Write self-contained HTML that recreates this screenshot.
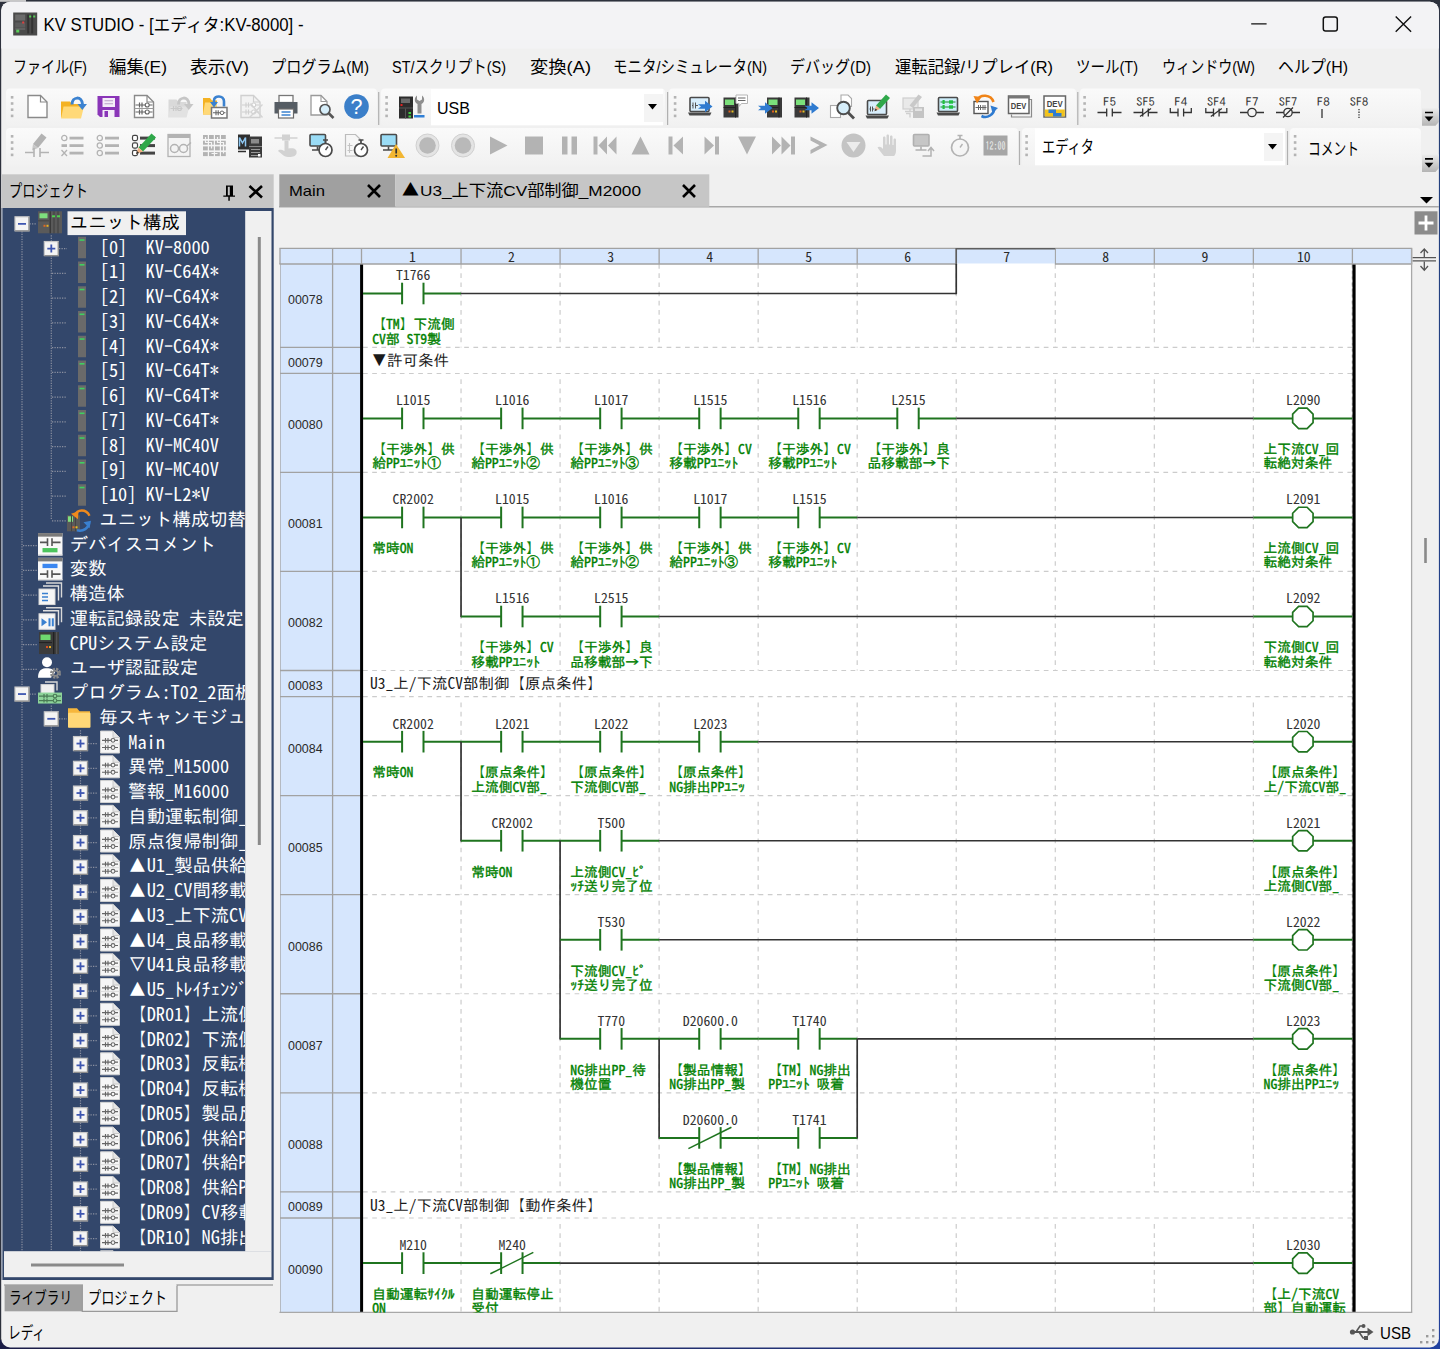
<!DOCTYPE html>
<html lang="ja"><head><meta charset="utf-8"><title>KV STUDIO - [エディタ:KV-8000]</title>
<style>
html,body{margin:0;padding:0;background:#1b2438;overflow:hidden}
body{width:1440px;height:1349px}
svg{display:block}
text{white-space:pre}
</style></head><body>
<svg width="1440" height="1349" viewBox="0 0 1440 1349">
<defs><linearGradient id="tbg" x1="0" y1="0" x2="0" y2="1"><stop offset="0" stop-color="#fafafa"/><stop offset="1" stop-color="#f1f1f1"/></linearGradient><clipPath id="winclip"><rect x="1.2" y="1.7" width="1437.7" height="1345.8" rx="9" ry="9"/></clipPath></defs>
<rect x="0" y="0" width="1440" height="1349" fill="#2d313c" />
<linearGradient id="rgt" x1="0" y1="0" x2="0" y2="1"><stop offset="0" stop-color="#2d313c"/><stop offset="0.12" stop-color="#23407e"/><stop offset="1" stop-color="#21409a"/></linearGradient>
<linearGradient id="btm" x1="0" y1="0" x2="1" y2="0"><stop offset="0" stop-color="#1a1c46"/><stop offset="0.6" stop-color="#23347a"/><stop offset="1" stop-color="#2142a0"/></linearGradient>
<rect x="1430" y="0" width="10" height="1349" fill="url(#rgt)" />
<rect x="0" y="1340" width="1440" height="9" fill="url(#btm)" />
<rect x="0" y="0" width="26" height="1.8" fill="#c8c8c8" />
<g clip-path="url(#winclip)">
<rect x="0" y="0" width="1440" height="1349" fill="#f0f0f0" />
<rect x="0" y="0" width="1440" height="48.5" fill="#f3f3f5" />
<g transform="translate(13.2,12.5)"><rect x="0" y="0" width="24" height="23" fill="#4a4a4a"/><rect x="2" y="2" width="10" height="6" fill="#6b6b6b"/><rect x="14" y="2" width="2" height="19" fill="#333"/><rect x="18" y="2" width="2" height="19" fill="#333"/><rect x="2" y="10" width="10" height="5" fill="#5c5c5c"/><rect x="9" y="9" width="2" height="2" fill="#e04040"/><rect x="3" y="17" width="3" height="3" fill="#5ad05a"/><rect x="16" y="3" width="2" height="2" fill="#5ad05a"/><rect x="20" y="3" width="2" height="2" fill="#5ad05a"/><rect x="2" y="16" width="10" height="1" fill="#777"/></g>
<text x="43.5" y="31" font-size="17.5" fill="#000" font-family='"Liberation Sans","Noto Sans CJK JP",sans-serif' textLength="260" lengthAdjust="spacingAndGlyphs" >KV STUDIO - [エディタ:KV-8000] -</text>
<line x1="1251.2" y1="23.9" x2="1266.6" y2="23.9" stroke="#111" stroke-width="1.4" />
<rect x="1323.3" y="17" width="14" height="14" rx="2.3" fill="none" stroke="#111" stroke-width="1.5"/>
<path d="M1395.7,16.5 L1411.1,31.7 M1411.1,16.5 L1395.7,31.7" stroke="#111" stroke-width="1.4" fill="none"/>
<text x="13" y="73" font-size="17" fill="#000" font-family='"Liberation Sans","Noto Sans CJK JP",sans-serif' textLength="74" lengthAdjust="spacingAndGlyphs" >ファイル(F)</text>
<text x="109" y="73" font-size="17" fill="#000" font-family='"Liberation Sans","Noto Sans CJK JP",sans-serif' textLength="58" lengthAdjust="spacingAndGlyphs" >編集(E)</text>
<text x="190" y="73" font-size="17" fill="#000" font-family='"Liberation Sans","Noto Sans CJK JP",sans-serif' textLength="59" lengthAdjust="spacingAndGlyphs" >表示(V)</text>
<text x="271" y="73" font-size="17" fill="#000" font-family='"Liberation Sans","Noto Sans CJK JP",sans-serif' textLength="98" lengthAdjust="spacingAndGlyphs" >プログラム(M)</text>
<text x="392" y="73" font-size="17" fill="#000" font-family='"Liberation Sans","Noto Sans CJK JP",sans-serif' textLength="114" lengthAdjust="spacingAndGlyphs" >ST/スクリプト(S)</text>
<text x="530" y="73" font-size="17" fill="#000" font-family='"Liberation Sans","Noto Sans CJK JP",sans-serif' textLength="61" lengthAdjust="spacingAndGlyphs" >変換(A)</text>
<text x="613" y="73" font-size="17" fill="#000" font-family='"Liberation Sans","Noto Sans CJK JP",sans-serif' textLength="154" lengthAdjust="spacingAndGlyphs" >モニタ/シミュレータ(N)</text>
<text x="790" y="73" font-size="17" fill="#000" font-family='"Liberation Sans","Noto Sans CJK JP",sans-serif' textLength="81" lengthAdjust="spacingAndGlyphs" >デバッグ(D)</text>
<text x="895" y="73" font-size="17" fill="#000" font-family='"Liberation Sans","Noto Sans CJK JP",sans-serif' textLength="158" lengthAdjust="spacingAndGlyphs" >運転記録/リプレイ(R)</text>
<text x="1076" y="73" font-size="17" fill="#000" font-family='"Liberation Sans","Noto Sans CJK JP",sans-serif' textLength="62" lengthAdjust="spacingAndGlyphs" >ツール(T)</text>
<text x="1162" y="73" font-size="17" fill="#000" font-family='"Liberation Sans","Noto Sans CJK JP",sans-serif' textLength="93" lengthAdjust="spacingAndGlyphs" >ウィンドウ(W)</text>
<text x="1278" y="73" font-size="17" fill="#000" font-family='"Liberation Sans","Noto Sans CJK JP",sans-serif' textLength="70" lengthAdjust="spacingAndGlyphs" >ヘルプ(H)</text>
<rect x="6" y="88.5" width="371" height="37.5" rx="4" fill="url(#tbg)"/>
<rect x="381" y="88.5" width="284" height="37.5" rx="4" fill="url(#tbg)"/>
<rect x="669" y="88.5" width="407" height="37.5" rx="4" fill="url(#tbg)"/>
<rect x="1080" y="88.5" width="341" height="37.5" rx="4" fill="url(#tbg)"/>
<rect x="10.8" y="96" width="2.6" height="2.6" fill="#b4b4b4" />
<rect x="10.8" y="102.2" width="2.6" height="2.6" fill="#b4b4b4" />
<rect x="10.8" y="108.4" width="2.6" height="2.6" fill="#b4b4b4" />
<rect x="10.8" y="114.6" width="2.6" height="2.6" fill="#b4b4b4" />
<rect x="385.3" y="96" width="2.6" height="2.6" fill="#b4b4b4" />
<rect x="385.3" y="102.2" width="2.6" height="2.6" fill="#b4b4b4" />
<rect x="385.3" y="108.4" width="2.6" height="2.6" fill="#b4b4b4" />
<rect x="385.3" y="114.6" width="2.6" height="2.6" fill="#b4b4b4" />
<rect x="673.8" y="96" width="2.6" height="2.6" fill="#b4b4b4" />
<rect x="673.8" y="102.2" width="2.6" height="2.6" fill="#b4b4b4" />
<rect x="673.8" y="108.4" width="2.6" height="2.6" fill="#b4b4b4" />
<rect x="673.8" y="114.6" width="2.6" height="2.6" fill="#b4b4b4" />
<rect x="1083.3" y="96" width="2.6" height="2.6" fill="#b4b4b4" />
<rect x="1083.3" y="102.2" width="2.6" height="2.6" fill="#b4b4b4" />
<rect x="1083.3" y="108.4" width="2.6" height="2.6" fill="#b4b4b4" />
<rect x="1083.3" y="114.6" width="2.6" height="2.6" fill="#b4b4b4" />
<line x1="378.7" y1="92" x2="378.7" y2="125" stroke="#b0b0b0" stroke-width="1.2" />
<line x1="667.6" y1="92" x2="667.6" y2="125" stroke="#b0b0b0" stroke-width="1.2" />
<line x1="1077.8" y1="92" x2="1077.8" y2="125" stroke="#b0b0b0" stroke-width="1.2" />
<rect x="6" y="128" width="1012" height="38.5" rx="4" fill="url(#tbg)"/>
<rect x="1022" y="128" width="263" height="38.5" rx="4" fill="url(#tbg)"/>
<rect x="1290" y="128" width="131" height="38.5" rx="4" fill="url(#tbg)"/>
<rect x="10.8" y="135" width="2.6" height="2.6" fill="#b4b4b4" />
<rect x="10.8" y="141.2" width="2.6" height="2.6" fill="#b4b4b4" />
<rect x="10.8" y="147.4" width="2.6" height="2.6" fill="#b4b4b4" />
<rect x="10.8" y="153.6" width="2.6" height="2.6" fill="#b4b4b4" />
<rect x="1025.3" y="135" width="2.6" height="2.6" fill="#b4b4b4" />
<rect x="1025.3" y="141.2" width="2.6" height="2.6" fill="#b4b4b4" />
<rect x="1025.3" y="147.4" width="2.6" height="2.6" fill="#b4b4b4" />
<rect x="1025.3" y="153.6" width="2.6" height="2.6" fill="#b4b4b4" />
<rect x="1293.8" y="135" width="2.6" height="2.6" fill="#b4b4b4" />
<rect x="1293.8" y="141.2" width="2.6" height="2.6" fill="#b4b4b4" />
<rect x="1293.8" y="147.4" width="2.6" height="2.6" fill="#b4b4b4" />
<rect x="1293.8" y="153.6" width="2.6" height="2.6" fill="#b4b4b4" />
<line x1="1019.5" y1="131" x2="1019.5" y2="165" stroke="#b0b0b0" stroke-width="1.2" />
<line x1="1287.5" y1="131" x2="1287.5" y2="165" stroke="#b0b0b0" stroke-width="1.2" />
<rect x="431" y="89" width="232" height="36.3" fill="#ffffff" />
<rect x="644" y="94" width="19" height="28" fill="#f4f4f4" />
<path d="M648,104 L657,104 L652.5,109.5 Z" fill="#000"/>
<text x="437" y="114" font-size="17" fill="#000" font-family='"Liberation Sans","Noto Sans CJK JP",sans-serif' textLength="33" lengthAdjust="spacingAndGlyphs" >USB</text>
<rect x="1035" y="128.3" width="250" height="37" fill="#ffffff" />
<rect x="1264" y="133" width="19" height="28" fill="#f4f4f4" />
<path d="M1268,144 L1277,144 L1272.5,149.5 Z" fill="#000"/>
<text x="1042" y="153" font-size="17" fill="#000" font-family='"Liberation Sans","Noto Sans CJK JP",sans-serif' textLength="52" lengthAdjust="spacingAndGlyphs" >エディタ</text>
<text x="1308" y="155" font-size="17" fill="#000" font-family='"Liberation Sans","Noto Sans CJK JP",sans-serif' textLength="51" lengthAdjust="spacingAndGlyphs" >コメント</text>
<linearGradient id="chg" x1="0" y1="0" x2="0" y2="1"><stop offset="0" stop-color="#ececec"/><stop offset="1" stop-color="#b4b4b4"/></linearGradient>
<path d="M1422,108.2 h17 v13.5 l-3.5,4 h-13.5 z" fill="url(#chg)"/>
<line x1="1425" y1="112.5" x2="1433" y2="112.5" stroke="#000" stroke-width="1.7" />
<path d="M1424.6,116.4 h8.8 l-4.4,5 z" fill="#000"/>
<path d="M1422,154.5 h17 v13.5 l-3.5,4 h-13.5 z" fill="url(#chg)"/>
<line x1="1425" y1="158.8" x2="1433" y2="158.8" stroke="#000" stroke-width="1.7" />
<path d="M1424.6,162.7 h8.8 l-4.4,5 z" fill="#000"/>
<rect x="2" y="174.3" width="271.7" height="33.7" fill="#c6c6c6" />
<text x="9" y="197" font-size="17" fill="#000" font-family='"Liberation Sans","Noto Sans CJK JP",sans-serif' textLength="79" lengthAdjust="spacingAndGlyphs" >プロジェクト</text>
<path d="M226,185.5 h7 v10 h2 v1.3 h-5.2 v4 h-1.5 v-4 h-5 v-1.3 h2.7 z M227.8,186.8 v8.5 h2 v-8.5 z" fill="#000" fill-rule="evenodd"/>
<path d="M249.5,186 L262,197.5 M262,186 L249.5,197.5" stroke="#000" stroke-width="2.6" fill="none"/>
<rect x="1" y="208" width="1.7" height="1072" fill="#8e97a8" />
<rect x="2.6" y="208" width="271.1" height="1072" fill="#33476b" />
<rect x="245.2" y="211" width="26.3" height="1040.5" fill="#f0f0f0" />
<rect x="4" y="1251.2" width="267.5" height="26" fill="#f0f0f0" />
<rect x="257.8" y="237" width="3" height="608" fill="#8a8a8a" />
<rect x="31" y="1263.5" width="93" height="3" fill="#8a8a8a" />
<line x1="4" y1="1285" x2="273" y2="1285" stroke="#a8a8a8" stroke-width="1.4" />
<rect x="4.6" y="1285" width="77.7" height="26.3" fill="#a0a0a0" />
<path d="M82.3,1285 V1311.3 H177 V1285" fill="#f0f0f0" stroke="#9a9a9a" stroke-width="1.3"/>
<rect x="83" y="1284" width="93.4" height="2" fill="#f0f0f0" />
<text x="9" y="1304" font-size="17" fill="#000" font-family='"Liberation Sans","Noto Sans CJK JP",sans-serif' textLength="63" lengthAdjust="spacingAndGlyphs" >ライブラリ</text>
<text x="88" y="1304" font-size="17" fill="#000" font-family='"Liberation Sans","Noto Sans CJK JP",sans-serif' textLength="79" lengthAdjust="spacingAndGlyphs" >プロジェクト</text>
<text x="8" y="1339" font-size="17" fill="#000" font-family='"Liberation Sans","Noto Sans CJK JP",sans-serif' textLength="37" lengthAdjust="spacingAndGlyphs" >レディ</text>
<g transform="translate(1349,1322)" fill="#555" stroke="#555"><circle cx="3.5" cy="10" r="2.6" stroke="none"/><path d="M3,10 H22" stroke-width="1.8" fill="none"/><path d="M18.5,5.8 L24.5,10 L18.5,14.2 Z" stroke="none"/><path d="M7,10 L11,4 H14" stroke-width="1.6" fill="none"/><circle cx="14.5" cy="4" r="2" stroke="none"/><path d="M10,10 L14,16 H16" stroke-width="1.6" fill="none"/><rect x="15" y="14" width="4" height="4" stroke="none"/></g>
<text x="1380" y="1339" font-size="17" fill="#000" font-family='"Liberation Sans","Noto Sans CJK JP",sans-serif' textLength="31" lengthAdjust="spacingAndGlyphs" >USB</text>
<rect x="1432" y="1341" width="2.4" height="2.4" fill="#9a9a9a" />
<rect x="1426" y="1341" width="2.4" height="2.4" fill="#9a9a9a" />
<rect x="1420" y="1341" width="2.4" height="2.4" fill="#9a9a9a" />
<rect x="1432" y="1335" width="2.4" height="2.4" fill="#9a9a9a" />
<rect x="1426" y="1335" width="2.4" height="2.4" fill="#9a9a9a" />
<rect x="1432" y="1329" width="2.4" height="2.4" fill="#9a9a9a" />
<line x1="279" y1="206.8" x2="1439" y2="206.8" stroke="#a8a8a8" stroke-width="1.4" />
<rect x="279.3" y="174.3" width="116" height="32.5" fill="#a0a0a0" />
<rect x="395.3" y="174.3" width="314" height="32.5" fill="#c6c6c6" />
<text x="289" y="196" font-size="15" fill="#000" font-family='"Liberation Sans","Noto Sans CJK JP",sans-serif' textLength="36" lengthAdjust="spacingAndGlyphs" >Main</text>
<path d="M368,185 L380,197 M380,185 L368,197" stroke="#000" stroke-width="2.6" fill="none"/>
<text x="402" y="196" font-size="16.5" fill="#000" font-family='"Noto Sans CJK JP",sans-serif' textLength="17" lengthAdjust="spacingAndGlyphs" >▲</text>
<text x="420" y="196" font-size="15.5" fill="#000" font-family='"Liberation Sans","Noto Sans CJK JP",sans-serif' textLength="221" lengthAdjust="spacingAndGlyphs" >U3_上下流CV部制御_M2000</text>
<path d="M683,185 L695,197 M695,185 L683,197" stroke="#000" stroke-width="2.6" fill="none"/>
<path d="M1420,197 L1433,197 L1426.5,203.5 Z" fill="#000"/>
<rect x="1414.5" y="211.3" width="23" height="23.2" fill="#8c8c8c" />
<path d="M1426,215.5 V230.5 M1418.5,223 H1433.5" stroke="#fff" stroke-width="2.8" fill="none"/>
<g stroke="#555" stroke-width="1.3" fill="none"><path d="M1412.5,257.7 H1436 M1412.5,260.8 H1436"/><path d="M1424.3,249.5 V257 M1420.5,253 L1424.3,249 L1428,253"/><path d="M1424.3,261.5 V270 M1420.5,266 L1424.3,270.3 L1428,266"/></g>
<rect x="1424.2" y="538" width="2.6" height="25" fill="#8a8a8a" />
<g transform="translate(25.5,94.5)"><path d="M2.5,1 H15 L21.5,7.5 V23 H2.5 Z" fill="#fff" stroke="#8a8a8a" stroke-width="1.4"/><path d="M15,1 V7.5 H21.5" fill="none" stroke="#8a8a8a" stroke-width="1.2"/></g>
<g transform="translate(61,94.5)"><path d="M0,7 H9 L11,9.5 H20 V23 H0 Z" fill="#f4b223"/><path d="M2.5,12 H23 L20,24 H0 Z" fill="#ffd978"/><path d="M11,10 C11,2 21,1 21.5,10" fill="none" stroke="#3b82d0" stroke-width="3"/><path d="M16.5,9.5 H26 L21.3,15.5 Z" fill="#3b82d0"/></g>
<g transform="translate(96.5,94.5)"><path d="M1,1.5 H23 V22.5 H3.5 L1,20 Z" fill="#8a35b8"/><rect x="6" y="3.5" width="12.5" height="9" fill="#f4ecf8"/><path d="M8,6.2 H16.5 M8,9.2 H16.5" stroke="#b9a0c8" stroke-width="1.1"/><rect x="6" y="15.5" width="12" height="7" fill="#f4ecf8"/><rect x="8" y="16.5" width="3.5" height="6" fill="#8a35b8"/></g>
<g transform="translate(132,94.5)"><path d="M2.5,1 H15 L21.5,7.5 V23 H2.5 Z" fill="#fff" stroke="#8a8a8a" stroke-width="1.4"/><path d="M15,1 V7.5 H21.5" fill="none" stroke="#8a8a8a" stroke-width="1.2"/><path d="M2.5,14 H21.5" stroke="#9a9a9a" stroke-width="1"/><path d="M3.5,10.5 H20.5 M7.5,8.0 V13.0 M10,8.0 V13.0" stroke="#666" stroke-width="1.2" fill="none"/><circle cx="15.2" cy="10.5" r="2" fill="#fff" stroke="#666" stroke-width="1.1"/><path d="M3.5,17.5 H20.5 M7.5,15.0 V20.0 M10,15.0 V20.0" stroke="#666" stroke-width="1.2" fill="none"/><circle cx="15.2" cy="17.5" r="2" fill="#fff" stroke="#666" stroke-width="1.1"/></g>
<g transform="translate(167.5,94.5)"><path d="M1,5 H9 L11,7.5 H19 V22 H1 Z" fill="#d9d9d9"/><path d="M3,12 H22 L19,23 H0.5 Z" fill="#e2e2e2"/><path d="M11,10 C11,2 21,1 21.5,10" fill="none" stroke="#c6c6c6" stroke-width="3"/><path d="M16.5,9.5 H26 L21.3,15.5 Z" fill="#c6c6c6"/><path d="M3,14 H15 M6,11.5 V16.5 M8.5,11.5 V16.5" stroke="#c9c9c9" stroke-width="1.2" fill="none"/><circle cx="12" cy="14" r="2" fill="none" stroke="#c9c9c9" stroke-width="1.1"/></g>
<g transform="translate(203,94.5)"><path d="M0,3.5 H7 L9,6 H14 V20 H0 Z" fill="#f4b223"/><path d="M2,8 H14 V20 H0 Z" fill="#ffd978"/><path d="M11,9 V6 C11,0.5 21,0.5 21,7 V12" fill="none" stroke="#3b82d0" stroke-width="2.6"/><path d="M7,7.5 L15,7.5 L11,13 Z" fill="#3b82d0"/><rect x="8.5" y="13" width="15.5" height="10.5" fill="#fff" stroke="#777" stroke-width="1.5"/><path d="M10,18.3 H22.5 M13,15.8 V20.8 M15.2,15.8 V20.8" stroke="#666" stroke-width="1.1" fill="none"/><circle cx="19" cy="18.3" r="1.8" fill="#fff" stroke="#666" stroke-width="1"/></g>
<g transform="translate(238.5,94.5)"><path d="M2.5,1 H15 L21.5,7.5 V23 H2.5 Z" fill="#f3f3f3" stroke="#d0d0d0" stroke-width="1.4"/><path d="M15,1 V7.5 H21.5" fill="none" stroke="#d0d0d0" stroke-width="1.2"/><path d="M3.5,10.5 H20.5 M7.5,8.0 V13.0 M10,8.0 V13.0" stroke="#d0d0d0" stroke-width="1.2" fill="none"/><circle cx="15.2" cy="10.5" r="2" fill="#fff" stroke="#d0d0d0" stroke-width="1.1"/><path d="M3.5,17.5 H20.5 M7.5,15.0 V20.0 M10,15.0 V20.0" stroke="#d0d0d0" stroke-width="1.2" fill="none"/><circle cx="15.2" cy="17.5" r="2" fill="#fff" stroke="#d0d0d0" stroke-width="1.1"/><path d="M12,9 L24,23 M24,10 L11,23" stroke="#d4d4d4" stroke-width="1.4"/></g>
<g transform="translate(274,94.5)"><rect x="5" y="1" width="14" height="7" fill="#fff" stroke="#777" stroke-width="1.3"/><path d="M0.5,7.5 H23.5 V19 H0.5 Z" fill="#555c63"/><rect x="4.5" y="14.5" width="15" height="9" fill="#fff" stroke="#6a6a6a" stroke-width="1.2"/><path d="M7.5,17.5 H16.5 M7.5,20.5 H16.5" stroke="#3b82d0" stroke-width="1.6"/></g>
<g transform="translate(309.5,94.5)"><path d="M1.5,1 H11.5 L17.5,7 V20.5 H1.5 Z" fill="#fff" stroke="#9a9a9a" stroke-width="1.3"/><path d="M11.5,1 V7 H17.5" fill="none" stroke="#9a9a9a" stroke-width="1.1"/><circle cx="15.5" cy="15" r="5" fill="#d6eefa" stroke="#555" stroke-width="1.7"/><path d="M19.2,18.8 L24,23.5" stroke="#555" stroke-width="2.6"/></g>
<circle cx="356.5" cy="106.5" r="12.3" fill="#3b7fc9"/>
<text x="356.5" y="114.1" font-size="21.5" fill="#fff" font-family='"Liberation Sans","Noto Sans CJK JP",sans-serif' text-anchor="middle" >?</text>
<g transform="translate(399,94.5)"><rect x="0" y="2" width="14" height="22" fill="#2c2c2c"/><rect x="2" y="4" width="9" height="4.5" fill="#6a6a6a"/><rect x="1.5" y="9.5" width="2" height="2" fill="#e02020"/><rect x="0" y="13" width="14" height="1" fill="#555"/><rect x="6" y="14" width="1" height="10" fill="#555"/><rect x="9.5" y="17.5" width="2.5" height="2" fill="#40d040"/><rect x="9.5" y="21" width="2.5" height="2" fill="#40d040"/><path d="M18,1 L18,5 L20.5,6.5 L23,5 L23,1 C26,3 26,8 22.5,9.5 L22.5,19 H18.5 L18.500,9.5 C15,8 15,3 18,1 Z" fill="#8e8e8e"/><rect x="15" y="20.5" width="10.5" height="2.5" fill="#2f7fd6"/></g>
<g transform="translate(688,94.5)"><rect x="2" y="3" width="19" height="14" rx="1" fill="#d8eefc" stroke="#4a4a4a" stroke-width="1.6"/><path d="M0,18 H23.5 L22,21 H1.5 Z" fill="#4a4a4a"/><path d="M5,8 V14 M7.5,8 V14 M4,11 H5 M7.5,11 H10" stroke="#555" stroke-width="1"/><path d="M10,9.8 H17 V6.2 L24.5,12 L17,17.8 V14.2 H10 L13,12 Z" fill="#2f7bd0"/></g>
<g transform="translate(723.5,94.5)"><g transform="translate(0,0)"><rect x="0" y="3" width="15" height="20" fill="#3a3a3a"/><rect x="1.5" y="5" width="9" height="5.500" fill="#7be07b"/><rect x="11.5" y="3" width="1" height="20" fill="#222"/><rect x="0" y="12.5" width="11.5" height="1" fill="#222"/><rect x="5" y="16" width="2" height="2" fill="#e06020"/><rect x="8" y="16" width="2" height="2" fill="#e8c020"/></g><path d="M12.5,0.5 H24 V9 H18 L15.5,12 V9 H12.5 Z" fill="#fff" stroke="#b5b5b5" stroke-width="1"/><path d="M14.500,3.500 H22 M14.500,6 H22" stroke="#666" stroke-width="1.1"/></g>
<g transform="translate(759,94.5)"><g transform="translate(8,0)"><rect x="0" y="3" width="15" height="20" fill="#3a3a3a"/><rect x="1.5" y="5" width="9" height="5.500" fill="#7be07b"/><rect x="11.5" y="3" width="1" height="20" fill="#222"/><rect x="0" y="12.5" width="11.5" height="1" fill="#222"/><rect x="5" y="16" width="2" height="2" fill="#e06020"/><rect x="8" y="16" width="2" height="2" fill="#e8c020"/></g><path d="M-1,11.3 H6 V7.7 L13.5,13.5 L6,19.3 V15.7 H-1 L2,13.5 Z" fill="#2f7bd0"/></g>
<g transform="translate(794.5,94.5)"><g transform="translate(0,0)"><rect x="0" y="3" width="15" height="20" fill="#3a3a3a"/><rect x="1.5" y="5" width="9" height="5.500" fill="#7be07b"/><rect x="11.5" y="3" width="1" height="20" fill="#222"/><rect x="0" y="12.5" width="11.5" height="1" fill="#222"/><rect x="5" y="16" width="2" height="2" fill="#e06020"/><rect x="8" y="16" width="2" height="2" fill="#e8c020"/></g><path d="M10,11.3 H17 V7.7 L24.5,13.5 L17,19.3 V15.7 H10 L13,13.5 Z" fill="#2f7bd0"/></g>
<g transform="translate(830,94.5)"><path d="M11,0.500 H18 L21.500,4 V12 H11 Z" fill="#fff" stroke="#aaa" stroke-width="1.1"/><rect x="0.5" y="11" width="10" height="12" fill="#fff" stroke="#aaa" stroke-width="1.1"/><circle cx="13.500" cy="13.500" r="6.3" fill="#d6eefa" stroke="#4e4e4e" stroke-width="1.9"/><path d="M18.300,18.300 L24,24" stroke="#4e4e4e" stroke-width="2.8"/></g>
<g transform="translate(865.5,94.5)"><g transform="translate(0,3)"><rect x="2" y="3" width="19" height="14" rx="1" fill="#d8eefc" stroke="#4a4a4a" stroke-width="1.6"/><path d="M0,18 H23.5 L22,21 H1.5 Z" fill="#4a4a4a"/></g><path d="M5,12 V17 M7,12 V17 M4,14.5 H5 M7,14.5 H9" stroke="#555" stroke-width="1"/><path d="M20.500,0 L24.500,3.500 L14.500,14.500 L10.500,11 Z" fill="#2fa84a"/><path d="M10.500,11 L14.500,14.500 L9,16.800 Z" fill="#f0b080"/><path d="M9,16.800 L10,14 L11.800,15.600 Z" fill="#333"/></g>
<g transform="translate(901,94.5)"><rect x="2" y="3.500" width="15" height="11" fill="#e9e9e9" stroke="#cfcfcf" stroke-width="1.2"/><path d="M4,17 H15 M9,14.500 V17" stroke="#cfcfcf" stroke-width="1.400"/><path d="M17.500,0 L21,2.500 L12,13.500 L8.500,11 Z" fill="#c9c9c9"/><rect x="12" y="12.500" width="11" height="11" fill="#c4c4c4"/><rect x="14" y="14" width="7" height="2.500" fill="#e4e4e4"/><path d="M5,19 L9,19 L9,23 " stroke="#cfcfcf" stroke-width="1.4" fill="none"/></g>
<g transform="translate(936.5,94.5)"><rect x="2" y="3" width="19" height="14" rx="1" fill="#cdeefa" stroke="#4a4a4a" stroke-width="1.6"/><path d="M0,18 H23.5 L22,21 H1.5 Z" fill="#4a4a4a"/><path d="M4,7.500 H19 M4,12.500 H19" stroke="#1a8a2a" stroke-width="1.1"/><rect x="6" y="5.500" width="2.200" height="4" fill="#20c040"/><rect x="6" y="10.500" width="2.200" height="4" fill="#20c040"/><rect x="12.500" y="5.800" width="4" height="3.400" fill="#20c040"/><rect x="12.500" y="10.800" width="4" height="3.400" fill="#20c040"/></g>
<g transform="translate(972,94.5)"><rect x="2" y="7" width="14" height="12" fill="#fff" stroke="#555" stroke-width="1.400"/><path d="M3.500,13 H14.500 M6.500,10.500 V15.500 M8.500,10.500 V15.500 M11,10.500 V15.500 M13,10.500 V15.500" stroke="#666" stroke-width="1"/><path d="M5.500,5.500 C8,-0.500 19,-0.500 21.500,7.500" fill="none" stroke="#f08418" stroke-width="2.600"/><path d="M1.500,1.500 L9.500,2.500 L5,9 Z" fill="#f08418"/><path d="M22.500,13 C22.500,20 15,24.500 9.500,21.500" fill="none" stroke="#2f7bd0" stroke-width="2.600"/><path d="M18.500,11 L26,13.500 L20.500,18.500 Z" fill="#2f7bd0"/></g>
<g transform="translate(1007.5,94.5)"><path d="M4,20 V22.500 H24 V5 H21" fill="none" stroke="#8a8a8a" stroke-width="1.200"/><rect x="1" y="1.500" width="20.500" height="17.500" fill="#fff" stroke="#666" stroke-width="1.500"/><rect x="1" y="1.500" width="20.500" height="2.500" fill="#777"/><text x="11" y="14.5" font-size="9.500" font-weight="bold" font-family='"Liberation Sans","Noto Sans CJK JP",sans-serif' fill="#444" text-anchor="middle" textLength="15.500" lengthAdjust="spacingAndGlyphs">DEV</text></g>
<g transform="translate(1043,94.5)"><rect x="1" y="1.500" width="21.500" height="21" fill="#fff" stroke="#666" stroke-width="1.500"/><rect x="1.800" y="15" width="20" height="7" fill="#f2c31c"/><path d="M5.500,15 H13 V18.500 H18.500 V22 H10 V18.500 H5.500 Z" fill="#2f7bd0"/><text x="11.700" y="12.500" font-size="9.500" font-weight="bold" font-family='"Liberation Sans","Noto Sans CJK JP",sans-serif' fill="#444" text-anchor="middle" textLength="16" lengthAdjust="spacingAndGlyphs">DEV</text></g>
<text x="1109.5" y="106.2" font-size="11.5" fill="#333" font-family='"IPAGothic","Noto Sans CJK JP","Liberation Mono",monospace' text-anchor="middle" textLength="13" lengthAdjust="spacingAndGlyphs" >F5</text>
<text x="1145.5" y="106.2" font-size="11.5" fill="#333" font-family='"IPAGothic","Noto Sans CJK JP","Liberation Mono",monospace' text-anchor="middle" textLength="18.5" lengthAdjust="spacingAndGlyphs" >SF5</text>
<text x="1180.8" y="106.2" font-size="11.5" fill="#333" font-family='"IPAGothic","Noto Sans CJK JP","Liberation Mono",monospace' text-anchor="middle" textLength="13" lengthAdjust="spacingAndGlyphs" >F4</text>
<text x="1216.3" y="106.2" font-size="11.5" fill="#333" font-family='"IPAGothic","Noto Sans CJK JP","Liberation Mono",monospace' text-anchor="middle" textLength="18.5" lengthAdjust="spacingAndGlyphs" >SF4</text>
<text x="1252" y="106.2" font-size="11.5" fill="#333" font-family='"IPAGothic","Noto Sans CJK JP","Liberation Mono",monospace' text-anchor="middle" textLength="13" lengthAdjust="spacingAndGlyphs" >F7</text>
<text x="1288" y="106.2" font-size="11.5" fill="#333" font-family='"IPAGothic","Noto Sans CJK JP","Liberation Mono",monospace' text-anchor="middle" textLength="18.5" lengthAdjust="spacingAndGlyphs" >SF7</text>
<text x="1323.3" y="106.2" font-size="11.5" fill="#333" font-family='"IPAGothic","Noto Sans CJK JP","Liberation Mono",monospace' text-anchor="middle" textLength="13" lengthAdjust="spacingAndGlyphs" >F8</text>
<text x="1359" y="106.2" font-size="11.5" fill="#333" font-family='"IPAGothic","Noto Sans CJK JP","Liberation Mono",monospace' text-anchor="middle" textLength="18.5" lengthAdjust="spacingAndGlyphs" >SF8</text>
<path d="M1097.5,112.5 H1106.7 M1112.3,112.5 H1121.5 M1106.7,108.5 V116.5 M1112.3,108.5 V116.5" stroke="#333" stroke-width="1.300" fill="none"/>
<path d="M1133.5,112.5 H1142.7 M1148.3,112.5 H1157.5 M1142.7,108.5 V116.5 M1148.3,108.5 V116.5" stroke="#333" stroke-width="1.300" fill="none"/>
<path d="M1140.0,116.5 L1151.0,108.5" stroke="#333" stroke-width="1.300" fill="none"/>
<path d="M1170.3,108.0 V112.5 H1178.0 M1183.6,112.5 H1191.3 V108.0 M1178.0,108.5 V116.5 M1183.6,108.5 V116.5" stroke="#333" stroke-width="1.300" fill="none"/>
<path d="M1205.8,108.0 V112.5 H1213.5 M1219.1,112.5 H1226.8 V108.0 M1213.5,108.5 V116.5 M1219.1,108.5 V116.5" stroke="#333" stroke-width="1.300" fill="none"/>
<path d="M1210.8,116.5 L1221.8,108.5" stroke="#333" stroke-width="1.300" fill="none"/>
<path d="M1240,112.5 H1247.8 M1256.2,112.5 H1264" stroke="#333" stroke-width="1.300" fill="none"/><circle cx="1252" cy="112.5" r="4.200" stroke="#333" stroke-width="1.300" fill="none"/>
<path d="M1276,112.5 H1283.8 M1292.2,112.5 H1300 M1283,117.5 L1293,107.5" stroke="#333" stroke-width="1.300" fill="none"/><circle cx="1288" cy="112.5" r="4.200" stroke="#333" stroke-width="1.300" fill="none"/>
<path d="M1322.0,109.0 V118.0" stroke="#333" stroke-width="1.300" fill="none"/>
<path d="M1359,109.0 V118.5" stroke="#333" stroke-width="1.300" stroke-dasharray="1.300 1.300" fill="none"/>
<g transform="translate(25,133.5)"><path d="M16.500,0 L21.500,4 L13,14.500 L8,10.500 Z" fill="#b3b3b3"/><path d="M8,10.500 L13,14.500 L7,17 Z" fill="#c8c8c8"/><path d="M0,19 H9 M15,19 H24 M9,14.500 V23.500 M15,14.500 V23.500" stroke="#b3b3b3" stroke-width="1.600" fill="none"/></g>
<g transform="translate(60.5,133.5)"><rect x="9" y="3.2" width="14" height="2.800" fill="#b3b3b3"/><circle cx="3.800" cy="4.5" r="2.600" fill="none" stroke="#b3b3b3" stroke-width="1.300"/><rect x="9" y="10.7" width="14" height="2.800" fill="#b3b3b3"/><rect x="1" y="10.7" width="5.500" height="2.800" fill="#b3b3b3"/><rect x="9" y="18.2" width="14" height="2.800" fill="#b3b3b3"/><path d="M1,16.5 L6.500,22.5 M6.500,16.5 L1,22.5" stroke="#b3b3b3" stroke-width="1.300"/></g>
<g transform="translate(96,133.5)"><rect x="9" y="3.2" width="14" height="2.800" fill="#b3b3b3"/><circle cx="3.800" cy="4.5" r="2.600" fill="none" stroke="#b3b3b3" stroke-width="1.300"/><rect x="9" y="10.7" width="14" height="2.800" fill="#b3b3b3"/><circle cx="3.800" cy="12" r="2.600" fill="none" stroke="#b3b3b3" stroke-width="1.300"/><rect x="9" y="18.2" width="14" height="2.800" fill="#b3b3b3"/><circle cx="3.800" cy="19.5" r="2.600" fill="none" stroke="#b3b3b3" stroke-width="1.300"/></g>
<g transform="translate(131.5,133.5)"><rect x="8.500" y="3.1" width="15" height="3" fill="#444"/><rect x="1" y="1.9" width="5" height="5.200" rx="1.500" fill="#fff" stroke="#444" stroke-width="1.200"/><rect x="8.500" y="10.6" width="15" height="3" fill="#444"/><rect x="1" y="9.4" width="5" height="5.200" rx="1.500" fill="#fff" stroke="#444" stroke-width="1.200"/><rect x="8.500" y="18.1" width="15" height="3" fill="#444"/><rect x="1" y="16.9" width="5" height="5.200" rx="1.500" fill="#fff" stroke="#444" stroke-width="1.200"/><path d="M20,0 L24.500,4 L11.500,18 L7,14 Z" fill="#2fa84a"/><path d="M7,14 L11.500,18 L4.500,20.500 Z" fill="#f0b080"/><path d="M4.500,20.500 L5.500,17.500 L7.700,19.400 Z" fill="#333"/></g>
<g transform="translate(167,133.5)"><rect x="1" y="1" width="22" height="22" fill="#f4f4f4" stroke="#b3b3b3" stroke-width="1.300"/><rect x="1" y="1" width="22" height="3.500" fill="#b3b3b3"/><circle cx="7.500" cy="15" r="4" fill="none" stroke="#b3b3b3" stroke-width="1.500"/><circle cx="16.500" cy="15" r="4" fill="none" stroke="#b3b3b3" stroke-width="1.500"/><path d="M11.500,14 H12.500 M20,12.500 L24,9" stroke="#b3b3b3" stroke-width="1.400" fill="none"/></g>
<g transform="translate(202.5,133.5)"><rect x="0.5" y="1.5" width="4.800" height="4" fill="#b3b3b3"/><rect x="6.5" y="1.5" width="4.800" height="4" fill="#b3b3b3"/><rect x="12.5" y="1.5" width="4.800" height="4" fill="#b3b3b3"/><rect x="18.5" y="1.5" width="4.800" height="4" fill="#b3b3b3"/><rect x="0.5" y="7.2" width="4.800" height="4" fill="#b3b3b3"/><rect x="6.5" y="7.2" width="4.800" height="4" fill="#b3b3b3"/><rect x="12.5" y="7.2" width="4.800" height="4" fill="#b3b3b3"/><rect x="18.5" y="7.2" width="4.800" height="4" fill="#b3b3b3"/><rect x="0.5" y="12.9" width="4.800" height="4" fill="#b3b3b3"/><rect x="6.5" y="12.9" width="4.800" height="4" fill="#b3b3b3"/><rect x="12.5" y="12.9" width="4.800" height="4" fill="#b3b3b3"/><rect x="18.5" y="12.9" width="4.800" height="4" fill="#b3b3b3"/><rect x="0.5" y="18.6" width="4.800" height="4" fill="#b3b3b3"/><rect x="6.5" y="18.6" width="4.800" height="4" fill="#b3b3b3"/><rect x="12.5" y="18.6" width="4.800" height="4" fill="#b3b3b3"/><rect x="18.5" y="18.6" width="4.800" height="4" fill="#b3b3b3"/><path d="M3,3.500 V9 H9 V15 M15,3.500 V9 H21 V20 M9,20 H15" stroke="#f4f4f4" stroke-width="1.200" fill="none"/></g>
<g transform="translate(238,133.5)"><rect x="0" y="1" width="12" height="15" fill="#2e2e2e"/><path d="M1.500,13 V4 L4.500,9.500 L7.500,4 V13" stroke="#8ec6f0" stroke-width="1.500" fill="none"/><path d="M0,18 H8" stroke="#2e2e2e" stroke-width="1.500"/><rect x="11" y="3" width="13" height="21" fill="#3a3a3a"/><rect x="13" y="5.500" width="8" height="4.500" fill="#8a8a8a"/><rect x="11" y="12.500" width="13" height="1" fill="#888"/><path d="M13,16 H22 M13,19 H22 M13,22 H22" stroke="#999" stroke-width="1.200"/><rect x="20" y="20.500" width="2.500" height="2.500" fill="#fff"/></g>
<g transform="translate(273.5,133.5)"><path d="M1,4.500 H24" stroke="#d2d2d2" stroke-width="1.300"/><rect x="8.500" y="1" width="8" height="6" fill="#d2d2d2"/><path d="M11,7 H15 V15 C21,14 24,16 23,20 C22,24 14,24.500 10,22 L4.500,17.500 C5.500,15.500 8,16 11,17.500 Z" fill="#d2d2d2"/></g>
<g transform="translate(309,133.5)"><rect x="1" y="1" width="15.500" height="11.500" rx="1" fill="#9adcf6" stroke="#4a4a4a" stroke-width="1.600"/><path d="M3,16.500 H14 M8.500,13 V16.500" stroke="#4a4a4a" stroke-width="1.600"/><circle cx="16.5" cy="16.5" r="6.5" fill="#fff" stroke="#4a4a4a" stroke-width="1.700"/><path d="M14.0,6.5 H19.0 M16.5,6.5 V10.0" stroke="#4a4a4a" stroke-width="1.700"/><path d="M16.5,16.5 L19.0,13.0" stroke="#4a4a4a" stroke-width="1.400"/></g>
<g transform="translate(344.5,133.5)"><path d="M1,1 H11 L16,6 V22.500 H1 Z" fill="#f6f6f6" stroke="#bcbcbc" stroke-width="1.200"/><path d="M3,12 H8 M3,17 H8 M5,9.500 V14.500 M5,14.500 V19.500" stroke="#c4c4c4" stroke-width="1.100"/><circle cx="16.5" cy="16.5" r="6.5" fill="#fff" stroke="#4a4a4a" stroke-width="1.700"/><path d="M14.0,6.5 H19.0 M16.5,6.5 V10.0" stroke="#4a4a4a" stroke-width="1.700"/><path d="M16.5,16.5 L19.0,13.0" stroke="#4a4a4a" stroke-width="1.400"/></g>
<g transform="translate(380,133.5)"><rect x="1" y="1" width="15.500" height="11.500" rx="1" fill="#9adcf6" stroke="#4a4a4a" stroke-width="1.600"/><path d="M3,16.500 H14 M8.500,13 V16.500" stroke="#4a4a4a" stroke-width="1.600"/><path d="M16,10.500 L25,24.500 H7.500 Z" fill="#f2b632"/><path d="M16.200,15 V20" stroke="#333" stroke-width="1.700"/><circle cx="16.200" cy="22.300" r="1" fill="#333"/></g>
<g transform="translate(415.5,133.5)"><circle cx="12" cy="12" r="11.500" fill="#e4e4e4" stroke="#d0d0d0" stroke-width="1"/><circle cx="12" cy="12" r="8.300" fill="#b9b9b9"/></g>
<g transform="translate(451,133.5)"><circle cx="12" cy="12" r="11.500" fill="#e4e4e4" stroke="#d0d0d0" stroke-width="1"/><circle cx="12" cy="12" r="8.300" fill="#b9b9b9"/></g>
<g transform="translate(486.5,133.5)"><path d="M3.500,3 L21,12 L3.500,21 Z" fill="#b3b3b3"/></g>
<g transform="translate(522,133.5)"><rect x="3" y="3" width="18" height="18" fill="#b3b3b3"/></g>
<g transform="translate(557.5,133.5)"><rect x="4.500" y="3" width="5.500" height="18" fill="#b3b3b3"/><rect x="14" y="3" width="5.500" height="18" fill="#b3b3b3"/></g>
<g transform="translate(593,133.5)"><rect x="0.500" y="3" width="4" height="18" fill="#b3b3b3"/><path d="M14,3 V21 L5.500,12 Z M23.500,3 V21 L15,12 Z" fill="#b3b3b3"/></g>
<g transform="translate(628.5,133.5)"><path d="M12,3 L21,21 H3 Z" fill="#b3b3b3"/></g>
<g transform="translate(664,133.5)"><rect x="4.500" y="3" width="4" height="18" fill="#b3b3b3"/><path d="M19,3 V21 L9.500,12 Z" fill="#b3b3b3"/></g>
<g transform="translate(699.5,133.5)"><rect x="15.500" y="3" width="4" height="18" fill="#b3b3b3"/><path d="M5,3 V21 L14.500,12 Z" fill="#b3b3b3"/></g>
<g transform="translate(735,133.5)"><path d="M3,3 H21 L12,21 Z" fill="#b3b3b3"/></g>
<g transform="translate(770.5,133.5)"><rect x="20.500" y="3" width="4" height="18" fill="#b3b3b3"/><path d="M1.500,3 V21 L10.500,12 Z M11,3 V21 L20,12 Z" fill="#b3b3b3"/></g>
<g transform="translate(806,133.5)"><path d="M4.500,3 L21.500,11.500 L4.500,20.500 V16.500 L13.500,11.800 L4.500,7 Z" fill="#b3b3b3"/></g>
<g transform="translate(841.5,133.5)"><circle cx="12" cy="12" r="12" fill="#c4c4c4"/><path d="M5,8.500 H19 L12,18.500 Z" fill="#ececec"/></g>
<g transform="translate(877,133.5)"><path d="M7,22.500 C4,19 1.500,15.500 0.500,14 C2,12.500 4,13 6,15.500 V4 C6,2.500 8.500,2.500 8.500,4 V11 H9.500 V2 C9.500,0.500 12,0.500 12,2 V11 H13 V3 C13,1.500 15.500,1.500 15.500,3 V11.500 H16.500 V6 C16.500,4.500 19,4.500 19,6 V17 C19,20 18,21.500 17,22.500 Z" fill="#d2d2d2"/></g>
<g transform="translate(912.5,133.5)"><rect x="1" y="1" width="15.500" height="11.500" rx="1" fill="#c6c6c6" stroke="#b0b0b0" stroke-width="1.600"/><path d="M3,16.500 H14 M8.500,13 V16.500" stroke="#b0b0b0" stroke-width="1.600"/><path d="M10,22.500 H18.500 V14.500 M15.500,17.500 L18.500,14 L21.500,17.500" stroke="#b3b3b3" stroke-width="1.500" fill="none"/></g>
<g transform="translate(948,133.5)"><circle cx="12" cy="14" r="8.5" fill="none" stroke="#b3b3b3" stroke-width="1.700"/><path d="M9.5,2.0 H14.5 M12,2.0 V5.5" stroke="#b3b3b3" stroke-width="1.700"/><path d="M12,14 L14.5,10.5" stroke="#b3b3b3" stroke-width="1.400"/></g>
<g transform="translate(983.5,133.5)"><rect x="0" y="2" width="24" height="20" fill="#a6a6a6"/><text x="12" y="16.500" font-size="11.500" font-family='"IPAGothic","Noto Sans CJK JP","Liberation Mono",monospace' fill="#ededed" text-anchor="middle" textLength="20" lengthAdjust="spacingAndGlyphs">12:00</text></g>
<defs><clipPath id="treeclip"><rect x="4" y="210" width="241" height="1041.2"/></clipPath></defs>
<g clip-path="url(#treeclip)">
<line x1="22" y1="231.3" x2="22" y2="685.55" stroke="#8b90a0" stroke-width="1.2" stroke-dasharray="1.25 1.25"/>
<line x1="22" y1="701.55" x2="22" y2="1251" stroke="#8b90a0" stroke-width="1.2" stroke-dasharray="1.25 1.25"/>
<line x1="51.3" y1="235.3" x2="51.3" y2="520.3" stroke="#8b90a0" stroke-width="1.2" stroke-dasharray="1.25 1.25"/>
<line x1="51.3" y1="726.3" x2="51.3" y2="1251" stroke="#8b90a0" stroke-width="1.2" stroke-dasharray="1.25 1.25"/>
<line x1="51.3" y1="705.55" x2="51.3" y2="711.3" stroke="#8b90a0" stroke-width="1.2" stroke-dasharray="1.25 1.25"/>
<line x1="80.5" y1="730.3" x2="80.5" y2="1251" stroke="#8b90a0" stroke-width="1.2" stroke-dasharray="1.25 1.25"/>
<rect x="15" y="216.8" width="14" height="14" fill="#f4f4f4" stroke="#c8c8c8" stroke-width="1.2"/>
<path d="M15,230.8 h14 v-14" fill="none" stroke="#8e8e8e" stroke-width="1.2"/>
<line x1="18" y1="223.8" x2="26" y2="223.8" stroke="#3d55b0" stroke-width="1.8" />
<line x1="29.5" y1="223.8" x2="37" y2="223.8" stroke="#8b90a0" stroke-width="1.2" stroke-dasharray="1.25 1.25"/>
<g transform="translate(38,211.3)"><rect x="0" y="0" width="24" height="22" fill="#5a5a5a"/><rect x="1.5" y="2" width="8" height="5" fill="#7ee07e"/><rect x="0" y="9" width="11" height="1" fill="#444"/><rect x="5.5" y="13.5" width="2" height="2" fill="#e06a20"/><rect x="8.5" y="13.5" width="2" height="2" fill="#e8b020"/><rect x="11.5" y="0" width="1.5" height="22" fill="#3a3a3a"/><rect x="15.5" y="0" width="1" height="22" fill="#3f3f3f"/><rect x="19.5" y="0" width="1" height="22" fill="#3f3f3f"/><rect x="14" y="4" width="3" height="2" fill="#50d050"/><rect x="19" y="4" width="3" height="2" fill="#50d050"/></g>
<rect x="67.5" y="211.3" width="118.5" height="23.8" fill="#f0f0f0" />
<text x="69.8" y="228.8" font-size="18.33" fill="#000" font-family='"IPAGothic","Noto Sans CJK JP",monospace' textLength="109.98" lengthAdjust="spacingAndGlyphs" >ユニット構成</text>
<rect x="44.3" y="241.55" width="14" height="14" fill="#f4f4f4" stroke="#c8c8c8" stroke-width="1.2"/>
<path d="M44.3,255.55 h14 v-14" fill="none" stroke="#8e8e8e" stroke-width="1.2"/>
<line x1="47.3" y1="248.55" x2="55.3" y2="248.55" stroke="#3d55b0" stroke-width="1.8" />
<line x1="51.3" y1="244.55" x2="51.3" y2="252.55" stroke="#3d55b0" stroke-width="1.8" />
<line x1="59" y1="248.55" x2="67" y2="248.55" stroke="#8b90a0" stroke-width="1.2" stroke-dasharray="1.25 1.25"/>
<rect x="78" y="236.75" width="8" height="21.5" fill="#6a6a6a" />
<rect x="79.5" y="239.25" width="5" height="1.6" fill="#3fd060" />
<text x="99.8" y="253.55" font-size="18.33" fill="#fff" font-family='"Noto Sans Mono CJK JP","Liberation Mono",monospace' textLength="64.155" lengthAdjust="spacingAndGlyphs" >[0]  KV</text>
<text x="163.955" y="253.55" font-size="18.33" fill="#fff" font-family='"IPAGothic","Noto Sans CJK JP",monospace' textLength="9.165" lengthAdjust="spacingAndGlyphs" >-</text>
<text x="173.12" y="253.55" font-size="18.33" fill="#fff" font-family='"Noto Sans Mono CJK JP","Liberation Mono",monospace' textLength="36.66" lengthAdjust="spacingAndGlyphs" >8000</text>
<line x1="52" y1="273.3" x2="67" y2="273.3" stroke="#8b90a0" stroke-width="1.2" stroke-dasharray="1.25 1.25"/>
<rect x="78" y="261.5" width="8" height="21.5" fill="#6a6a6a" />
<rect x="79.5" y="264" width="5" height="1.6" fill="#3fd060" />
<text x="99.8" y="278.3" font-size="18.33" fill="#fff" font-family='"Noto Sans Mono CJK JP","Liberation Mono",monospace' textLength="64.155" lengthAdjust="spacingAndGlyphs" >[1]  KV</text>
<text x="163.955" y="278.3" font-size="18.33" fill="#fff" font-family='"IPAGothic","Noto Sans CJK JP",monospace' textLength="9.165" lengthAdjust="spacingAndGlyphs" >-</text>
<text x="173.12" y="278.3" font-size="18.33" fill="#fff" font-family='"Noto Sans Mono CJK JP","Liberation Mono",monospace' textLength="36.66" lengthAdjust="spacingAndGlyphs" >C64X</text>
<text x="209.78" y="278.3" font-size="18.33" fill="#fff" font-family='"IPAGothic","Noto Sans CJK JP",monospace' textLength="9.165" lengthAdjust="spacingAndGlyphs" >*</text>
<line x1="52" y1="298.05" x2="67" y2="298.05" stroke="#8b90a0" stroke-width="1.2" stroke-dasharray="1.25 1.25"/>
<rect x="78" y="286.25" width="8" height="21.5" fill="#6a6a6a" />
<rect x="79.5" y="288.75" width="5" height="1.6" fill="#3fd060" />
<text x="99.8" y="303.05" font-size="18.33" fill="#fff" font-family='"Noto Sans Mono CJK JP","Liberation Mono",monospace' textLength="64.155" lengthAdjust="spacingAndGlyphs" >[2]  KV</text>
<text x="163.955" y="303.05" font-size="18.33" fill="#fff" font-family='"IPAGothic","Noto Sans CJK JP",monospace' textLength="9.165" lengthAdjust="spacingAndGlyphs" >-</text>
<text x="173.12" y="303.05" font-size="18.33" fill="#fff" font-family='"Noto Sans Mono CJK JP","Liberation Mono",monospace' textLength="36.66" lengthAdjust="spacingAndGlyphs" >C64X</text>
<text x="209.78" y="303.05" font-size="18.33" fill="#fff" font-family='"IPAGothic","Noto Sans CJK JP",monospace' textLength="9.165" lengthAdjust="spacingAndGlyphs" >*</text>
<line x1="52" y1="322.8" x2="67" y2="322.8" stroke="#8b90a0" stroke-width="1.2" stroke-dasharray="1.25 1.25"/>
<rect x="78" y="311" width="8" height="21.5" fill="#6a6a6a" />
<rect x="79.5" y="313.5" width="5" height="1.6" fill="#3fd060" />
<text x="99.8" y="327.8" font-size="18.33" fill="#fff" font-family='"Noto Sans Mono CJK JP","Liberation Mono",monospace' textLength="64.155" lengthAdjust="spacingAndGlyphs" >[3]  KV</text>
<text x="163.955" y="327.8" font-size="18.33" fill="#fff" font-family='"IPAGothic","Noto Sans CJK JP",monospace' textLength="9.165" lengthAdjust="spacingAndGlyphs" >-</text>
<text x="173.12" y="327.8" font-size="18.33" fill="#fff" font-family='"Noto Sans Mono CJK JP","Liberation Mono",monospace' textLength="36.66" lengthAdjust="spacingAndGlyphs" >C64X</text>
<text x="209.78" y="327.8" font-size="18.33" fill="#fff" font-family='"IPAGothic","Noto Sans CJK JP",monospace' textLength="9.165" lengthAdjust="spacingAndGlyphs" >*</text>
<line x1="52" y1="347.55" x2="67" y2="347.55" stroke="#8b90a0" stroke-width="1.2" stroke-dasharray="1.25 1.25"/>
<rect x="78" y="335.75" width="8" height="21.5" fill="#6a6a6a" />
<rect x="79.5" y="338.25" width="5" height="1.6" fill="#3fd060" />
<text x="99.8" y="352.55" font-size="18.33" fill="#fff" font-family='"Noto Sans Mono CJK JP","Liberation Mono",monospace' textLength="64.155" lengthAdjust="spacingAndGlyphs" >[4]  KV</text>
<text x="163.955" y="352.55" font-size="18.33" fill="#fff" font-family='"IPAGothic","Noto Sans CJK JP",monospace' textLength="9.165" lengthAdjust="spacingAndGlyphs" >-</text>
<text x="173.12" y="352.55" font-size="18.33" fill="#fff" font-family='"Noto Sans Mono CJK JP","Liberation Mono",monospace' textLength="36.66" lengthAdjust="spacingAndGlyphs" >C64X</text>
<text x="209.78" y="352.55" font-size="18.33" fill="#fff" font-family='"IPAGothic","Noto Sans CJK JP",monospace' textLength="9.165" lengthAdjust="spacingAndGlyphs" >*</text>
<line x1="52" y1="372.3" x2="67" y2="372.3" stroke="#8b90a0" stroke-width="1.2" stroke-dasharray="1.25 1.25"/>
<rect x="78" y="360.5" width="8" height="21.5" fill="#6a6a6a" />
<rect x="79.5" y="363" width="5" height="1.6" fill="#3fd060" />
<text x="99.8" y="377.3" font-size="18.33" fill="#fff" font-family='"Noto Sans Mono CJK JP","Liberation Mono",monospace' textLength="64.155" lengthAdjust="spacingAndGlyphs" >[5]  KV</text>
<text x="163.955" y="377.3" font-size="18.33" fill="#fff" font-family='"IPAGothic","Noto Sans CJK JP",monospace' textLength="9.165" lengthAdjust="spacingAndGlyphs" >-</text>
<text x="173.12" y="377.3" font-size="18.33" fill="#fff" font-family='"Noto Sans Mono CJK JP","Liberation Mono",monospace' textLength="36.66" lengthAdjust="spacingAndGlyphs" >C64T</text>
<text x="209.78" y="377.3" font-size="18.33" fill="#fff" font-family='"IPAGothic","Noto Sans CJK JP",monospace' textLength="9.165" lengthAdjust="spacingAndGlyphs" >*</text>
<line x1="52" y1="397.05" x2="67" y2="397.05" stroke="#8b90a0" stroke-width="1.2" stroke-dasharray="1.25 1.25"/>
<rect x="78" y="385.25" width="8" height="21.5" fill="#6a6a6a" />
<rect x="79.5" y="387.75" width="5" height="1.6" fill="#3fd060" />
<text x="99.8" y="402.05" font-size="18.33" fill="#fff" font-family='"Noto Sans Mono CJK JP","Liberation Mono",monospace' textLength="64.155" lengthAdjust="spacingAndGlyphs" >[6]  KV</text>
<text x="163.955" y="402.05" font-size="18.33" fill="#fff" font-family='"IPAGothic","Noto Sans CJK JP",monospace' textLength="9.165" lengthAdjust="spacingAndGlyphs" >-</text>
<text x="173.12" y="402.05" font-size="18.33" fill="#fff" font-family='"Noto Sans Mono CJK JP","Liberation Mono",monospace' textLength="36.66" lengthAdjust="spacingAndGlyphs" >C64T</text>
<text x="209.78" y="402.05" font-size="18.33" fill="#fff" font-family='"IPAGothic","Noto Sans CJK JP",monospace' textLength="9.165" lengthAdjust="spacingAndGlyphs" >*</text>
<line x1="52" y1="421.8" x2="67" y2="421.8" stroke="#8b90a0" stroke-width="1.2" stroke-dasharray="1.25 1.25"/>
<rect x="78" y="410" width="8" height="21.5" fill="#6a6a6a" />
<rect x="79.5" y="412.5" width="5" height="1.6" fill="#3fd060" />
<text x="99.8" y="426.8" font-size="18.33" fill="#fff" font-family='"Noto Sans Mono CJK JP","Liberation Mono",monospace' textLength="64.155" lengthAdjust="spacingAndGlyphs" >[7]  KV</text>
<text x="163.955" y="426.8" font-size="18.33" fill="#fff" font-family='"IPAGothic","Noto Sans CJK JP",monospace' textLength="9.165" lengthAdjust="spacingAndGlyphs" >-</text>
<text x="173.12" y="426.8" font-size="18.33" fill="#fff" font-family='"Noto Sans Mono CJK JP","Liberation Mono",monospace' textLength="36.66" lengthAdjust="spacingAndGlyphs" >C64T</text>
<text x="209.78" y="426.8" font-size="18.33" fill="#fff" font-family='"IPAGothic","Noto Sans CJK JP",monospace' textLength="9.165" lengthAdjust="spacingAndGlyphs" >*</text>
<line x1="52" y1="446.55" x2="67" y2="446.55" stroke="#8b90a0" stroke-width="1.2" stroke-dasharray="1.25 1.25"/>
<rect x="78" y="434.75" width="8" height="21.5" fill="#6a6a6a" />
<rect x="79.5" y="437.25" width="5" height="1.6" fill="#3fd060" />
<text x="99.8" y="451.55" font-size="18.33" fill="#fff" font-family='"Noto Sans Mono CJK JP","Liberation Mono",monospace' textLength="64.155" lengthAdjust="spacingAndGlyphs" >[8]  KV</text>
<text x="163.955" y="451.55" font-size="18.33" fill="#fff" font-family='"IPAGothic","Noto Sans CJK JP",monospace' textLength="9.165" lengthAdjust="spacingAndGlyphs" >-</text>
<text x="173.12" y="451.55" font-size="18.33" fill="#fff" font-family='"Noto Sans Mono CJK JP","Liberation Mono",monospace' textLength="45.825" lengthAdjust="spacingAndGlyphs" >MC40V</text>
<line x1="52" y1="471.3" x2="67" y2="471.3" stroke="#8b90a0" stroke-width="1.2" stroke-dasharray="1.25 1.25"/>
<rect x="78" y="459.5" width="8" height="21.5" fill="#6a6a6a" />
<rect x="79.5" y="462" width="5" height="1.6" fill="#3fd060" />
<text x="99.8" y="476.3" font-size="18.33" fill="#fff" font-family='"Noto Sans Mono CJK JP","Liberation Mono",monospace' textLength="64.155" lengthAdjust="spacingAndGlyphs" >[9]  KV</text>
<text x="163.955" y="476.3" font-size="18.33" fill="#fff" font-family='"IPAGothic","Noto Sans CJK JP",monospace' textLength="9.165" lengthAdjust="spacingAndGlyphs" >-</text>
<text x="173.12" y="476.3" font-size="18.33" fill="#fff" font-family='"Noto Sans Mono CJK JP","Liberation Mono",monospace' textLength="45.825" lengthAdjust="spacingAndGlyphs" >MC40V</text>
<line x1="52" y1="496.05" x2="67" y2="496.05" stroke="#8b90a0" stroke-width="1.2" stroke-dasharray="1.25 1.25"/>
<rect x="78" y="484.25" width="8" height="21.5" fill="#6a6a6a" />
<rect x="79.5" y="486.75" width="5" height="1.6" fill="#3fd060" />
<text x="99.8" y="501.05" font-size="18.33" fill="#fff" font-family='"Noto Sans Mono CJK JP","Liberation Mono",monospace' textLength="64.155" lengthAdjust="spacingAndGlyphs" >[10] KV</text>
<text x="163.955" y="501.05" font-size="18.33" fill="#fff" font-family='"IPAGothic","Noto Sans CJK JP",monospace' textLength="9.165" lengthAdjust="spacingAndGlyphs" >-</text>
<text x="173.12" y="501.05" font-size="18.33" fill="#fff" font-family='"Noto Sans Mono CJK JP","Liberation Mono",monospace' textLength="18.33" lengthAdjust="spacingAndGlyphs" >L2</text>
<text x="191.45" y="501.05" font-size="18.33" fill="#fff" font-family='"IPAGothic","Noto Sans CJK JP",monospace' textLength="9.165" lengthAdjust="spacingAndGlyphs" >*</text>
<text x="200.615" y="501.05" font-size="18.33" fill="#fff" font-family='"Noto Sans Mono CJK JP","Liberation Mono",monospace' textLength="9.165" lengthAdjust="spacingAndGlyphs" >V</text>
<line x1="52" y1="520.8" x2="66" y2="520.8" stroke="#8b90a0" stroke-width="1.2" stroke-dasharray="1.25 1.25"/>
<g transform="translate(67,508.3)"><rect x="0" y="7" width="13" height="16" fill="#5a5a5a"/><rect x="1" y="8" width="5" height="5.5" fill="#7fe07f"/><rect x="4" y="7" width="1" height="16" fill="#444"/><rect x="8" y="7" width="1" height="16" fill="#444"/><rect x="5.5" y="18" width="2" height="2" fill="#e06a20"/><rect x="8.5" y="18" width="2" height="2" fill="#e8c020"/><path d="M8,7 C10,1 19,0 22.500,7.500" fill="none" stroke="#f08a1c" stroke-width="2.300"/><path d="M4,5.500 L11.500,3 L11,11 Z" fill="#f08a1c"/><path d="M22,14 C22,20 16,23.500 10,22" fill="none" stroke="#3a80d0" stroke-width="2.600"/><path d="M16.500,14 L24,12.500 L22.500,20 Z" fill="#3a80d0"/></g>
<text x="99.3" y="525.8" font-size="18.33" fill="#fff" font-family='"IPAGothic","Noto Sans CJK JP",monospace' textLength="146.64" lengthAdjust="spacingAndGlyphs" >ユニット構成切替</text>
<line x1="23" y1="545.55" x2="37" y2="545.55" stroke="#8b90a0" stroke-width="1.2" stroke-dasharray="1.25 1.25"/>
<g transform="translate(38,533.05)"><rect x="0" y="0" width="24.5" height="22.5" fill="#f8f8f8"/><rect x="0" y="0" width="24.5" height="3.6" fill="#7a7a7a"/><rect x="0" y="21.3" width="24.5" height="1.2" fill="#d8d8d8"/>
<path d="M2,9.3 H9.5 M14,9.3 H22.5 M9.5,5.3 V13 M14,5.3 V13" stroke="#555" stroke-width="1.6" fill="none"/><rect x="4.5" y="15" width="15" height="4.3" fill="#4cc45c"/>
</g>
<text x="69.8" y="550.55" font-size="18.33" fill="#fff" font-family='"IPAGothic","Noto Sans CJK JP",monospace' textLength="146.64" lengthAdjust="spacingAndGlyphs" >デバイスコメント</text>
<line x1="23" y1="570.3" x2="37" y2="570.3" stroke="#8b90a0" stroke-width="1.2" stroke-dasharray="1.25 1.25"/>
<g transform="translate(38,557.8)"><rect x="0" y="0" width="24.5" height="22.5" fill="#f8f8f8"/><rect x="0" y="0" width="24.5" height="3.6" fill="#7a7a7a"/><rect x="0" y="21.3" width="24.5" height="1.2" fill="#d8d8d8"/>
<rect x="4.5" y="6" width="15" height="4.3" fill="#3a86f0"/><path d="M2,16.3 H9.5 M14,16.3 H22.5 M9.5,12.5 V20 M14,12.5 V20" stroke="#555" stroke-width="1.6" fill="none"/>
</g>
<text x="69.8" y="575.3" font-size="18.33" fill="#fff" font-family='"IPAGothic","Noto Sans CJK JP",monospace' textLength="36.66" lengthAdjust="spacingAndGlyphs" >変数</text>
<line x1="23" y1="595.05" x2="37" y2="595.05" stroke="#8b90a0" stroke-width="1.2" stroke-dasharray="1.25 1.25"/>
<g transform="translate(38,582.55)"><path d="M8,0.5 H23.5 V15" fill="none" stroke="#d8d8d8" stroke-width="1.4"/><path d="M5,3.5 H20.5 V18" fill="none" stroke="#e0e0e0" stroke-width="1.4"/><rect x="1" y="6.5" width="16" height="15.5" fill="#f6f6f6" stroke="#d8d8d8" stroke-width="1"/>
<path d="M4,11 H10 M4,14.5 H10 M4,18 H10" stroke="#3a80d0" stroke-width="1.5"/>
</g>
<text x="69.8" y="600.05" font-size="18.33" fill="#fff" font-family='"IPAGothic","Noto Sans CJK JP",monospace' textLength="54.99" lengthAdjust="spacingAndGlyphs" >構造体</text>
<line x1="23" y1="619.8" x2="37" y2="619.8" stroke="#8b90a0" stroke-width="1.2" stroke-dasharray="1.25 1.25"/>
<g transform="translate(38,607.3)"><path d="M8,0.5 H23.5 V15" fill="none" stroke="#d8d8d8" stroke-width="1.4"/><path d="M5,3.5 H20.5 V18" fill="none" stroke="#e0e0e0" stroke-width="1.4"/><rect x="1" y="6.5" width="16" height="15.5" fill="#f6f6f6" stroke="#d8d8d8" stroke-width="1"/>
<path d="M3.5,11 L9,15 L3.5,19 Z" fill="#3a80d0"/><rect x="10.5" y="11" width="2" height="8" fill="#3a80d0"/><rect x="13.8" y="11" width="2" height="8" fill="#3a80d0"/>
</g>
<text x="69.8" y="624.8" font-size="18.33" fill="#fff" font-family='"IPAGothic","Noto Sans CJK JP",monospace' textLength="174.135" lengthAdjust="spacingAndGlyphs" >運転記録設定 未設定</text>
<line x1="23" y1="644.55" x2="37" y2="644.55" stroke="#8b90a0" stroke-width="1.2" stroke-dasharray="1.25 1.25"/>
<g transform="translate(38,632.05)"><rect x="1" y="0" width="20" height="22" fill="#3c3c3c"/><rect x="2.5" y="2.5" width="10" height="5.5" fill="#6fd86f"/><rect x="15" y="0" width="1.3" height="22" fill="#222"/><rect x="18" y="0" width="1.3" height="22" fill="#555"/><rect x="8" y="14" width="2" height="2" fill="#e05020"/><rect x="11" y="14" width="2" height="2" fill="#e8b020"/><rect x="1" y="10" width="13" height="1" fill="#222"/></g>
<text x="69.8" y="649.55" font-size="18.33" fill="#fff" font-family='"Noto Sans Mono CJK JP","Liberation Mono",monospace' textLength="27.495" lengthAdjust="spacingAndGlyphs" >CPU</text>
<text x="97.295" y="649.55" font-size="18.33" fill="#fff" font-family='"IPAGothic","Noto Sans CJK JP",monospace' textLength="109.98" lengthAdjust="spacingAndGlyphs" >システム設定</text>
<line x1="23" y1="669.3" x2="37" y2="669.3" stroke="#8b90a0" stroke-width="1.2" stroke-dasharray="1.25 1.25"/>
<g transform="translate(38,656.8)"><circle cx="9" cy="5.5" r="5" fill="#fff"/><path d="M0,21 C0,13 4,11.5 9,11.5 C13,11.5 16,12.5 17,16 L13,21 Z" fill="#fff"/><circle cx="17.5" cy="16.5" r="4.2" fill="none" stroke="#8a8a8a" stroke-width="2.6" stroke-dasharray="2.2 1.1"/><circle cx="17.5" cy="16.5" r="2.6" fill="none" stroke="#8a8a8a" stroke-width="1.6"/></g>
<text x="69.8" y="674.3" font-size="18.33" fill="#fff" font-family='"IPAGothic","Noto Sans CJK JP",monospace' textLength="128.31" lengthAdjust="spacingAndGlyphs" >ユーザ認証設定</text>
<rect x="15" y="687.05" width="14" height="14" fill="#f4f4f4" stroke="#c8c8c8" stroke-width="1.2"/>
<path d="M15,701.05 h14 v-14" fill="none" stroke="#8e8e8e" stroke-width="1.2"/>
<line x1="18" y1="694.05" x2="26" y2="694.05" stroke="#3d55b0" stroke-width="1.8" />
<line x1="29.5" y1="694.05" x2="37" y2="694.05" stroke="#8b90a0" stroke-width="1.2" stroke-dasharray="1.25 1.25"/>
<g transform="translate(38,681.55)"><path d="M7,0.5 H19 V9" fill="none" stroke="#d8d8d8" stroke-width="1.4"/><rect x="3" y="3" width="13" height="9" fill="#f0f0f0" stroke="#d0d0d0" stroke-width="1"/><rect x="0" y="11" width="24" height="11" fill="#8ed49a"/><path d="M1,14.5 H23 M1,19 H23 M6,12.5 V16.5 M9,12.5 V16.5 M6,17 V21 M9,17 V21 " stroke="#4a7a55" stroke-width="1.2" fill="none"/><circle cx="17" cy="14.5" r="1.8" fill="#8ed49a" stroke="#4a7a55" stroke-width="1.1"/><circle cx="17" cy="19" r="1.8" fill="#8ed49a" stroke="#4a7a55" stroke-width="1.1"/></g>
<text x="69.8" y="699.05" font-size="18.33" fill="#fff" font-family='"IPAGothic","Noto Sans CJK JP",monospace' textLength="91.65" lengthAdjust="spacingAndGlyphs" >プログラム</text>
<text x="161.45" y="699.05" font-size="18.33" fill="#fff" font-family='"Noto Sans Mono CJK JP","Liberation Mono",monospace' textLength="54.99" lengthAdjust="spacingAndGlyphs" >:T02_2</text>
<text x="216.44" y="699.05" font-size="18.33" fill="#fff" font-family='"IPAGothic","Noto Sans CJK JP",monospace' textLength="36.66" lengthAdjust="spacingAndGlyphs" >面板</text>
<rect x="44.3" y="711.8" width="14" height="14" fill="#f4f4f4" stroke="#c8c8c8" stroke-width="1.2"/>
<path d="M44.3,725.8 h14 v-14" fill="none" stroke="#8e8e8e" stroke-width="1.2"/>
<line x1="47.3" y1="718.8" x2="55.3" y2="718.8" stroke="#3d55b0" stroke-width="1.8" />
<line x1="59" y1="718.8" x2="67" y2="718.8" stroke="#8b90a0" stroke-width="1.2" stroke-dasharray="1.25 1.25"/>
<g transform="translate(68,706.3)"><path d="M0,2 H9 L11.5,5 H22 V21 H0 Z" fill="#f6b73c"/><rect x="0" y="6.5" width="22.5" height="15" rx="1" fill="#ffd877"/></g>
<text x="99.3" y="723.8" font-size="18.33" fill="#fff" font-family='"IPAGothic","Noto Sans CJK JP",monospace' textLength="183.3" lengthAdjust="spacingAndGlyphs" >毎スキャンモジュール</text>
<rect x="73.5" y="736.55" width="14" height="14" fill="#f4f4f4" stroke="#c8c8c8" stroke-width="1.2"/>
<path d="M73.5,750.55 h14 v-14" fill="none" stroke="#8e8e8e" stroke-width="1.2"/>
<line x1="76.5" y1="743.55" x2="84.5" y2="743.55" stroke="#3d55b0" stroke-width="1.8" />
<line x1="80.5" y1="739.55" x2="80.5" y2="747.55" stroke="#3d55b0" stroke-width="1.8" />
<line x1="88" y1="743.55" x2="98" y2="743.55" stroke="#8b90a0" stroke-width="1.2" stroke-dasharray="1.25 1.25"/>
<g transform="translate(100,730.55)"><path d="M0.5,0.5 H13 L19.5,7 V22.5 H0.5 Z" fill="#f6f6f6" stroke="#d2d2d2" stroke-width="1"/><path d="M13,0.5 V7 H19.5" fill="#e6e6e6" stroke="#c8c8c8" stroke-width="1"/><path d="M0.5,13.4 H19.5" stroke="#dcdcdc" stroke-width="1"/><path d="M2,9.8 H18 M2,17 H18 M5.5,7.4 V12.2 M8,7.4 V12.2 M5.5,14.6 V19.4 M8,14.6 V19.4" stroke="#666" stroke-width="1.15" fill="none"/><circle cx="13" cy="9.8" r="1.9" fill="#f6f6f6" stroke="#666" stroke-width="1.05"/><circle cx="13" cy="17" r="1.9" fill="#f6f6f6" stroke="#666" stroke-width="1.05"/></g>
<text x="128.3" y="748.55" font-size="18.33" fill="#fff" font-family='"Noto Sans Mono CJK JP","Liberation Mono",monospace' textLength="36.66" lengthAdjust="spacingAndGlyphs" >Main</text>
<rect x="73.5" y="761.3" width="14" height="14" fill="#f4f4f4" stroke="#c8c8c8" stroke-width="1.2"/>
<path d="M73.5,775.3 h14 v-14" fill="none" stroke="#8e8e8e" stroke-width="1.2"/>
<line x1="76.5" y1="768.3" x2="84.5" y2="768.3" stroke="#3d55b0" stroke-width="1.8" />
<line x1="80.5" y1="764.3" x2="80.5" y2="772.3" stroke="#3d55b0" stroke-width="1.8" />
<line x1="88" y1="768.3" x2="98" y2="768.3" stroke="#8b90a0" stroke-width="1.2" stroke-dasharray="1.25 1.25"/>
<g transform="translate(100,755.3)"><path d="M0.5,0.5 H13 L19.5,7 V22.5 H0.5 Z" fill="#f6f6f6" stroke="#d2d2d2" stroke-width="1"/><path d="M13,0.5 V7 H19.5" fill="#e6e6e6" stroke="#c8c8c8" stroke-width="1"/><path d="M0.5,13.4 H19.5" stroke="#dcdcdc" stroke-width="1"/><path d="M2,9.8 H18 M2,17 H18 M5.5,7.4 V12.2 M8,7.4 V12.2 M5.5,14.6 V19.4 M8,14.6 V19.4" stroke="#666" stroke-width="1.15" fill="none"/><circle cx="13" cy="9.8" r="1.9" fill="#f6f6f6" stroke="#666" stroke-width="1.05"/><circle cx="13" cy="17" r="1.9" fill="#f6f6f6" stroke="#666" stroke-width="1.05"/></g>
<text x="128.3" y="773.3" font-size="18.33" fill="#fff" font-family='"IPAGothic","Noto Sans CJK JP",monospace' textLength="36.66" lengthAdjust="spacingAndGlyphs" >異常</text>
<text x="164.96" y="773.3" font-size="18.33" fill="#fff" font-family='"Noto Sans Mono CJK JP","Liberation Mono",monospace' textLength="64.155" lengthAdjust="spacingAndGlyphs" >_M15000</text>
<rect x="73.5" y="786.05" width="14" height="14" fill="#f4f4f4" stroke="#c8c8c8" stroke-width="1.2"/>
<path d="M73.5,800.05 h14 v-14" fill="none" stroke="#8e8e8e" stroke-width="1.2"/>
<line x1="76.5" y1="793.05" x2="84.5" y2="793.05" stroke="#3d55b0" stroke-width="1.8" />
<line x1="80.5" y1="789.05" x2="80.5" y2="797.05" stroke="#3d55b0" stroke-width="1.8" />
<line x1="88" y1="793.05" x2="98" y2="793.05" stroke="#8b90a0" stroke-width="1.2" stroke-dasharray="1.25 1.25"/>
<g transform="translate(100,780.05)"><path d="M0.5,0.5 H13 L19.5,7 V22.5 H0.5 Z" fill="#f6f6f6" stroke="#d2d2d2" stroke-width="1"/><path d="M13,0.5 V7 H19.5" fill="#e6e6e6" stroke="#c8c8c8" stroke-width="1"/><path d="M0.5,13.4 H19.5" stroke="#dcdcdc" stroke-width="1"/><path d="M2,9.8 H18 M2,17 H18 M5.5,7.4 V12.2 M8,7.4 V12.2 M5.5,14.6 V19.4 M8,14.6 V19.4" stroke="#666" stroke-width="1.15" fill="none"/><circle cx="13" cy="9.8" r="1.9" fill="#f6f6f6" stroke="#666" stroke-width="1.05"/><circle cx="13" cy="17" r="1.9" fill="#f6f6f6" stroke="#666" stroke-width="1.05"/></g>
<text x="128.3" y="798.05" font-size="18.33" fill="#fff" font-family='"IPAGothic","Noto Sans CJK JP",monospace' textLength="36.66" lengthAdjust="spacingAndGlyphs" >警報</text>
<text x="164.96" y="798.05" font-size="18.33" fill="#fff" font-family='"Noto Sans Mono CJK JP","Liberation Mono",monospace' textLength="64.155" lengthAdjust="spacingAndGlyphs" >_M16000</text>
<rect x="73.5" y="810.8" width="14" height="14" fill="#f4f4f4" stroke="#c8c8c8" stroke-width="1.2"/>
<path d="M73.5,824.8 h14 v-14" fill="none" stroke="#8e8e8e" stroke-width="1.2"/>
<line x1="76.5" y1="817.8" x2="84.5" y2="817.8" stroke="#3d55b0" stroke-width="1.8" />
<line x1="80.5" y1="813.8" x2="80.5" y2="821.8" stroke="#3d55b0" stroke-width="1.8" />
<line x1="88" y1="817.8" x2="98" y2="817.8" stroke="#8b90a0" stroke-width="1.2" stroke-dasharray="1.25 1.25"/>
<g transform="translate(100,804.8)"><path d="M0.5,0.5 H13 L19.5,7 V22.5 H0.5 Z" fill="#f6f6f6" stroke="#d2d2d2" stroke-width="1"/><path d="M13,0.5 V7 H19.5" fill="#e6e6e6" stroke="#c8c8c8" stroke-width="1"/><path d="M0.5,13.4 H19.5" stroke="#dcdcdc" stroke-width="1"/><path d="M2,9.8 H18 M2,17 H18 M5.5,7.4 V12.2 M8,7.4 V12.2 M5.5,14.6 V19.4 M8,14.6 V19.4" stroke="#666" stroke-width="1.15" fill="none"/><circle cx="13" cy="9.8" r="1.9" fill="#f6f6f6" stroke="#666" stroke-width="1.05"/><circle cx="13" cy="17" r="1.9" fill="#f6f6f6" stroke="#666" stroke-width="1.05"/></g>
<text x="128.3" y="822.8" font-size="18.33" fill="#fff" font-family='"IPAGothic","Noto Sans CJK JP",monospace' textLength="109.98" lengthAdjust="spacingAndGlyphs" >自動運転制御</text>
<text x="238.28" y="822.8" font-size="18.33" fill="#fff" font-family='"Noto Sans Mono CJK JP","Liberation Mono",monospace' textLength="54.99" lengthAdjust="spacingAndGlyphs" >_M1000</text>
<rect x="73.5" y="835.55" width="14" height="14" fill="#f4f4f4" stroke="#c8c8c8" stroke-width="1.2"/>
<path d="M73.5,849.55 h14 v-14" fill="none" stroke="#8e8e8e" stroke-width="1.2"/>
<line x1="76.5" y1="842.55" x2="84.5" y2="842.55" stroke="#3d55b0" stroke-width="1.8" />
<line x1="80.5" y1="838.55" x2="80.5" y2="846.55" stroke="#3d55b0" stroke-width="1.8" />
<line x1="88" y1="842.55" x2="98" y2="842.55" stroke="#8b90a0" stroke-width="1.2" stroke-dasharray="1.25 1.25"/>
<g transform="translate(100,829.55)"><path d="M0.5,0.5 H13 L19.5,7 V22.5 H0.5 Z" fill="#f6f6f6" stroke="#d2d2d2" stroke-width="1"/><path d="M13,0.5 V7 H19.5" fill="#e6e6e6" stroke="#c8c8c8" stroke-width="1"/><path d="M0.5,13.4 H19.5" stroke="#dcdcdc" stroke-width="1"/><path d="M2,9.8 H18 M2,17 H18 M5.5,7.4 V12.2 M8,7.4 V12.2 M5.5,14.6 V19.4 M8,14.6 V19.4" stroke="#666" stroke-width="1.15" fill="none"/><circle cx="13" cy="9.8" r="1.9" fill="#f6f6f6" stroke="#666" stroke-width="1.05"/><circle cx="13" cy="17" r="1.9" fill="#f6f6f6" stroke="#666" stroke-width="1.05"/></g>
<text x="128.3" y="847.55" font-size="18.33" fill="#fff" font-family='"IPAGothic","Noto Sans CJK JP",monospace' textLength="109.98" lengthAdjust="spacingAndGlyphs" >原点復帰制御</text>
<text x="238.28" y="847.55" font-size="18.33" fill="#fff" font-family='"Noto Sans Mono CJK JP","Liberation Mono",monospace' textLength="54.99" lengthAdjust="spacingAndGlyphs" >_M1100</text>
<rect x="73.5" y="860.3" width="14" height="14" fill="#f4f4f4" stroke="#c8c8c8" stroke-width="1.2"/>
<path d="M73.5,874.3 h14 v-14" fill="none" stroke="#8e8e8e" stroke-width="1.2"/>
<line x1="76.5" y1="867.3" x2="84.5" y2="867.3" stroke="#3d55b0" stroke-width="1.8" />
<line x1="80.5" y1="863.3" x2="80.5" y2="871.3" stroke="#3d55b0" stroke-width="1.8" />
<line x1="88" y1="867.3" x2="98" y2="867.3" stroke="#8b90a0" stroke-width="1.2" stroke-dasharray="1.25 1.25"/>
<g transform="translate(100,854.3)"><path d="M0.5,0.5 H13 L19.5,7 V22.5 H0.5 Z" fill="#f6f6f6" stroke="#d2d2d2" stroke-width="1"/><path d="M13,0.5 V7 H19.5" fill="#e6e6e6" stroke="#c8c8c8" stroke-width="1"/><path d="M0.5,13.4 H19.5" stroke="#dcdcdc" stroke-width="1"/><path d="M2,9.8 H18 M2,17 H18 M5.5,7.4 V12.2 M8,7.4 V12.2 M5.5,14.6 V19.4 M8,14.6 V19.4" stroke="#666" stroke-width="1.15" fill="none"/><circle cx="13" cy="9.8" r="1.9" fill="#f6f6f6" stroke="#666" stroke-width="1.05"/><circle cx="13" cy="17" r="1.9" fill="#f6f6f6" stroke="#666" stroke-width="1.05"/></g>
<text x="128.3" y="872.3" font-size="18.33" fill="#fff" font-family='"IPAGothic","Noto Sans CJK JP",monospace' textLength="18.33" lengthAdjust="spacingAndGlyphs" >▲</text>
<text x="146.63" y="872.3" font-size="18.33" fill="#fff" font-family='"Noto Sans Mono CJK JP","Liberation Mono",monospace' textLength="27.495" lengthAdjust="spacingAndGlyphs" >U1_</text>
<text x="174.125" y="872.3" font-size="18.33" fill="#fff" font-family='"IPAGothic","Noto Sans CJK JP",monospace' textLength="128.31" lengthAdjust="spacingAndGlyphs" >製品供給部制御</text>
<rect x="73.5" y="885.05" width="14" height="14" fill="#f4f4f4" stroke="#c8c8c8" stroke-width="1.2"/>
<path d="M73.5,899.05 h14 v-14" fill="none" stroke="#8e8e8e" stroke-width="1.2"/>
<line x1="76.5" y1="892.05" x2="84.5" y2="892.05" stroke="#3d55b0" stroke-width="1.8" />
<line x1="80.5" y1="888.05" x2="80.5" y2="896.05" stroke="#3d55b0" stroke-width="1.8" />
<line x1="88" y1="892.05" x2="98" y2="892.05" stroke="#8b90a0" stroke-width="1.2" stroke-dasharray="1.25 1.25"/>
<g transform="translate(100,879.05)"><path d="M0.5,0.5 H13 L19.5,7 V22.5 H0.5 Z" fill="#f6f6f6" stroke="#d2d2d2" stroke-width="1"/><path d="M13,0.5 V7 H19.5" fill="#e6e6e6" stroke="#c8c8c8" stroke-width="1"/><path d="M0.5,13.4 H19.5" stroke="#dcdcdc" stroke-width="1"/><path d="M2,9.8 H18 M2,17 H18 M5.5,7.4 V12.2 M8,7.4 V12.2 M5.5,14.6 V19.4 M8,14.6 V19.4" stroke="#666" stroke-width="1.15" fill="none"/><circle cx="13" cy="9.8" r="1.9" fill="#f6f6f6" stroke="#666" stroke-width="1.05"/><circle cx="13" cy="17" r="1.9" fill="#f6f6f6" stroke="#666" stroke-width="1.05"/></g>
<text x="128.3" y="897.05" font-size="18.33" fill="#fff" font-family='"IPAGothic","Noto Sans CJK JP",monospace' textLength="18.33" lengthAdjust="spacingAndGlyphs" >▲</text>
<text x="146.63" y="897.05" font-size="18.33" fill="#fff" font-family='"Noto Sans Mono CJK JP","Liberation Mono",monospace' textLength="45.825" lengthAdjust="spacingAndGlyphs" >U2_CV</text>
<text x="192.455" y="897.05" font-size="18.33" fill="#fff" font-family='"IPAGothic","Noto Sans CJK JP",monospace' textLength="109.98" lengthAdjust="spacingAndGlyphs" >間移載部制御</text>
<rect x="73.5" y="909.8" width="14" height="14" fill="#f4f4f4" stroke="#c8c8c8" stroke-width="1.2"/>
<path d="M73.5,923.8 h14 v-14" fill="none" stroke="#8e8e8e" stroke-width="1.2"/>
<line x1="76.5" y1="916.8" x2="84.5" y2="916.8" stroke="#3d55b0" stroke-width="1.8" />
<line x1="80.5" y1="912.8" x2="80.5" y2="920.8" stroke="#3d55b0" stroke-width="1.8" />
<line x1="88" y1="916.8" x2="98" y2="916.8" stroke="#8b90a0" stroke-width="1.2" stroke-dasharray="1.25 1.25"/>
<g transform="translate(100,903.8)"><path d="M0.5,0.5 H13 L19.5,7 V22.5 H0.5 Z" fill="#f6f6f6" stroke="#d2d2d2" stroke-width="1"/><path d="M13,0.5 V7 H19.5" fill="#e6e6e6" stroke="#c8c8c8" stroke-width="1"/><path d="M0.5,13.4 H19.5" stroke="#dcdcdc" stroke-width="1"/><path d="M2,9.8 H18 M2,17 H18 M5.5,7.4 V12.2 M8,7.4 V12.2 M5.5,14.6 V19.4 M8,14.6 V19.4" stroke="#666" stroke-width="1.15" fill="none"/><circle cx="13" cy="9.8" r="1.9" fill="#f6f6f6" stroke="#666" stroke-width="1.05"/><circle cx="13" cy="17" r="1.9" fill="#f6f6f6" stroke="#666" stroke-width="1.05"/></g>
<text x="128.3" y="921.8" font-size="18.33" fill="#fff" font-family='"IPAGothic","Noto Sans CJK JP",monospace' textLength="18.33" lengthAdjust="spacingAndGlyphs" >▲</text>
<text x="146.63" y="921.8" font-size="18.33" fill="#fff" font-family='"Noto Sans Mono CJK JP","Liberation Mono",monospace' textLength="27.495" lengthAdjust="spacingAndGlyphs" >U3_</text>
<text x="174.125" y="921.8" font-size="18.33" fill="#fff" font-family='"IPAGothic","Noto Sans CJK JP",monospace' textLength="54.99" lengthAdjust="spacingAndGlyphs" >上下流</text>
<text x="229.115" y="921.8" font-size="18.33" fill="#fff" font-family='"Noto Sans Mono CJK JP","Liberation Mono",monospace' textLength="18.33" lengthAdjust="spacingAndGlyphs" >CV</text>
<text x="247.445" y="921.8" font-size="18.33" fill="#fff" font-family='"IPAGothic","Noto Sans CJK JP",monospace' textLength="54.99" lengthAdjust="spacingAndGlyphs" >部制御</text>
<rect x="73.5" y="934.55" width="14" height="14" fill="#f4f4f4" stroke="#c8c8c8" stroke-width="1.2"/>
<path d="M73.5,948.55 h14 v-14" fill="none" stroke="#8e8e8e" stroke-width="1.2"/>
<line x1="76.5" y1="941.55" x2="84.5" y2="941.55" stroke="#3d55b0" stroke-width="1.8" />
<line x1="80.5" y1="937.55" x2="80.5" y2="945.55" stroke="#3d55b0" stroke-width="1.8" />
<line x1="88" y1="941.55" x2="98" y2="941.55" stroke="#8b90a0" stroke-width="1.2" stroke-dasharray="1.25 1.25"/>
<g transform="translate(100,928.55)"><path d="M0.5,0.5 H13 L19.5,7 V22.5 H0.5 Z" fill="#f6f6f6" stroke="#d2d2d2" stroke-width="1"/><path d="M13,0.5 V7 H19.5" fill="#e6e6e6" stroke="#c8c8c8" stroke-width="1"/><path d="M0.5,13.4 H19.5" stroke="#dcdcdc" stroke-width="1"/><path d="M2,9.8 H18 M2,17 H18 M5.5,7.4 V12.2 M8,7.4 V12.2 M5.5,14.6 V19.4 M8,14.6 V19.4" stroke="#666" stroke-width="1.15" fill="none"/><circle cx="13" cy="9.8" r="1.9" fill="#f6f6f6" stroke="#666" stroke-width="1.05"/><circle cx="13" cy="17" r="1.9" fill="#f6f6f6" stroke="#666" stroke-width="1.05"/></g>
<text x="128.3" y="946.55" font-size="18.33" fill="#fff" font-family='"IPAGothic","Noto Sans CJK JP",monospace' textLength="18.33" lengthAdjust="spacingAndGlyphs" >▲</text>
<text x="146.63" y="946.55" font-size="18.33" fill="#fff" font-family='"Noto Sans Mono CJK JP","Liberation Mono",monospace' textLength="27.495" lengthAdjust="spacingAndGlyphs" >U4_</text>
<text x="174.125" y="946.55" font-size="18.33" fill="#fff" font-family='"IPAGothic","Noto Sans CJK JP",monospace' textLength="128.31" lengthAdjust="spacingAndGlyphs" >良品移載部制御</text>
<rect x="73.5" y="959.3" width="14" height="14" fill="#f4f4f4" stroke="#c8c8c8" stroke-width="1.2"/>
<path d="M73.5,973.3 h14 v-14" fill="none" stroke="#8e8e8e" stroke-width="1.2"/>
<line x1="76.5" y1="966.3" x2="84.5" y2="966.3" stroke="#3d55b0" stroke-width="1.8" />
<line x1="80.5" y1="962.3" x2="80.5" y2="970.3" stroke="#3d55b0" stroke-width="1.8" />
<line x1="88" y1="966.3" x2="98" y2="966.3" stroke="#8b90a0" stroke-width="1.2" stroke-dasharray="1.25 1.25"/>
<g transform="translate(100,953.3)"><path d="M0.5,0.5 H13 L19.5,7 V22.5 H0.5 Z" fill="#f6f6f6" stroke="#d2d2d2" stroke-width="1"/><path d="M13,0.5 V7 H19.5" fill="#e6e6e6" stroke="#c8c8c8" stroke-width="1"/><path d="M0.5,13.4 H19.5" stroke="#dcdcdc" stroke-width="1"/><path d="M2,9.8 H18 M2,17 H18 M5.5,7.4 V12.2 M8,7.4 V12.2 M5.5,14.6 V19.4 M8,14.6 V19.4" stroke="#666" stroke-width="1.15" fill="none"/><circle cx="13" cy="9.8" r="1.9" fill="#f6f6f6" stroke="#666" stroke-width="1.05"/><circle cx="13" cy="17" r="1.9" fill="#f6f6f6" stroke="#666" stroke-width="1.05"/></g>
<text x="128.3" y="971.3" font-size="18.33" fill="#fff" font-family='"IPAGothic","Noto Sans CJK JP",monospace' textLength="18.33" lengthAdjust="spacingAndGlyphs" >▽</text>
<text x="146.63" y="971.3" font-size="18.33" fill="#fff" font-family='"Noto Sans Mono CJK JP","Liberation Mono",monospace' textLength="27.495" lengthAdjust="spacingAndGlyphs" >U41</text>
<text x="174.125" y="971.3" font-size="18.33" fill="#fff" font-family='"IPAGothic","Noto Sans CJK JP",monospace' textLength="128.31" lengthAdjust="spacingAndGlyphs" >良品移載部制御</text>
<rect x="73.5" y="984.05" width="14" height="14" fill="#f4f4f4" stroke="#c8c8c8" stroke-width="1.2"/>
<path d="M73.5,998.05 h14 v-14" fill="none" stroke="#8e8e8e" stroke-width="1.2"/>
<line x1="76.5" y1="991.05" x2="84.5" y2="991.05" stroke="#3d55b0" stroke-width="1.8" />
<line x1="80.5" y1="987.05" x2="80.5" y2="995.05" stroke="#3d55b0" stroke-width="1.8" />
<line x1="88" y1="991.05" x2="98" y2="991.05" stroke="#8b90a0" stroke-width="1.2" stroke-dasharray="1.25 1.25"/>
<g transform="translate(100,978.05)"><path d="M0.5,0.5 H13 L19.5,7 V22.5 H0.5 Z" fill="#f6f6f6" stroke="#d2d2d2" stroke-width="1"/><path d="M13,0.5 V7 H19.5" fill="#e6e6e6" stroke="#c8c8c8" stroke-width="1"/><path d="M0.5,13.4 H19.5" stroke="#dcdcdc" stroke-width="1"/><path d="M2,9.8 H18 M2,17 H18 M5.5,7.4 V12.2 M8,7.4 V12.2 M5.5,14.6 V19.4 M8,14.6 V19.4" stroke="#666" stroke-width="1.15" fill="none"/><circle cx="13" cy="9.8" r="1.9" fill="#f6f6f6" stroke="#666" stroke-width="1.05"/><circle cx="13" cy="17" r="1.9" fill="#f6f6f6" stroke="#666" stroke-width="1.05"/></g>
<text x="128.3" y="996.05" font-size="18.33" fill="#fff" font-family='"IPAGothic","Noto Sans CJK JP",monospace' textLength="18.33" lengthAdjust="spacingAndGlyphs" >▲</text>
<text x="146.63" y="996.05" font-size="18.33" fill="#fff" font-family='"Noto Sans Mono CJK JP","Liberation Mono",monospace' textLength="27.495" lengthAdjust="spacingAndGlyphs" >U5_</text>
<text x="174.125" y="996.05" font-size="18.33" fill="#fff" font-family='"IPAGothic","Noto Sans CJK JP",monospace' textLength="128.31" lengthAdjust="spacingAndGlyphs" >ﾄﾚｲﾁｪﾝｼﾞ部制御</text>
<rect x="73.5" y="1008.8" width="14" height="14" fill="#f4f4f4" stroke="#c8c8c8" stroke-width="1.2"/>
<path d="M73.5,1022.8 h14 v-14" fill="none" stroke="#8e8e8e" stroke-width="1.2"/>
<line x1="76.5" y1="1015.8" x2="84.5" y2="1015.8" stroke="#3d55b0" stroke-width="1.8" />
<line x1="80.5" y1="1011.8" x2="80.5" y2="1019.8" stroke="#3d55b0" stroke-width="1.8" />
<line x1="88" y1="1015.8" x2="98" y2="1015.8" stroke="#8b90a0" stroke-width="1.2" stroke-dasharray="1.25 1.25"/>
<g transform="translate(100,1002.8)"><path d="M0.5,0.5 H13 L19.5,7 V22.5 H0.5 Z" fill="#f6f6f6" stroke="#d2d2d2" stroke-width="1"/><path d="M13,0.5 V7 H19.5" fill="#e6e6e6" stroke="#c8c8c8" stroke-width="1"/><path d="M0.5,13.4 H19.5" stroke="#dcdcdc" stroke-width="1"/><path d="M2,9.8 H18 M2,17 H18 M5.5,7.4 V12.2 M8,7.4 V12.2 M5.5,14.6 V19.4 M8,14.6 V19.4" stroke="#666" stroke-width="1.15" fill="none"/><circle cx="13" cy="9.8" r="1.9" fill="#f6f6f6" stroke="#666" stroke-width="1.05"/><circle cx="13" cy="17" r="1.9" fill="#f6f6f6" stroke="#666" stroke-width="1.05"/></g>
<text x="128.3" y="1020.8" font-size="18.33" fill="#fff" font-family='"IPAGothic","Noto Sans CJK JP",monospace' textLength="18.33" lengthAdjust="spacingAndGlyphs" >【</text>
<text x="146.63" y="1020.8" font-size="18.33" fill="#fff" font-family='"Noto Sans Mono CJK JP","Liberation Mono",monospace' textLength="36.66" lengthAdjust="spacingAndGlyphs" >DR01</text>
<text x="183.29" y="1020.8" font-size="18.33" fill="#fff" font-family='"IPAGothic","Noto Sans CJK JP",monospace' textLength="73.32" lengthAdjust="spacingAndGlyphs" >】上流側</text>
<text x="256.61" y="1020.8" font-size="18.33" fill="#fff" font-family='"Noto Sans Mono CJK JP","Liberation Mono",monospace' textLength="18.33" lengthAdjust="spacingAndGlyphs" >CV</text>
<rect x="73.5" y="1033.55" width="14" height="14" fill="#f4f4f4" stroke="#c8c8c8" stroke-width="1.2"/>
<path d="M73.5,1047.55 h14 v-14" fill="none" stroke="#8e8e8e" stroke-width="1.2"/>
<line x1="76.5" y1="1040.55" x2="84.5" y2="1040.55" stroke="#3d55b0" stroke-width="1.8" />
<line x1="80.5" y1="1036.55" x2="80.5" y2="1044.55" stroke="#3d55b0" stroke-width="1.8" />
<line x1="88" y1="1040.55" x2="98" y2="1040.55" stroke="#8b90a0" stroke-width="1.2" stroke-dasharray="1.25 1.25"/>
<g transform="translate(100,1027.55)"><path d="M0.5,0.5 H13 L19.5,7 V22.5 H0.5 Z" fill="#f6f6f6" stroke="#d2d2d2" stroke-width="1"/><path d="M13,0.5 V7 H19.5" fill="#e6e6e6" stroke="#c8c8c8" stroke-width="1"/><path d="M0.5,13.4 H19.5" stroke="#dcdcdc" stroke-width="1"/><path d="M2,9.8 H18 M2,17 H18 M5.5,7.4 V12.2 M8,7.4 V12.2 M5.5,14.6 V19.4 M8,14.6 V19.4" stroke="#666" stroke-width="1.15" fill="none"/><circle cx="13" cy="9.8" r="1.9" fill="#f6f6f6" stroke="#666" stroke-width="1.05"/><circle cx="13" cy="17" r="1.9" fill="#f6f6f6" stroke="#666" stroke-width="1.05"/></g>
<text x="128.3" y="1045.55" font-size="18.33" fill="#fff" font-family='"IPAGothic","Noto Sans CJK JP",monospace' textLength="18.33" lengthAdjust="spacingAndGlyphs" >【</text>
<text x="146.63" y="1045.55" font-size="18.33" fill="#fff" font-family='"Noto Sans Mono CJK JP","Liberation Mono",monospace' textLength="36.66" lengthAdjust="spacingAndGlyphs" >DR02</text>
<text x="183.29" y="1045.55" font-size="18.33" fill="#fff" font-family='"IPAGothic","Noto Sans CJK JP",monospace' textLength="73.32" lengthAdjust="spacingAndGlyphs" >】下流側</text>
<text x="256.61" y="1045.55" font-size="18.33" fill="#fff" font-family='"Noto Sans Mono CJK JP","Liberation Mono",monospace' textLength="18.33" lengthAdjust="spacingAndGlyphs" >CV</text>
<rect x="73.5" y="1058.3" width="14" height="14" fill="#f4f4f4" stroke="#c8c8c8" stroke-width="1.2"/>
<path d="M73.5,1072.3 h14 v-14" fill="none" stroke="#8e8e8e" stroke-width="1.2"/>
<line x1="76.5" y1="1065.3" x2="84.5" y2="1065.3" stroke="#3d55b0" stroke-width="1.8" />
<line x1="80.5" y1="1061.3" x2="80.5" y2="1069.3" stroke="#3d55b0" stroke-width="1.8" />
<line x1="88" y1="1065.3" x2="98" y2="1065.3" stroke="#8b90a0" stroke-width="1.2" stroke-dasharray="1.25 1.25"/>
<g transform="translate(100,1052.3)"><path d="M0.5,0.5 H13 L19.5,7 V22.5 H0.5 Z" fill="#f6f6f6" stroke="#d2d2d2" stroke-width="1"/><path d="M13,0.5 V7 H19.5" fill="#e6e6e6" stroke="#c8c8c8" stroke-width="1"/><path d="M0.5,13.4 H19.5" stroke="#dcdcdc" stroke-width="1"/><path d="M2,9.8 H18 M2,17 H18 M5.5,7.4 V12.2 M8,7.4 V12.2 M5.5,14.6 V19.4 M8,14.6 V19.4" stroke="#666" stroke-width="1.15" fill="none"/><circle cx="13" cy="9.8" r="1.9" fill="#f6f6f6" stroke="#666" stroke-width="1.05"/><circle cx="13" cy="17" r="1.9" fill="#f6f6f6" stroke="#666" stroke-width="1.05"/></g>
<text x="128.3" y="1070.3" font-size="18.33" fill="#fff" font-family='"IPAGothic","Noto Sans CJK JP",monospace' textLength="18.33" lengthAdjust="spacingAndGlyphs" >【</text>
<text x="146.63" y="1070.3" font-size="18.33" fill="#fff" font-family='"Noto Sans Mono CJK JP","Liberation Mono",monospace' textLength="36.66" lengthAdjust="spacingAndGlyphs" >DR03</text>
<text x="183.29" y="1070.3" font-size="18.33" fill="#fff" font-family='"IPAGothic","Noto Sans CJK JP",monospace' textLength="91.65" lengthAdjust="spacingAndGlyphs" >】反転機構</text>
<rect x="73.5" y="1083.05" width="14" height="14" fill="#f4f4f4" stroke="#c8c8c8" stroke-width="1.2"/>
<path d="M73.5,1097.05 h14 v-14" fill="none" stroke="#8e8e8e" stroke-width="1.2"/>
<line x1="76.5" y1="1090.05" x2="84.5" y2="1090.05" stroke="#3d55b0" stroke-width="1.8" />
<line x1="80.5" y1="1086.05" x2="80.5" y2="1094.05" stroke="#3d55b0" stroke-width="1.8" />
<line x1="88" y1="1090.05" x2="98" y2="1090.05" stroke="#8b90a0" stroke-width="1.2" stroke-dasharray="1.25 1.25"/>
<g transform="translate(100,1077.05)"><path d="M0.5,0.5 H13 L19.5,7 V22.5 H0.5 Z" fill="#f6f6f6" stroke="#d2d2d2" stroke-width="1"/><path d="M13,0.5 V7 H19.5" fill="#e6e6e6" stroke="#c8c8c8" stroke-width="1"/><path d="M0.5,13.4 H19.5" stroke="#dcdcdc" stroke-width="1"/><path d="M2,9.8 H18 M2,17 H18 M5.5,7.4 V12.2 M8,7.4 V12.2 M5.5,14.6 V19.4 M8,14.6 V19.4" stroke="#666" stroke-width="1.15" fill="none"/><circle cx="13" cy="9.8" r="1.9" fill="#f6f6f6" stroke="#666" stroke-width="1.05"/><circle cx="13" cy="17" r="1.9" fill="#f6f6f6" stroke="#666" stroke-width="1.05"/></g>
<text x="128.3" y="1095.05" font-size="18.33" fill="#fff" font-family='"IPAGothic","Noto Sans CJK JP",monospace' textLength="18.33" lengthAdjust="spacingAndGlyphs" >【</text>
<text x="146.63" y="1095.05" font-size="18.33" fill="#fff" font-family='"Noto Sans Mono CJK JP","Liberation Mono",monospace' textLength="36.66" lengthAdjust="spacingAndGlyphs" >DR04</text>
<text x="183.29" y="1095.05" font-size="18.33" fill="#fff" font-family='"IPAGothic","Noto Sans CJK JP",monospace' textLength="91.65" lengthAdjust="spacingAndGlyphs" >】反転機構</text>
<rect x="73.5" y="1107.8" width="14" height="14" fill="#f4f4f4" stroke="#c8c8c8" stroke-width="1.2"/>
<path d="M73.5,1121.8 h14 v-14" fill="none" stroke="#8e8e8e" stroke-width="1.2"/>
<line x1="76.5" y1="1114.8" x2="84.5" y2="1114.8" stroke="#3d55b0" stroke-width="1.8" />
<line x1="80.5" y1="1110.8" x2="80.5" y2="1118.8" stroke="#3d55b0" stroke-width="1.8" />
<line x1="88" y1="1114.8" x2="98" y2="1114.8" stroke="#8b90a0" stroke-width="1.2" stroke-dasharray="1.25 1.25"/>
<g transform="translate(100,1101.8)"><path d="M0.5,0.5 H13 L19.5,7 V22.5 H0.5 Z" fill="#f6f6f6" stroke="#d2d2d2" stroke-width="1"/><path d="M13,0.5 V7 H19.5" fill="#e6e6e6" stroke="#c8c8c8" stroke-width="1"/><path d="M0.5,13.4 H19.5" stroke="#dcdcdc" stroke-width="1"/><path d="M2,9.8 H18 M2,17 H18 M5.5,7.4 V12.2 M8,7.4 V12.2 M5.5,14.6 V19.4 M8,14.6 V19.4" stroke="#666" stroke-width="1.15" fill="none"/><circle cx="13" cy="9.8" r="1.9" fill="#f6f6f6" stroke="#666" stroke-width="1.05"/><circle cx="13" cy="17" r="1.9" fill="#f6f6f6" stroke="#666" stroke-width="1.05"/></g>
<text x="128.3" y="1119.8" font-size="18.33" fill="#fff" font-family='"IPAGothic","Noto Sans CJK JP",monospace' textLength="18.33" lengthAdjust="spacingAndGlyphs" >【</text>
<text x="146.63" y="1119.8" font-size="18.33" fill="#fff" font-family='"Noto Sans Mono CJK JP","Liberation Mono",monospace' textLength="36.66" lengthAdjust="spacingAndGlyphs" >DR05</text>
<text x="183.29" y="1119.8" font-size="18.33" fill="#fff" font-family='"IPAGothic","Noto Sans CJK JP",monospace' textLength="91.65" lengthAdjust="spacingAndGlyphs" >】製品反転</text>
<rect x="73.5" y="1132.55" width="14" height="14" fill="#f4f4f4" stroke="#c8c8c8" stroke-width="1.2"/>
<path d="M73.5,1146.55 h14 v-14" fill="none" stroke="#8e8e8e" stroke-width="1.2"/>
<line x1="76.5" y1="1139.55" x2="84.5" y2="1139.55" stroke="#3d55b0" stroke-width="1.8" />
<line x1="80.5" y1="1135.55" x2="80.5" y2="1143.55" stroke="#3d55b0" stroke-width="1.8" />
<line x1="88" y1="1139.55" x2="98" y2="1139.55" stroke="#8b90a0" stroke-width="1.2" stroke-dasharray="1.25 1.25"/>
<g transform="translate(100,1126.55)"><path d="M0.5,0.5 H13 L19.5,7 V22.5 H0.5 Z" fill="#f6f6f6" stroke="#d2d2d2" stroke-width="1"/><path d="M13,0.5 V7 H19.5" fill="#e6e6e6" stroke="#c8c8c8" stroke-width="1"/><path d="M0.5,13.4 H19.5" stroke="#dcdcdc" stroke-width="1"/><path d="M2,9.8 H18 M2,17 H18 M5.5,7.4 V12.2 M8,7.4 V12.2 M5.5,14.6 V19.4 M8,14.6 V19.4" stroke="#666" stroke-width="1.15" fill="none"/><circle cx="13" cy="9.8" r="1.9" fill="#f6f6f6" stroke="#666" stroke-width="1.05"/><circle cx="13" cy="17" r="1.9" fill="#f6f6f6" stroke="#666" stroke-width="1.05"/></g>
<text x="128.3" y="1144.55" font-size="18.33" fill="#fff" font-family='"IPAGothic","Noto Sans CJK JP",monospace' textLength="18.33" lengthAdjust="spacingAndGlyphs" >【</text>
<text x="146.63" y="1144.55" font-size="18.33" fill="#fff" font-family='"Noto Sans Mono CJK JP","Liberation Mono",monospace' textLength="36.66" lengthAdjust="spacingAndGlyphs" >DR06</text>
<text x="183.29" y="1144.55" font-size="18.33" fill="#fff" font-family='"IPAGothic","Noto Sans CJK JP",monospace' textLength="54.99" lengthAdjust="spacingAndGlyphs" >】供給</text>
<text x="238.28" y="1144.55" font-size="18.33" fill="#fff" font-family='"Noto Sans Mono CJK JP","Liberation Mono",monospace' textLength="18.33" lengthAdjust="spacingAndGlyphs" >PP</text>
<rect x="73.5" y="1157.3" width="14" height="14" fill="#f4f4f4" stroke="#c8c8c8" stroke-width="1.2"/>
<path d="M73.5,1171.3 h14 v-14" fill="none" stroke="#8e8e8e" stroke-width="1.2"/>
<line x1="76.5" y1="1164.3" x2="84.5" y2="1164.3" stroke="#3d55b0" stroke-width="1.8" />
<line x1="80.5" y1="1160.3" x2="80.5" y2="1168.3" stroke="#3d55b0" stroke-width="1.8" />
<line x1="88" y1="1164.3" x2="98" y2="1164.3" stroke="#8b90a0" stroke-width="1.2" stroke-dasharray="1.25 1.25"/>
<g transform="translate(100,1151.3)"><path d="M0.5,0.5 H13 L19.5,7 V22.5 H0.5 Z" fill="#f6f6f6" stroke="#d2d2d2" stroke-width="1"/><path d="M13,0.5 V7 H19.5" fill="#e6e6e6" stroke="#c8c8c8" stroke-width="1"/><path d="M0.5,13.4 H19.5" stroke="#dcdcdc" stroke-width="1"/><path d="M2,9.8 H18 M2,17 H18 M5.5,7.4 V12.2 M8,7.4 V12.2 M5.5,14.6 V19.4 M8,14.6 V19.4" stroke="#666" stroke-width="1.15" fill="none"/><circle cx="13" cy="9.8" r="1.9" fill="#f6f6f6" stroke="#666" stroke-width="1.05"/><circle cx="13" cy="17" r="1.9" fill="#f6f6f6" stroke="#666" stroke-width="1.05"/></g>
<text x="128.3" y="1169.3" font-size="18.33" fill="#fff" font-family='"IPAGothic","Noto Sans CJK JP",monospace' textLength="18.33" lengthAdjust="spacingAndGlyphs" >【</text>
<text x="146.63" y="1169.3" font-size="18.33" fill="#fff" font-family='"Noto Sans Mono CJK JP","Liberation Mono",monospace' textLength="36.66" lengthAdjust="spacingAndGlyphs" >DR07</text>
<text x="183.29" y="1169.3" font-size="18.33" fill="#fff" font-family='"IPAGothic","Noto Sans CJK JP",monospace' textLength="54.99" lengthAdjust="spacingAndGlyphs" >】供給</text>
<text x="238.28" y="1169.3" font-size="18.33" fill="#fff" font-family='"Noto Sans Mono CJK JP","Liberation Mono",monospace' textLength="18.33" lengthAdjust="spacingAndGlyphs" >PP</text>
<rect x="73.5" y="1182.05" width="14" height="14" fill="#f4f4f4" stroke="#c8c8c8" stroke-width="1.2"/>
<path d="M73.5,1196.05 h14 v-14" fill="none" stroke="#8e8e8e" stroke-width="1.2"/>
<line x1="76.5" y1="1189.05" x2="84.5" y2="1189.05" stroke="#3d55b0" stroke-width="1.8" />
<line x1="80.5" y1="1185.05" x2="80.5" y2="1193.05" stroke="#3d55b0" stroke-width="1.8" />
<line x1="88" y1="1189.05" x2="98" y2="1189.05" stroke="#8b90a0" stroke-width="1.2" stroke-dasharray="1.25 1.25"/>
<g transform="translate(100,1176.05)"><path d="M0.5,0.5 H13 L19.5,7 V22.5 H0.5 Z" fill="#f6f6f6" stroke="#d2d2d2" stroke-width="1"/><path d="M13,0.5 V7 H19.5" fill="#e6e6e6" stroke="#c8c8c8" stroke-width="1"/><path d="M0.5,13.4 H19.5" stroke="#dcdcdc" stroke-width="1"/><path d="M2,9.8 H18 M2,17 H18 M5.5,7.4 V12.2 M8,7.4 V12.2 M5.5,14.6 V19.4 M8,14.6 V19.4" stroke="#666" stroke-width="1.15" fill="none"/><circle cx="13" cy="9.8" r="1.9" fill="#f6f6f6" stroke="#666" stroke-width="1.05"/><circle cx="13" cy="17" r="1.9" fill="#f6f6f6" stroke="#666" stroke-width="1.05"/></g>
<text x="128.3" y="1194.05" font-size="18.33" fill="#fff" font-family='"IPAGothic","Noto Sans CJK JP",monospace' textLength="18.33" lengthAdjust="spacingAndGlyphs" >【</text>
<text x="146.63" y="1194.05" font-size="18.33" fill="#fff" font-family='"Noto Sans Mono CJK JP","Liberation Mono",monospace' textLength="36.66" lengthAdjust="spacingAndGlyphs" >DR08</text>
<text x="183.29" y="1194.05" font-size="18.33" fill="#fff" font-family='"IPAGothic","Noto Sans CJK JP",monospace' textLength="54.99" lengthAdjust="spacingAndGlyphs" >】供給</text>
<text x="238.28" y="1194.05" font-size="18.33" fill="#fff" font-family='"Noto Sans Mono CJK JP","Liberation Mono",monospace' textLength="18.33" lengthAdjust="spacingAndGlyphs" >PP</text>
<rect x="73.5" y="1206.8" width="14" height="14" fill="#f4f4f4" stroke="#c8c8c8" stroke-width="1.2"/>
<path d="M73.5,1220.8 h14 v-14" fill="none" stroke="#8e8e8e" stroke-width="1.2"/>
<line x1="76.5" y1="1213.8" x2="84.5" y2="1213.8" stroke="#3d55b0" stroke-width="1.8" />
<line x1="80.5" y1="1209.8" x2="80.5" y2="1217.8" stroke="#3d55b0" stroke-width="1.8" />
<line x1="88" y1="1213.8" x2="98" y2="1213.8" stroke="#8b90a0" stroke-width="1.2" stroke-dasharray="1.25 1.25"/>
<g transform="translate(100,1200.8)"><path d="M0.5,0.5 H13 L19.5,7 V22.5 H0.5 Z" fill="#f6f6f6" stroke="#d2d2d2" stroke-width="1"/><path d="M13,0.5 V7 H19.5" fill="#e6e6e6" stroke="#c8c8c8" stroke-width="1"/><path d="M0.5,13.4 H19.5" stroke="#dcdcdc" stroke-width="1"/><path d="M2,9.8 H18 M2,17 H18 M5.5,7.4 V12.2 M8,7.4 V12.2 M5.5,14.6 V19.4 M8,14.6 V19.4" stroke="#666" stroke-width="1.15" fill="none"/><circle cx="13" cy="9.8" r="1.9" fill="#f6f6f6" stroke="#666" stroke-width="1.05"/><circle cx="13" cy="17" r="1.9" fill="#f6f6f6" stroke="#666" stroke-width="1.05"/></g>
<text x="128.3" y="1218.8" font-size="18.33" fill="#fff" font-family='"IPAGothic","Noto Sans CJK JP",monospace' textLength="18.33" lengthAdjust="spacingAndGlyphs" >【</text>
<text x="146.63" y="1218.8" font-size="18.33" fill="#fff" font-family='"Noto Sans Mono CJK JP","Liberation Mono",monospace' textLength="36.66" lengthAdjust="spacingAndGlyphs" >DR09</text>
<text x="183.29" y="1218.8" font-size="18.33" fill="#fff" font-family='"IPAGothic","Noto Sans CJK JP",monospace' textLength="18.33" lengthAdjust="spacingAndGlyphs" >】</text>
<text x="201.62" y="1218.8" font-size="18.33" fill="#fff" font-family='"Noto Sans Mono CJK JP","Liberation Mono",monospace' textLength="18.33" lengthAdjust="spacingAndGlyphs" >CV</text>
<text x="219.95" y="1218.8" font-size="18.33" fill="#fff" font-family='"IPAGothic","Noto Sans CJK JP",monospace' textLength="36.66" lengthAdjust="spacingAndGlyphs" >移載</text>
<rect x="73.5" y="1231.55" width="14" height="14" fill="#f4f4f4" stroke="#c8c8c8" stroke-width="1.2"/>
<path d="M73.5,1245.55 h14 v-14" fill="none" stroke="#8e8e8e" stroke-width="1.2"/>
<line x1="76.5" y1="1238.55" x2="84.5" y2="1238.55" stroke="#3d55b0" stroke-width="1.8" />
<line x1="80.5" y1="1234.55" x2="80.5" y2="1242.55" stroke="#3d55b0" stroke-width="1.8" />
<line x1="88" y1="1238.55" x2="98" y2="1238.55" stroke="#8b90a0" stroke-width="1.2" stroke-dasharray="1.25 1.25"/>
<g transform="translate(100,1225.55)"><path d="M0.5,0.5 H13 L19.5,7 V22.5 H0.5 Z" fill="#f6f6f6" stroke="#d2d2d2" stroke-width="1"/><path d="M13,0.5 V7 H19.5" fill="#e6e6e6" stroke="#c8c8c8" stroke-width="1"/><path d="M0.5,13.4 H19.5" stroke="#dcdcdc" stroke-width="1"/><path d="M2,9.8 H18 M2,17 H18 M5.5,7.4 V12.2 M8,7.4 V12.2 M5.5,14.6 V19.4 M8,14.6 V19.4" stroke="#666" stroke-width="1.15" fill="none"/><circle cx="13" cy="9.8" r="1.9" fill="#f6f6f6" stroke="#666" stroke-width="1.05"/><circle cx="13" cy="17" r="1.9" fill="#f6f6f6" stroke="#666" stroke-width="1.05"/></g>
<text x="128.3" y="1243.55" font-size="18.33" fill="#fff" font-family='"IPAGothic","Noto Sans CJK JP",monospace' textLength="18.33" lengthAdjust="spacingAndGlyphs" >【</text>
<text x="146.63" y="1243.55" font-size="18.33" fill="#fff" font-family='"Noto Sans Mono CJK JP","Liberation Mono",monospace' textLength="36.66" lengthAdjust="spacingAndGlyphs" >DR10</text>
<text x="183.29" y="1243.55" font-size="18.33" fill="#fff" font-family='"IPAGothic","Noto Sans CJK JP",monospace' textLength="18.33" lengthAdjust="spacingAndGlyphs" >】</text>
<text x="201.62" y="1243.55" font-size="18.33" fill="#fff" font-family='"Noto Sans Mono CJK JP","Liberation Mono",monospace' textLength="18.33" lengthAdjust="spacingAndGlyphs" >NG</text>
<text x="219.95" y="1243.55" font-size="18.33" fill="#fff" font-family='"IPAGothic","Noto Sans CJK JP",monospace' textLength="36.66" lengthAdjust="spacingAndGlyphs" >排出</text>
<rect x="73.5" y="1256.3" width="14" height="14" fill="#f4f4f4" stroke="#c8c8c8" stroke-width="1.2"/>
<path d="M73.5,1270.3 h14 v-14" fill="none" stroke="#8e8e8e" stroke-width="1.2"/>
<line x1="76.5" y1="1263.3" x2="84.5" y2="1263.3" stroke="#3d55b0" stroke-width="1.8" />
<line x1="80.5" y1="1259.3" x2="80.5" y2="1267.3" stroke="#3d55b0" stroke-width="1.8" />
<line x1="88" y1="1263.3" x2="98" y2="1263.3" stroke="#8b90a0" stroke-width="1.2" stroke-dasharray="1.25 1.25"/>
<g transform="translate(100,1250.3)"><path d="M0.5,0.5 H13 L19.5,7 V22.5 H0.5 Z" fill="#f6f6f6" stroke="#d2d2d2" stroke-width="1"/><path d="M13,0.5 V7 H19.5" fill="#e6e6e6" stroke="#c8c8c8" stroke-width="1"/><path d="M0.5,13.4 H19.5" stroke="#dcdcdc" stroke-width="1"/><path d="M2,9.8 H18 M2,17 H18 M5.5,7.4 V12.2 M8,7.4 V12.2 M5.5,14.6 V19.4 M8,14.6 V19.4" stroke="#666" stroke-width="1.15" fill="none"/><circle cx="13" cy="9.8" r="1.9" fill="#f6f6f6" stroke="#666" stroke-width="1.05"/><circle cx="13" cy="17" r="1.9" fill="#f6f6f6" stroke="#666" stroke-width="1.05"/></g>
<text x="128.3" y="1268.3" font-size="18.33" fill="#fff" font-family='"IPAGothic","Noto Sans CJK JP",monospace' textLength="18.33" lengthAdjust="spacingAndGlyphs" >【</text>
<text x="146.63" y="1268.3" font-size="18.33" fill="#fff" font-family='"Noto Sans Mono CJK JP","Liberation Mono",monospace' textLength="36.66" lengthAdjust="spacingAndGlyphs" >DR11</text>
<text x="183.29" y="1268.3" font-size="18.33" fill="#fff" font-family='"IPAGothic","Noto Sans CJK JP",monospace' textLength="18.33" lengthAdjust="spacingAndGlyphs" >】</text>
<text x="201.62" y="1268.3" font-size="18.33" fill="#fff" font-family='"Noto Sans Mono CJK JP","Liberation Mono",monospace' textLength="18.33" lengthAdjust="spacingAndGlyphs" >NG</text>
<text x="219.95" y="1268.3" font-size="18.33" fill="#fff" font-family='"IPAGothic","Noto Sans CJK JP",monospace' textLength="36.66" lengthAdjust="spacingAndGlyphs" >排出</text>
</g>
<defs><clipPath id="ladclip"><rect x="280" y="248.4" width="1131.6" height="1064"/></clipPath></defs>
<rect x="361.5" y="264" width="1050.1" height="1048.4" fill="#ffffff" />
<rect x="280" y="248.4" width="81.5" height="1064" fill="#d6e6fd" />
<g clip-path="url(#ladclip)">
<line x1="363" y1="347.4" x2="1353" y2="347.4" stroke="#cccccc" stroke-width="1.2" stroke-dasharray="4.7 4.5"/>
<line x1="461.04" y1="264" x2="461.04" y2="347.4" stroke="#cccccc" stroke-width="1.2" stroke-dasharray="4.7 4.5"/>
<line x1="560.08" y1="264" x2="560.08" y2="347.4" stroke="#cccccc" stroke-width="1.2" stroke-dasharray="4.7 4.5"/>
<line x1="659.12" y1="264" x2="659.12" y2="347.4" stroke="#cccccc" stroke-width="1.2" stroke-dasharray="4.7 4.5"/>
<line x1="758.16" y1="264" x2="758.16" y2="347.4" stroke="#cccccc" stroke-width="1.2" stroke-dasharray="4.7 4.5"/>
<line x1="857.2" y1="264" x2="857.2" y2="347.4" stroke="#cccccc" stroke-width="1.2" stroke-dasharray="4.7 4.5"/>
<line x1="956.24" y1="264" x2="956.24" y2="347.4" stroke="#cccccc" stroke-width="1.2" stroke-dasharray="4.7 4.5"/>
<line x1="1055.28" y1="264" x2="1055.28" y2="347.4" stroke="#cccccc" stroke-width="1.2" stroke-dasharray="4.7 4.5"/>
<line x1="1154.32" y1="264" x2="1154.32" y2="347.4" stroke="#cccccc" stroke-width="1.2" stroke-dasharray="4.7 4.5"/>
<line x1="1253.36" y1="264" x2="1253.36" y2="347.4" stroke="#cccccc" stroke-width="1.2" stroke-dasharray="4.7 4.5"/>
<line x1="1352.4" y1="264" x2="1352.4" y2="347.4" stroke="#cccccc" stroke-width="1.2" stroke-dasharray="4.7 4.5"/>
<line x1="363" y1="373.5" x2="1353" y2="373.5" stroke="#cccccc" stroke-width="1.2" stroke-dasharray="4.7 4.5"/>
<line x1="363" y1="472.36" x2="1353" y2="472.36" stroke="#cccccc" stroke-width="1.2" stroke-dasharray="4.7 4.5"/>
<line x1="461.04" y1="379.3" x2="461.04" y2="472.36" stroke="#cccccc" stroke-width="1.2" stroke-dasharray="4.7 4.5"/>
<line x1="560.08" y1="379.3" x2="560.08" y2="472.36" stroke="#cccccc" stroke-width="1.2" stroke-dasharray="4.7 4.5"/>
<line x1="659.12" y1="379.3" x2="659.12" y2="472.36" stroke="#cccccc" stroke-width="1.2" stroke-dasharray="4.7 4.5"/>
<line x1="758.16" y1="379.3" x2="758.16" y2="472.36" stroke="#cccccc" stroke-width="1.2" stroke-dasharray="4.7 4.5"/>
<line x1="857.2" y1="379.3" x2="857.2" y2="472.36" stroke="#cccccc" stroke-width="1.2" stroke-dasharray="4.7 4.5"/>
<line x1="956.24" y1="379.3" x2="956.24" y2="472.36" stroke="#cccccc" stroke-width="1.2" stroke-dasharray="4.7 4.5"/>
<line x1="1055.28" y1="379.3" x2="1055.28" y2="472.36" stroke="#cccccc" stroke-width="1.2" stroke-dasharray="4.7 4.5"/>
<line x1="1154.32" y1="379.3" x2="1154.32" y2="472.36" stroke="#cccccc" stroke-width="1.2" stroke-dasharray="4.7 4.5"/>
<line x1="1253.36" y1="379.3" x2="1253.36" y2="472.36" stroke="#cccccc" stroke-width="1.2" stroke-dasharray="4.7 4.5"/>
<line x1="1352.4" y1="379.3" x2="1352.4" y2="472.36" stroke="#cccccc" stroke-width="1.2" stroke-dasharray="4.7 4.5"/>
<line x1="363" y1="571.42" x2="1353" y2="571.42" stroke="#cccccc" stroke-width="1.2" stroke-dasharray="4.7 4.5"/>
<line x1="461.04" y1="478.36" x2="461.04" y2="571.42" stroke="#cccccc" stroke-width="1.2" stroke-dasharray="4.7 4.5"/>
<line x1="560.08" y1="478.36" x2="560.08" y2="571.42" stroke="#cccccc" stroke-width="1.2" stroke-dasharray="4.7 4.5"/>
<line x1="659.12" y1="478.36" x2="659.12" y2="571.42" stroke="#cccccc" stroke-width="1.2" stroke-dasharray="4.7 4.5"/>
<line x1="758.16" y1="478.36" x2="758.16" y2="571.42" stroke="#cccccc" stroke-width="1.2" stroke-dasharray="4.7 4.5"/>
<line x1="857.2" y1="478.36" x2="857.2" y2="571.42" stroke="#cccccc" stroke-width="1.2" stroke-dasharray="4.7 4.5"/>
<line x1="956.24" y1="478.36" x2="956.24" y2="571.42" stroke="#cccccc" stroke-width="1.2" stroke-dasharray="4.7 4.5"/>
<line x1="1055.28" y1="478.36" x2="1055.28" y2="571.42" stroke="#cccccc" stroke-width="1.2" stroke-dasharray="4.7 4.5"/>
<line x1="1154.32" y1="478.36" x2="1154.32" y2="571.42" stroke="#cccccc" stroke-width="1.2" stroke-dasharray="4.7 4.5"/>
<line x1="1253.36" y1="478.36" x2="1253.36" y2="571.42" stroke="#cccccc" stroke-width="1.2" stroke-dasharray="4.7 4.5"/>
<line x1="1352.4" y1="478.36" x2="1352.4" y2="571.42" stroke="#cccccc" stroke-width="1.2" stroke-dasharray="4.7 4.5"/>
<line x1="363" y1="670.48" x2="1353" y2="670.48" stroke="#cccccc" stroke-width="1.2" stroke-dasharray="4.7 4.5"/>
<line x1="461.04" y1="577.42" x2="461.04" y2="670.48" stroke="#cccccc" stroke-width="1.2" stroke-dasharray="4.7 4.5"/>
<line x1="560.08" y1="577.42" x2="560.08" y2="670.48" stroke="#cccccc" stroke-width="1.2" stroke-dasharray="4.7 4.5"/>
<line x1="659.12" y1="577.42" x2="659.12" y2="670.48" stroke="#cccccc" stroke-width="1.2" stroke-dasharray="4.7 4.5"/>
<line x1="758.16" y1="577.42" x2="758.16" y2="670.48" stroke="#cccccc" stroke-width="1.2" stroke-dasharray="4.7 4.5"/>
<line x1="857.2" y1="577.42" x2="857.2" y2="670.48" stroke="#cccccc" stroke-width="1.2" stroke-dasharray="4.7 4.5"/>
<line x1="956.24" y1="577.42" x2="956.24" y2="670.48" stroke="#cccccc" stroke-width="1.2" stroke-dasharray="4.7 4.5"/>
<line x1="1055.28" y1="577.42" x2="1055.28" y2="670.48" stroke="#cccccc" stroke-width="1.2" stroke-dasharray="4.7 4.5"/>
<line x1="1154.32" y1="577.42" x2="1154.32" y2="670.48" stroke="#cccccc" stroke-width="1.2" stroke-dasharray="4.7 4.5"/>
<line x1="1253.36" y1="577.42" x2="1253.36" y2="670.48" stroke="#cccccc" stroke-width="1.2" stroke-dasharray="4.7 4.5"/>
<line x1="1352.4" y1="577.42" x2="1352.4" y2="670.48" stroke="#cccccc" stroke-width="1.2" stroke-dasharray="4.7 4.5"/>
<line x1="363" y1="696.58" x2="1353" y2="696.58" stroke="#cccccc" stroke-width="1.2" stroke-dasharray="4.7 4.5"/>
<line x1="363" y1="795.64" x2="1353" y2="795.64" stroke="#cccccc" stroke-width="1.2" stroke-dasharray="4.7 4.5"/>
<line x1="461.04" y1="702.58" x2="461.04" y2="795.64" stroke="#cccccc" stroke-width="1.2" stroke-dasharray="4.7 4.5"/>
<line x1="560.08" y1="702.58" x2="560.08" y2="795.64" stroke="#cccccc" stroke-width="1.2" stroke-dasharray="4.7 4.5"/>
<line x1="659.12" y1="702.58" x2="659.12" y2="795.64" stroke="#cccccc" stroke-width="1.2" stroke-dasharray="4.7 4.5"/>
<line x1="758.16" y1="702.58" x2="758.16" y2="795.64" stroke="#cccccc" stroke-width="1.2" stroke-dasharray="4.7 4.5"/>
<line x1="857.2" y1="702.58" x2="857.2" y2="795.64" stroke="#cccccc" stroke-width="1.2" stroke-dasharray="4.7 4.5"/>
<line x1="956.24" y1="702.58" x2="956.24" y2="795.64" stroke="#cccccc" stroke-width="1.2" stroke-dasharray="4.7 4.5"/>
<line x1="1055.28" y1="702.58" x2="1055.28" y2="795.64" stroke="#cccccc" stroke-width="1.2" stroke-dasharray="4.7 4.5"/>
<line x1="1154.32" y1="702.58" x2="1154.32" y2="795.64" stroke="#cccccc" stroke-width="1.2" stroke-dasharray="4.7 4.5"/>
<line x1="1253.36" y1="702.58" x2="1253.36" y2="795.64" stroke="#cccccc" stroke-width="1.2" stroke-dasharray="4.7 4.5"/>
<line x1="1352.4" y1="702.58" x2="1352.4" y2="795.64" stroke="#cccccc" stroke-width="1.2" stroke-dasharray="4.7 4.5"/>
<line x1="363" y1="894.7" x2="1353" y2="894.7" stroke="#cccccc" stroke-width="1.2" stroke-dasharray="4.7 4.5"/>
<line x1="461.04" y1="801.64" x2="461.04" y2="894.7" stroke="#cccccc" stroke-width="1.2" stroke-dasharray="4.7 4.5"/>
<line x1="560.08" y1="801.64" x2="560.08" y2="894.7" stroke="#cccccc" stroke-width="1.2" stroke-dasharray="4.7 4.5"/>
<line x1="659.12" y1="801.64" x2="659.12" y2="894.7" stroke="#cccccc" stroke-width="1.2" stroke-dasharray="4.7 4.5"/>
<line x1="758.16" y1="801.64" x2="758.16" y2="894.7" stroke="#cccccc" stroke-width="1.2" stroke-dasharray="4.7 4.5"/>
<line x1="857.2" y1="801.64" x2="857.2" y2="894.7" stroke="#cccccc" stroke-width="1.2" stroke-dasharray="4.7 4.5"/>
<line x1="956.24" y1="801.64" x2="956.24" y2="894.7" stroke="#cccccc" stroke-width="1.2" stroke-dasharray="4.7 4.5"/>
<line x1="1055.28" y1="801.64" x2="1055.28" y2="894.7" stroke="#cccccc" stroke-width="1.2" stroke-dasharray="4.7 4.5"/>
<line x1="1154.32" y1="801.64" x2="1154.32" y2="894.7" stroke="#cccccc" stroke-width="1.2" stroke-dasharray="4.7 4.5"/>
<line x1="1253.36" y1="801.64" x2="1253.36" y2="894.7" stroke="#cccccc" stroke-width="1.2" stroke-dasharray="4.7 4.5"/>
<line x1="1352.4" y1="801.64" x2="1352.4" y2="894.7" stroke="#cccccc" stroke-width="1.2" stroke-dasharray="4.7 4.5"/>
<line x1="363" y1="993.76" x2="1353" y2="993.76" stroke="#cccccc" stroke-width="1.2" stroke-dasharray="4.7 4.5"/>
<line x1="461.04" y1="900.7" x2="461.04" y2="993.76" stroke="#cccccc" stroke-width="1.2" stroke-dasharray="4.7 4.5"/>
<line x1="560.08" y1="900.7" x2="560.08" y2="993.76" stroke="#cccccc" stroke-width="1.2" stroke-dasharray="4.7 4.5"/>
<line x1="659.12" y1="900.7" x2="659.12" y2="993.76" stroke="#cccccc" stroke-width="1.2" stroke-dasharray="4.7 4.5"/>
<line x1="758.16" y1="900.7" x2="758.16" y2="993.76" stroke="#cccccc" stroke-width="1.2" stroke-dasharray="4.7 4.5"/>
<line x1="857.2" y1="900.7" x2="857.2" y2="993.76" stroke="#cccccc" stroke-width="1.2" stroke-dasharray="4.7 4.5"/>
<line x1="956.24" y1="900.7" x2="956.24" y2="993.76" stroke="#cccccc" stroke-width="1.2" stroke-dasharray="4.7 4.5"/>
<line x1="1055.28" y1="900.7" x2="1055.28" y2="993.76" stroke="#cccccc" stroke-width="1.2" stroke-dasharray="4.7 4.5"/>
<line x1="1154.32" y1="900.7" x2="1154.32" y2="993.76" stroke="#cccccc" stroke-width="1.2" stroke-dasharray="4.7 4.5"/>
<line x1="1253.36" y1="900.7" x2="1253.36" y2="993.76" stroke="#cccccc" stroke-width="1.2" stroke-dasharray="4.7 4.5"/>
<line x1="1352.4" y1="900.7" x2="1352.4" y2="993.76" stroke="#cccccc" stroke-width="1.2" stroke-dasharray="4.7 4.5"/>
<line x1="363" y1="1092.82" x2="1353" y2="1092.82" stroke="#cccccc" stroke-width="1.2" stroke-dasharray="4.7 4.5"/>
<line x1="461.04" y1="999.76" x2="461.04" y2="1092.82" stroke="#cccccc" stroke-width="1.2" stroke-dasharray="4.7 4.5"/>
<line x1="560.08" y1="999.76" x2="560.08" y2="1092.82" stroke="#cccccc" stroke-width="1.2" stroke-dasharray="4.7 4.5"/>
<line x1="659.12" y1="999.76" x2="659.12" y2="1092.82" stroke="#cccccc" stroke-width="1.2" stroke-dasharray="4.7 4.5"/>
<line x1="758.16" y1="999.76" x2="758.16" y2="1092.82" stroke="#cccccc" stroke-width="1.2" stroke-dasharray="4.7 4.5"/>
<line x1="857.2" y1="999.76" x2="857.2" y2="1092.82" stroke="#cccccc" stroke-width="1.2" stroke-dasharray="4.7 4.5"/>
<line x1="956.24" y1="999.76" x2="956.24" y2="1092.82" stroke="#cccccc" stroke-width="1.2" stroke-dasharray="4.7 4.5"/>
<line x1="1055.28" y1="999.76" x2="1055.28" y2="1092.82" stroke="#cccccc" stroke-width="1.2" stroke-dasharray="4.7 4.5"/>
<line x1="1154.32" y1="999.76" x2="1154.32" y2="1092.82" stroke="#cccccc" stroke-width="1.2" stroke-dasharray="4.7 4.5"/>
<line x1="1253.36" y1="999.76" x2="1253.36" y2="1092.82" stroke="#cccccc" stroke-width="1.2" stroke-dasharray="4.7 4.5"/>
<line x1="1352.4" y1="999.76" x2="1352.4" y2="1092.82" stroke="#cccccc" stroke-width="1.2" stroke-dasharray="4.7 4.5"/>
<line x1="363" y1="1191.88" x2="1353" y2="1191.88" stroke="#cccccc" stroke-width="1.2" stroke-dasharray="4.7 4.5"/>
<line x1="461.04" y1="1098.82" x2="461.04" y2="1191.88" stroke="#cccccc" stroke-width="1.2" stroke-dasharray="4.7 4.5"/>
<line x1="560.08" y1="1098.82" x2="560.08" y2="1191.88" stroke="#cccccc" stroke-width="1.2" stroke-dasharray="4.7 4.5"/>
<line x1="659.12" y1="1098.82" x2="659.12" y2="1191.88" stroke="#cccccc" stroke-width="1.2" stroke-dasharray="4.7 4.5"/>
<line x1="758.16" y1="1098.82" x2="758.16" y2="1191.88" stroke="#cccccc" stroke-width="1.2" stroke-dasharray="4.7 4.5"/>
<line x1="857.2" y1="1098.82" x2="857.2" y2="1191.88" stroke="#cccccc" stroke-width="1.2" stroke-dasharray="4.7 4.5"/>
<line x1="956.24" y1="1098.82" x2="956.24" y2="1191.88" stroke="#cccccc" stroke-width="1.2" stroke-dasharray="4.7 4.5"/>
<line x1="1055.28" y1="1098.82" x2="1055.28" y2="1191.88" stroke="#cccccc" stroke-width="1.2" stroke-dasharray="4.7 4.5"/>
<line x1="1154.32" y1="1098.82" x2="1154.32" y2="1191.88" stroke="#cccccc" stroke-width="1.2" stroke-dasharray="4.7 4.5"/>
<line x1="1253.36" y1="1098.82" x2="1253.36" y2="1191.88" stroke="#cccccc" stroke-width="1.2" stroke-dasharray="4.7 4.5"/>
<line x1="1352.4" y1="1098.82" x2="1352.4" y2="1191.88" stroke="#cccccc" stroke-width="1.2" stroke-dasharray="4.7 4.5"/>
<line x1="363" y1="1217.98" x2="1353" y2="1217.98" stroke="#cccccc" stroke-width="1.2" stroke-dasharray="4.7 4.5"/>
<line x1="461.04" y1="1223.98" x2="461.04" y2="1312.4" stroke="#cccccc" stroke-width="1.2" stroke-dasharray="4.7 4.5"/>
<line x1="560.08" y1="1223.98" x2="560.08" y2="1312.4" stroke="#cccccc" stroke-width="1.2" stroke-dasharray="4.7 4.5"/>
<line x1="659.12" y1="1223.98" x2="659.12" y2="1312.4" stroke="#cccccc" stroke-width="1.2" stroke-dasharray="4.7 4.5"/>
<line x1="758.16" y1="1223.98" x2="758.16" y2="1312.4" stroke="#cccccc" stroke-width="1.2" stroke-dasharray="4.7 4.5"/>
<line x1="857.2" y1="1223.98" x2="857.2" y2="1312.4" stroke="#cccccc" stroke-width="1.2" stroke-dasharray="4.7 4.5"/>
<line x1="956.24" y1="1223.98" x2="956.24" y2="1312.4" stroke="#cccccc" stroke-width="1.2" stroke-dasharray="4.7 4.5"/>
<line x1="1055.28" y1="1223.98" x2="1055.28" y2="1312.4" stroke="#cccccc" stroke-width="1.2" stroke-dasharray="4.7 4.5"/>
<line x1="1154.32" y1="1223.98" x2="1154.32" y2="1312.4" stroke="#cccccc" stroke-width="1.2" stroke-dasharray="4.7 4.5"/>
<line x1="1253.36" y1="1223.98" x2="1253.36" y2="1312.4" stroke="#cccccc" stroke-width="1.2" stroke-dasharray="4.7 4.5"/>
<line x1="1352.4" y1="1223.98" x2="1352.4" y2="1312.4" stroke="#cccccc" stroke-width="1.2" stroke-dasharray="4.7 4.5"/>
<line x1="280" y1="248.4" x2="360.5" y2="248.4" stroke="#a2a2a2" stroke-width="1.3" />
<text x="288" y="304.3" font-size="12.5" fill="#2a2a2a" font-family='"Liberation Sans","Noto Sans CJK JP",sans-serif' textLength="34.6" lengthAdjust="spacingAndGlyphs" >00078</text>
<line x1="280" y1="347.4" x2="360.5" y2="347.4" stroke="#a2a2a2" stroke-width="1.3" />
<text x="288" y="366.85" font-size="12.5" fill="#2a2a2a" font-family='"Liberation Sans","Noto Sans CJK JP",sans-serif' textLength="34.6" lengthAdjust="spacingAndGlyphs" >00079</text>
<line x1="280" y1="373.3" x2="360.5" y2="373.3" stroke="#a2a2a2" stroke-width="1.3" />
<text x="288" y="429.23" font-size="12.5" fill="#2a2a2a" font-family='"Liberation Sans","Noto Sans CJK JP",sans-serif' textLength="34.6" lengthAdjust="spacingAndGlyphs" >00080</text>
<line x1="280" y1="472.36" x2="360.5" y2="472.36" stroke="#a2a2a2" stroke-width="1.3" />
<text x="288" y="528.29" font-size="12.5" fill="#2a2a2a" font-family='"Liberation Sans","Noto Sans CJK JP",sans-serif' textLength="34.6" lengthAdjust="spacingAndGlyphs" >00081</text>
<line x1="280" y1="571.42" x2="360.5" y2="571.42" stroke="#a2a2a2" stroke-width="1.3" />
<text x="288" y="627.35" font-size="12.5" fill="#2a2a2a" font-family='"Liberation Sans","Noto Sans CJK JP",sans-serif' textLength="34.6" lengthAdjust="spacingAndGlyphs" >00082</text>
<line x1="280" y1="670.48" x2="360.5" y2="670.48" stroke="#a2a2a2" stroke-width="1.3" />
<text x="288" y="689.93" font-size="12.5" fill="#2a2a2a" font-family='"Liberation Sans","Noto Sans CJK JP",sans-serif' textLength="34.6" lengthAdjust="spacingAndGlyphs" >00083</text>
<line x1="280" y1="696.58" x2="360.5" y2="696.58" stroke="#a2a2a2" stroke-width="1.3" />
<text x="288" y="752.51" font-size="12.5" fill="#2a2a2a" font-family='"Liberation Sans","Noto Sans CJK JP",sans-serif' textLength="34.6" lengthAdjust="spacingAndGlyphs" >00084</text>
<line x1="280" y1="795.64" x2="360.5" y2="795.64" stroke="#a2a2a2" stroke-width="1.3" />
<text x="288" y="851.57" font-size="12.5" fill="#2a2a2a" font-family='"Liberation Sans","Noto Sans CJK JP",sans-serif' textLength="34.6" lengthAdjust="spacingAndGlyphs" >00085</text>
<line x1="280" y1="894.7" x2="360.5" y2="894.7" stroke="#a2a2a2" stroke-width="1.3" />
<text x="288" y="950.63" font-size="12.5" fill="#2a2a2a" font-family='"Liberation Sans","Noto Sans CJK JP",sans-serif' textLength="34.6" lengthAdjust="spacingAndGlyphs" >00086</text>
<line x1="280" y1="993.76" x2="360.5" y2="993.76" stroke="#a2a2a2" stroke-width="1.3" />
<text x="288" y="1049.69" font-size="12.5" fill="#2a2a2a" font-family='"Liberation Sans","Noto Sans CJK JP",sans-serif' textLength="34.6" lengthAdjust="spacingAndGlyphs" >00087</text>
<line x1="280" y1="1092.82" x2="360.5" y2="1092.82" stroke="#a2a2a2" stroke-width="1.3" />
<text x="288" y="1148.75" font-size="12.5" fill="#2a2a2a" font-family='"Liberation Sans","Noto Sans CJK JP",sans-serif' textLength="34.6" lengthAdjust="spacingAndGlyphs" >00088</text>
<line x1="280" y1="1191.88" x2="360.5" y2="1191.88" stroke="#a2a2a2" stroke-width="1.3" />
<text x="288" y="1211.33" font-size="12.5" fill="#2a2a2a" font-family='"Liberation Sans","Noto Sans CJK JP",sans-serif' textLength="34.6" lengthAdjust="spacingAndGlyphs" >00089</text>
<line x1="280" y1="1217.98" x2="360.5" y2="1217.98" stroke="#a2a2a2" stroke-width="1.3" />
<text x="288" y="1273.91" font-size="12.5" fill="#2a2a2a" font-family='"Liberation Sans","Noto Sans CJK JP",sans-serif' textLength="34.6" lengthAdjust="spacingAndGlyphs" >00090</text>
<line x1="280" y1="248.4" x2="280" y2="1312.4" stroke="#a2a2a2" stroke-width="1.3" />
<line x1="332.6" y1="248.4" x2="332.6" y2="1312.4" stroke="#a2a2a2" stroke-width="1.3" />
</g>
<rect x="280" y="248.4" width="1131.6" height="15.6" fill="#d6e6fd" />
<line x1="279.4" y1="248.4" x2="1412.2" y2="248.4" stroke="#a2a2a2" stroke-width="1.3" />
<line x1="279.4" y1="264" x2="1412.2" y2="264" stroke="#a2a2a2" stroke-width="1.3" />
<line x1="280" y1="248.4" x2="280" y2="264" stroke="#a2a2a2" stroke-width="1.3" />
<line x1="332.6" y1="248.4" x2="332.6" y2="264" stroke="#a2a2a2" stroke-width="1.3" />
<line x1="361.5" y1="248.4" x2="361.5" y2="264" stroke="#a2a2a2" stroke-width="1.3" />
<line x1="461.04" y1="248.4" x2="461.04" y2="264" stroke="#a2a2a2" stroke-width="1.3" />
<line x1="560.08" y1="248.4" x2="560.08" y2="264" stroke="#a2a2a2" stroke-width="1.3" />
<line x1="659.12" y1="248.4" x2="659.12" y2="264" stroke="#a2a2a2" stroke-width="1.3" />
<line x1="758.16" y1="248.4" x2="758.16" y2="264" stroke="#a2a2a2" stroke-width="1.3" />
<line x1="857.2" y1="248.4" x2="857.2" y2="264" stroke="#a2a2a2" stroke-width="1.3" />
<line x1="956.24" y1="248.4" x2="956.24" y2="264" stroke="#a2a2a2" stroke-width="1.3" />
<line x1="1055.28" y1="248.4" x2="1055.28" y2="264" stroke="#a2a2a2" stroke-width="1.3" />
<line x1="1154.32" y1="248.4" x2="1154.32" y2="264" stroke="#a2a2a2" stroke-width="1.3" />
<line x1="1253.36" y1="248.4" x2="1253.36" y2="264" stroke="#a2a2a2" stroke-width="1.3" />
<line x1="1352.4" y1="248.4" x2="1352.4" y2="264" stroke="#a2a2a2" stroke-width="1.3" />
<line x1="1411.6" y1="248.4" x2="1411.6" y2="264" stroke="#a2a2a2" stroke-width="1.3" />
<text x="412.52" y="261.6" font-size="13.75" fill="#2a2a2a" font-family='"Noto Sans Mono CJK JP","Liberation Mono",monospace' text-anchor="middle" textLength="6.875" lengthAdjust="spacingAndGlyphs" >1</text>
<text x="511.56" y="261.6" font-size="13.75" fill="#2a2a2a" font-family='"Noto Sans Mono CJK JP","Liberation Mono",monospace' text-anchor="middle" textLength="6.875" lengthAdjust="spacingAndGlyphs" >2</text>
<text x="610.6" y="261.6" font-size="13.75" fill="#2a2a2a" font-family='"Noto Sans Mono CJK JP","Liberation Mono",monospace' text-anchor="middle" textLength="6.875" lengthAdjust="spacingAndGlyphs" >3</text>
<text x="709.64" y="261.6" font-size="13.75" fill="#2a2a2a" font-family='"Noto Sans Mono CJK JP","Liberation Mono",monospace' text-anchor="middle" textLength="6.875" lengthAdjust="spacingAndGlyphs" >4</text>
<text x="808.68" y="261.6" font-size="13.75" fill="#2a2a2a" font-family='"Noto Sans Mono CJK JP","Liberation Mono",monospace' text-anchor="middle" textLength="6.875" lengthAdjust="spacingAndGlyphs" >5</text>
<text x="907.72" y="261.6" font-size="13.75" fill="#2a2a2a" font-family='"Noto Sans Mono CJK JP","Liberation Mono",monospace' text-anchor="middle" textLength="6.875" lengthAdjust="spacingAndGlyphs" >6</text>
<text x="1006.76" y="261.6" font-size="13.75" fill="#2a2a2a" font-family='"Noto Sans Mono CJK JP","Liberation Mono",monospace' text-anchor="middle" textLength="6.875" lengthAdjust="spacingAndGlyphs" >7</text>
<text x="1105.8" y="261.6" font-size="13.75" fill="#2a2a2a" font-family='"Noto Sans Mono CJK JP","Liberation Mono",monospace' text-anchor="middle" textLength="6.875" lengthAdjust="spacingAndGlyphs" >8</text>
<text x="1204.84" y="261.6" font-size="13.75" fill="#2a2a2a" font-family='"Noto Sans Mono CJK JP","Liberation Mono",monospace' text-anchor="middle" textLength="6.875" lengthAdjust="spacingAndGlyphs" >9</text>
<text x="1303.88" y="261.6" font-size="13.75" fill="#2a2a2a" font-family='"Noto Sans Mono CJK JP","Liberation Mono",monospace' text-anchor="middle" textLength="13.75" lengthAdjust="spacingAndGlyphs" >10</text>
<rect x="956.84" y="249" width="97.84" height="15.6" fill="#d6e6fd" />
<path d="M956.24,264.6 V248.7 H1055.28" fill="none" stroke="#5e5e5e" stroke-width="1.6"/>
<line x1="957.24" y1="264.2" x2="1054.68" y2="264.2" stroke="#ffffff" stroke-width="1.6" />
<text x="1006.76" y="261.6" font-size="13.75" fill="#2a2a2a" font-family='"Noto Sans Mono CJK JP","Liberation Mono",monospace' text-anchor="middle" textLength="6.875" lengthAdjust="spacingAndGlyphs" >7</text>
<line x1="279.4" y1="1312.4" x2="1412.2" y2="1312.4" stroke="#a8a8a8" stroke-width="1.3" />
<line x1="1411.6" y1="248.4" x2="1411.6" y2="1312.4" stroke="#a8a8a8" stroke-width="1.3" />
<rect x="360.1" y="264.6" width="3" height="1047.2" fill="#000000" />
<line x1="1352.3" y1="264.6" x2="1352.3" y2="1311.8" stroke="#9a9a9a" stroke-width="1" stroke-dasharray="3 3"/>
<rect x="1352.5" y="264.6" width="3.1" height="1047.2" fill="#000000" />
<g clip-path="url(#ladclip)">
<line x1="363" y1="293.5" x2="402.1" y2="293.5" stroke="#1f741f" stroke-width="2" />
<line x1="423.5" y1="293.5" x2="461.04" y2="293.5" stroke="#1f741f" stroke-width="2" />
<line x1="402.1" y1="282.7" x2="402.1" y2="304.3" stroke="#1f741f" stroke-width="2" />
<line x1="423.5" y1="282.7" x2="423.5" y2="304.3" stroke="#1f741f" stroke-width="2" />
<text x="396.012" y="280.4" font-size="13.75" fill="#333" font-family='"Noto Sans Mono CJK JP","Liberation Mono",monospace' textLength="34.375" lengthAdjust="spacingAndGlyphs" >T1766</text>
<text x="372.2" y="329.3" font-size="13.75" fill="#008000" font-family='"IPAGothic","Noto Sans CJK JP",monospace' textLength="13.75" lengthAdjust="spacingAndGlyphs" stroke="#008000" stroke-width="0.35">【</text>
<text x="385.95" y="329.3" font-size="13.75" fill="#008000" font-family='"Noto Sans Mono CJK JP","Liberation Mono",monospace' textLength="13.75" lengthAdjust="spacingAndGlyphs" stroke="#008000" stroke-width="0.35">TM</text>
<text x="399.7" y="329.3" font-size="13.75" fill="#008000" font-family='"IPAGothic","Noto Sans CJK JP",monospace' textLength="55" lengthAdjust="spacingAndGlyphs" stroke="#008000" stroke-width="0.35">】下流側</text>
<text x="372.2" y="343.5" font-size="13.75" fill="#008000" font-family='"Noto Sans Mono CJK JP","Liberation Mono",monospace' textLength="13.75" lengthAdjust="spacingAndGlyphs" stroke="#008000" stroke-width="0.35">CV</text>
<text x="385.95" y="343.5" font-size="13.75" fill="#008000" font-family='"IPAGothic","Noto Sans CJK JP",monospace' textLength="20.625" lengthAdjust="spacingAndGlyphs" stroke="#008000" stroke-width="0.35">部 </text>
<text x="406.575" y="343.5" font-size="13.75" fill="#008000" font-family='"Noto Sans Mono CJK JP","Liberation Mono",monospace' textLength="20.625" lengthAdjust="spacingAndGlyphs" stroke="#008000" stroke-width="0.35">ST9</text>
<text x="427.2" y="343.5" font-size="13.75" fill="#008000" font-family='"IPAGothic","Noto Sans CJK JP",monospace' textLength="13.75" lengthAdjust="spacingAndGlyphs" stroke="#008000" stroke-width="0.35">製</text>
<line x1="461.04" y1="293.5" x2="956.24" y2="293.5" stroke="#333333" stroke-width="1.6" />
<line x1="956.24" y1="264" x2="956.24" y2="294.25" stroke="#333333" stroke-width="1.7" />
<text x="371.5" y="366.2" font-size="15.5" fill="#1a1a1a" font-family='"IPAGothic","Noto Sans CJK JP",monospace' textLength="77.5" lengthAdjust="spacingAndGlyphs" >▼許可条件</text>
<line x1="363" y1="418.4" x2="402.1" y2="418.4" stroke="#1f741f" stroke-width="2" />
<line x1="423.5" y1="418.4" x2="461.04" y2="418.4" stroke="#1f741f" stroke-width="2" />
<line x1="402.1" y1="407.6" x2="402.1" y2="429.2" stroke="#1f741f" stroke-width="2" />
<line x1="423.5" y1="407.6" x2="423.5" y2="429.2" stroke="#1f741f" stroke-width="2" />
<text x="396.012" y="405.3" font-size="13.75" fill="#333" font-family='"Noto Sans Mono CJK JP","Liberation Mono",monospace' textLength="34.375" lengthAdjust="spacingAndGlyphs" >L1015</text>
<text x="372.2" y="454.2" font-size="13.75" fill="#008000" font-family='"IPAGothic","Noto Sans CJK JP",monospace' textLength="82.5" lengthAdjust="spacingAndGlyphs" stroke="#008000" stroke-width="0.35">【干渉外】供</text>
<text x="372.2" y="468.4" font-size="13.75" fill="#008000" font-family='"IPAGothic","Noto Sans CJK JP",monospace' textLength="13.75" lengthAdjust="spacingAndGlyphs" stroke="#008000" stroke-width="0.35">給</text>
<text x="385.95" y="468.4" font-size="13.75" fill="#008000" font-family='"Noto Sans Mono CJK JP","Liberation Mono",monospace' textLength="13.75" lengthAdjust="spacingAndGlyphs" stroke="#008000" stroke-width="0.35">PP</text>
<text x="399.7" y="468.4" font-size="13.75" fill="#008000" font-family='"IPAGothic","Noto Sans CJK JP",monospace' textLength="41.25" lengthAdjust="spacingAndGlyphs" stroke="#008000" stroke-width="0.35">ﾕﾆｯﾄ①</text>
<line x1="461.04" y1="418.4" x2="501.14" y2="418.4" stroke="#1f741f" stroke-width="2" />
<line x1="522.54" y1="418.4" x2="560.08" y2="418.4" stroke="#1f741f" stroke-width="2" />
<line x1="501.14" y1="407.6" x2="501.14" y2="429.2" stroke="#1f741f" stroke-width="2" />
<line x1="522.54" y1="407.6" x2="522.54" y2="429.2" stroke="#1f741f" stroke-width="2" />
<text x="495.053" y="405.3" font-size="13.75" fill="#333" font-family='"Noto Sans Mono CJK JP","Liberation Mono",monospace' textLength="34.375" lengthAdjust="spacingAndGlyphs" >L1016</text>
<text x="471.24" y="454.2" font-size="13.75" fill="#008000" font-family='"IPAGothic","Noto Sans CJK JP",monospace' textLength="82.5" lengthAdjust="spacingAndGlyphs" stroke="#008000" stroke-width="0.35">【干渉外】供</text>
<text x="471.24" y="468.4" font-size="13.75" fill="#008000" font-family='"IPAGothic","Noto Sans CJK JP",monospace' textLength="13.75" lengthAdjust="spacingAndGlyphs" stroke="#008000" stroke-width="0.35">給</text>
<text x="484.99" y="468.4" font-size="13.75" fill="#008000" font-family='"Noto Sans Mono CJK JP","Liberation Mono",monospace' textLength="13.75" lengthAdjust="spacingAndGlyphs" stroke="#008000" stroke-width="0.35">PP</text>
<text x="498.74" y="468.4" font-size="13.75" fill="#008000" font-family='"IPAGothic","Noto Sans CJK JP",monospace' textLength="41.25" lengthAdjust="spacingAndGlyphs" stroke="#008000" stroke-width="0.35">ﾕﾆｯﾄ②</text>
<line x1="560.08" y1="418.4" x2="600.18" y2="418.4" stroke="#1f741f" stroke-width="2" />
<line x1="621.58" y1="418.4" x2="659.12" y2="418.4" stroke="#1f741f" stroke-width="2" />
<line x1="600.18" y1="407.6" x2="600.18" y2="429.2" stroke="#1f741f" stroke-width="2" />
<line x1="621.58" y1="407.6" x2="621.58" y2="429.2" stroke="#1f741f" stroke-width="2" />
<text x="594.092" y="405.3" font-size="13.75" fill="#333" font-family='"Noto Sans Mono CJK JP","Liberation Mono",monospace' textLength="34.375" lengthAdjust="spacingAndGlyphs" >L1017</text>
<text x="570.28" y="454.2" font-size="13.75" fill="#008000" font-family='"IPAGothic","Noto Sans CJK JP",monospace' textLength="82.5" lengthAdjust="spacingAndGlyphs" stroke="#008000" stroke-width="0.35">【干渉外】供</text>
<text x="570.28" y="468.4" font-size="13.75" fill="#008000" font-family='"IPAGothic","Noto Sans CJK JP",monospace' textLength="13.75" lengthAdjust="spacingAndGlyphs" stroke="#008000" stroke-width="0.35">給</text>
<text x="584.03" y="468.4" font-size="13.75" fill="#008000" font-family='"Noto Sans Mono CJK JP","Liberation Mono",monospace' textLength="13.75" lengthAdjust="spacingAndGlyphs" stroke="#008000" stroke-width="0.35">PP</text>
<text x="597.78" y="468.4" font-size="13.75" fill="#008000" font-family='"IPAGothic","Noto Sans CJK JP",monospace' textLength="41.25" lengthAdjust="spacingAndGlyphs" stroke="#008000" stroke-width="0.35">ﾕﾆｯﾄ③</text>
<line x1="659.12" y1="418.4" x2="699.22" y2="418.4" stroke="#1f741f" stroke-width="2" />
<line x1="720.62" y1="418.4" x2="758.16" y2="418.4" stroke="#1f741f" stroke-width="2" />
<line x1="699.22" y1="407.6" x2="699.22" y2="429.2" stroke="#1f741f" stroke-width="2" />
<line x1="720.62" y1="407.6" x2="720.62" y2="429.2" stroke="#1f741f" stroke-width="2" />
<text x="693.132" y="405.3" font-size="13.75" fill="#333" font-family='"Noto Sans Mono CJK JP","Liberation Mono",monospace' textLength="34.375" lengthAdjust="spacingAndGlyphs" >L1515</text>
<text x="669.32" y="454.2" font-size="13.75" fill="#008000" font-family='"IPAGothic","Noto Sans CJK JP",monospace' textLength="68.75" lengthAdjust="spacingAndGlyphs" stroke="#008000" stroke-width="0.35">【干渉外】</text>
<text x="738.07" y="454.2" font-size="13.75" fill="#008000" font-family='"Noto Sans Mono CJK JP","Liberation Mono",monospace' textLength="13.75" lengthAdjust="spacingAndGlyphs" stroke="#008000" stroke-width="0.35">CV</text>
<text x="669.32" y="468.4" font-size="13.75" fill="#008000" font-family='"IPAGothic","Noto Sans CJK JP",monospace' textLength="27.5" lengthAdjust="spacingAndGlyphs" stroke="#008000" stroke-width="0.35">移載</text>
<text x="696.82" y="468.4" font-size="13.75" fill="#008000" font-family='"Noto Sans Mono CJK JP","Liberation Mono",monospace' textLength="13.75" lengthAdjust="spacingAndGlyphs" stroke="#008000" stroke-width="0.35">PP</text>
<text x="710.57" y="468.4" font-size="13.75" fill="#008000" font-family='"IPAGothic","Noto Sans CJK JP",monospace' textLength="27.5" lengthAdjust="spacingAndGlyphs" stroke="#008000" stroke-width="0.35">ﾕﾆｯﾄ</text>
<line x1="758.16" y1="418.4" x2="798.26" y2="418.4" stroke="#1f741f" stroke-width="2" />
<line x1="819.66" y1="418.4" x2="857.2" y2="418.4" stroke="#1f741f" stroke-width="2" />
<line x1="798.26" y1="407.6" x2="798.26" y2="429.2" stroke="#1f741f" stroke-width="2" />
<line x1="819.66" y1="407.6" x2="819.66" y2="429.2" stroke="#1f741f" stroke-width="2" />
<text x="792.173" y="405.3" font-size="13.75" fill="#333" font-family='"Noto Sans Mono CJK JP","Liberation Mono",monospace' textLength="34.375" lengthAdjust="spacingAndGlyphs" >L1516</text>
<text x="768.36" y="454.2" font-size="13.75" fill="#008000" font-family='"IPAGothic","Noto Sans CJK JP",monospace' textLength="68.75" lengthAdjust="spacingAndGlyphs" stroke="#008000" stroke-width="0.35">【干渉外】</text>
<text x="837.11" y="454.2" font-size="13.75" fill="#008000" font-family='"Noto Sans Mono CJK JP","Liberation Mono",monospace' textLength="13.75" lengthAdjust="spacingAndGlyphs" stroke="#008000" stroke-width="0.35">CV</text>
<text x="768.36" y="468.4" font-size="13.75" fill="#008000" font-family='"IPAGothic","Noto Sans CJK JP",monospace' textLength="27.5" lengthAdjust="spacingAndGlyphs" stroke="#008000" stroke-width="0.35">移載</text>
<text x="795.86" y="468.4" font-size="13.75" fill="#008000" font-family='"Noto Sans Mono CJK JP","Liberation Mono",monospace' textLength="13.75" lengthAdjust="spacingAndGlyphs" stroke="#008000" stroke-width="0.35">PP</text>
<text x="809.61" y="468.4" font-size="13.75" fill="#008000" font-family='"IPAGothic","Noto Sans CJK JP",monospace' textLength="27.5" lengthAdjust="spacingAndGlyphs" stroke="#008000" stroke-width="0.35">ﾕﾆｯﾄ</text>
<line x1="857.2" y1="418.4" x2="897.3" y2="418.4" stroke="#1f741f" stroke-width="2" />
<line x1="918.7" y1="418.4" x2="956.24" y2="418.4" stroke="#1f741f" stroke-width="2" />
<line x1="897.3" y1="407.6" x2="897.3" y2="429.2" stroke="#1f741f" stroke-width="2" />
<line x1="918.7" y1="407.6" x2="918.7" y2="429.2" stroke="#1f741f" stroke-width="2" />
<text x="891.212" y="405.3" font-size="13.75" fill="#333" font-family='"Noto Sans Mono CJK JP","Liberation Mono",monospace' textLength="34.375" lengthAdjust="spacingAndGlyphs" >L2515</text>
<text x="867.4" y="454.2" font-size="13.75" fill="#008000" font-family='"IPAGothic","Noto Sans CJK JP",monospace' textLength="82.5" lengthAdjust="spacingAndGlyphs" stroke="#008000" stroke-width="0.35">【干渉外】良</text>
<text x="867.4" y="468.4" font-size="13.75" fill="#008000" font-family='"IPAGothic","Noto Sans CJK JP",monospace' textLength="82.5" lengthAdjust="spacingAndGlyphs" stroke="#008000" stroke-width="0.35">品移載部→下</text>
<line x1="956.24" y1="418.4" x2="1253.36" y2="418.4" stroke="#333333" stroke-width="1.6" />
<line x1="1253.36" y1="418.4" x2="1292.66" y2="418.4" stroke="#1f741f" stroke-width="2" />
<line x1="1313.06" y1="418.4" x2="1352.4" y2="418.4" stroke="#1f741f" stroke-width="2" />
<polygon points="1298.64,408.2 1307.08,408.2 1313.06,414.175 1313.06,422.625 1307.08,428.6 1298.64,428.6 1292.66,422.625 1292.66,414.175" fill="#fff" stroke="#1f741f" stroke-width="1.7"/>
<text x="1286.07" y="405.3" font-size="13.75" fill="#333" font-family='"Noto Sans Mono CJK JP","Liberation Mono",monospace' textLength="34.375" lengthAdjust="spacingAndGlyphs" >L2090</text>
<text x="1263.56" y="454.2" font-size="13.75" fill="#008000" font-family='"IPAGothic","Noto Sans CJK JP",monospace' textLength="41.25" lengthAdjust="spacingAndGlyphs" stroke="#008000" stroke-width="0.35">上下流</text>
<text x="1304.81" y="454.2" font-size="13.75" fill="#008000" font-family='"Noto Sans Mono CJK JP","Liberation Mono",monospace' textLength="20.625" lengthAdjust="spacingAndGlyphs" stroke="#008000" stroke-width="0.35">CV_</text>
<text x="1325.44" y="454.2" font-size="13.75" fill="#008000" font-family='"IPAGothic","Noto Sans CJK JP",monospace' textLength="13.75" lengthAdjust="spacingAndGlyphs" stroke="#008000" stroke-width="0.35">回</text>
<text x="1263.56" y="468.4" font-size="13.75" fill="#008000" font-family='"IPAGothic","Noto Sans CJK JP",monospace' textLength="68.75" lengthAdjust="spacingAndGlyphs" stroke="#008000" stroke-width="0.35">転絶対条件</text>
<line x1="363" y1="517.46" x2="402.1" y2="517.46" stroke="#1f741f" stroke-width="2" />
<line x1="423.5" y1="517.46" x2="461.04" y2="517.46" stroke="#1f741f" stroke-width="2" />
<line x1="402.1" y1="506.66" x2="402.1" y2="528.26" stroke="#1f741f" stroke-width="2" />
<line x1="423.5" y1="506.66" x2="423.5" y2="528.26" stroke="#1f741f" stroke-width="2" />
<text x="392.575" y="504.36" font-size="13.75" fill="#333" font-family='"Noto Sans Mono CJK JP","Liberation Mono",monospace' textLength="41.25" lengthAdjust="spacingAndGlyphs" >CR2002</text>
<text x="372.2" y="553.26" font-size="13.75" fill="#008000" font-family='"IPAGothic","Noto Sans CJK JP",monospace' textLength="27.5" lengthAdjust="spacingAndGlyphs" stroke="#008000" stroke-width="0.35">常時</text>
<text x="399.7" y="553.26" font-size="13.75" fill="#008000" font-family='"Noto Sans Mono CJK JP","Liberation Mono",monospace' textLength="13.75" lengthAdjust="spacingAndGlyphs" stroke="#008000" stroke-width="0.35">ON</text>
<line x1="461.04" y1="517.46" x2="501.14" y2="517.46" stroke="#1f741f" stroke-width="2" />
<line x1="522.54" y1="517.46" x2="560.08" y2="517.46" stroke="#1f741f" stroke-width="2" />
<line x1="501.14" y1="506.66" x2="501.14" y2="528.26" stroke="#1f741f" stroke-width="2" />
<line x1="522.54" y1="506.66" x2="522.54" y2="528.26" stroke="#1f741f" stroke-width="2" />
<text x="495.053" y="504.36" font-size="13.75" fill="#333" font-family='"Noto Sans Mono CJK JP","Liberation Mono",monospace' textLength="34.375" lengthAdjust="spacingAndGlyphs" >L1015</text>
<text x="471.24" y="553.26" font-size="13.75" fill="#008000" font-family='"IPAGothic","Noto Sans CJK JP",monospace' textLength="82.5" lengthAdjust="spacingAndGlyphs" stroke="#008000" stroke-width="0.35">【干渉外】供</text>
<text x="471.24" y="567.46" font-size="13.75" fill="#008000" font-family='"IPAGothic","Noto Sans CJK JP",monospace' textLength="13.75" lengthAdjust="spacingAndGlyphs" stroke="#008000" stroke-width="0.35">給</text>
<text x="484.99" y="567.46" font-size="13.75" fill="#008000" font-family='"Noto Sans Mono CJK JP","Liberation Mono",monospace' textLength="13.75" lengthAdjust="spacingAndGlyphs" stroke="#008000" stroke-width="0.35">PP</text>
<text x="498.74" y="567.46" font-size="13.75" fill="#008000" font-family='"IPAGothic","Noto Sans CJK JP",monospace' textLength="41.25" lengthAdjust="spacingAndGlyphs" stroke="#008000" stroke-width="0.35">ﾕﾆｯﾄ①</text>
<line x1="560.08" y1="517.46" x2="600.18" y2="517.46" stroke="#1f741f" stroke-width="2" />
<line x1="621.58" y1="517.46" x2="659.12" y2="517.46" stroke="#1f741f" stroke-width="2" />
<line x1="600.18" y1="506.66" x2="600.18" y2="528.26" stroke="#1f741f" stroke-width="2" />
<line x1="621.58" y1="506.66" x2="621.58" y2="528.26" stroke="#1f741f" stroke-width="2" />
<text x="594.092" y="504.36" font-size="13.75" fill="#333" font-family='"Noto Sans Mono CJK JP","Liberation Mono",monospace' textLength="34.375" lengthAdjust="spacingAndGlyphs" >L1016</text>
<text x="570.28" y="553.26" font-size="13.75" fill="#008000" font-family='"IPAGothic","Noto Sans CJK JP",monospace' textLength="82.5" lengthAdjust="spacingAndGlyphs" stroke="#008000" stroke-width="0.35">【干渉外】供</text>
<text x="570.28" y="567.46" font-size="13.75" fill="#008000" font-family='"IPAGothic","Noto Sans CJK JP",monospace' textLength="13.75" lengthAdjust="spacingAndGlyphs" stroke="#008000" stroke-width="0.35">給</text>
<text x="584.03" y="567.46" font-size="13.75" fill="#008000" font-family='"Noto Sans Mono CJK JP","Liberation Mono",monospace' textLength="13.75" lengthAdjust="spacingAndGlyphs" stroke="#008000" stroke-width="0.35">PP</text>
<text x="597.78" y="567.46" font-size="13.75" fill="#008000" font-family='"IPAGothic","Noto Sans CJK JP",monospace' textLength="41.25" lengthAdjust="spacingAndGlyphs" stroke="#008000" stroke-width="0.35">ﾕﾆｯﾄ②</text>
<line x1="659.12" y1="517.46" x2="699.22" y2="517.46" stroke="#1f741f" stroke-width="2" />
<line x1="720.62" y1="517.46" x2="758.16" y2="517.46" stroke="#1f741f" stroke-width="2" />
<line x1="699.22" y1="506.66" x2="699.22" y2="528.26" stroke="#1f741f" stroke-width="2" />
<line x1="720.62" y1="506.66" x2="720.62" y2="528.26" stroke="#1f741f" stroke-width="2" />
<text x="693.132" y="504.36" font-size="13.75" fill="#333" font-family='"Noto Sans Mono CJK JP","Liberation Mono",monospace' textLength="34.375" lengthAdjust="spacingAndGlyphs" >L1017</text>
<text x="669.32" y="553.26" font-size="13.75" fill="#008000" font-family='"IPAGothic","Noto Sans CJK JP",monospace' textLength="82.5" lengthAdjust="spacingAndGlyphs" stroke="#008000" stroke-width="0.35">【干渉外】供</text>
<text x="669.32" y="567.46" font-size="13.75" fill="#008000" font-family='"IPAGothic","Noto Sans CJK JP",monospace' textLength="13.75" lengthAdjust="spacingAndGlyphs" stroke="#008000" stroke-width="0.35">給</text>
<text x="683.07" y="567.46" font-size="13.75" fill="#008000" font-family='"Noto Sans Mono CJK JP","Liberation Mono",monospace' textLength="13.75" lengthAdjust="spacingAndGlyphs" stroke="#008000" stroke-width="0.35">PP</text>
<text x="696.82" y="567.46" font-size="13.75" fill="#008000" font-family='"IPAGothic","Noto Sans CJK JP",monospace' textLength="41.25" lengthAdjust="spacingAndGlyphs" stroke="#008000" stroke-width="0.35">ﾕﾆｯﾄ③</text>
<line x1="758.16" y1="517.46" x2="798.26" y2="517.46" stroke="#1f741f" stroke-width="2" />
<line x1="819.66" y1="517.46" x2="857.2" y2="517.46" stroke="#1f741f" stroke-width="2" />
<line x1="798.26" y1="506.66" x2="798.26" y2="528.26" stroke="#1f741f" stroke-width="2" />
<line x1="819.66" y1="506.66" x2="819.66" y2="528.26" stroke="#1f741f" stroke-width="2" />
<text x="792.173" y="504.36" font-size="13.75" fill="#333" font-family='"Noto Sans Mono CJK JP","Liberation Mono",monospace' textLength="34.375" lengthAdjust="spacingAndGlyphs" >L1515</text>
<text x="768.36" y="553.26" font-size="13.75" fill="#008000" font-family='"IPAGothic","Noto Sans CJK JP",monospace' textLength="68.75" lengthAdjust="spacingAndGlyphs" stroke="#008000" stroke-width="0.35">【干渉外】</text>
<text x="837.11" y="553.26" font-size="13.75" fill="#008000" font-family='"Noto Sans Mono CJK JP","Liberation Mono",monospace' textLength="13.75" lengthAdjust="spacingAndGlyphs" stroke="#008000" stroke-width="0.35">CV</text>
<text x="768.36" y="567.46" font-size="13.75" fill="#008000" font-family='"IPAGothic","Noto Sans CJK JP",monospace' textLength="27.5" lengthAdjust="spacingAndGlyphs" stroke="#008000" stroke-width="0.35">移載</text>
<text x="795.86" y="567.46" font-size="13.75" fill="#008000" font-family='"Noto Sans Mono CJK JP","Liberation Mono",monospace' textLength="13.75" lengthAdjust="spacingAndGlyphs" stroke="#008000" stroke-width="0.35">PP</text>
<text x="809.61" y="567.46" font-size="13.75" fill="#008000" font-family='"IPAGothic","Noto Sans CJK JP",monospace' textLength="27.5" lengthAdjust="spacingAndGlyphs" stroke="#008000" stroke-width="0.35">ﾕﾆｯﾄ</text>
<line x1="857.2" y1="517.46" x2="1253.36" y2="517.46" stroke="#333333" stroke-width="1.6" />
<line x1="1253.36" y1="517.46" x2="1292.66" y2="517.46" stroke="#1f741f" stroke-width="2" />
<line x1="1313.06" y1="517.46" x2="1352.4" y2="517.46" stroke="#1f741f" stroke-width="2" />
<polygon points="1298.64,507.26 1307.08,507.26 1313.06,513.235 1313.06,521.685 1307.08,527.66 1298.64,527.66 1292.66,521.685 1292.66,513.235" fill="#fff" stroke="#1f741f" stroke-width="1.7"/>
<text x="1286.07" y="504.36" font-size="13.75" fill="#333" font-family='"Noto Sans Mono CJK JP","Liberation Mono",monospace' textLength="34.375" lengthAdjust="spacingAndGlyphs" >L2091</text>
<text x="1263.56" y="553.26" font-size="13.75" fill="#008000" font-family='"IPAGothic","Noto Sans CJK JP",monospace' textLength="41.25" lengthAdjust="spacingAndGlyphs" stroke="#008000" stroke-width="0.35">上流側</text>
<text x="1304.81" y="553.26" font-size="13.75" fill="#008000" font-family='"Noto Sans Mono CJK JP","Liberation Mono",monospace' textLength="20.625" lengthAdjust="spacingAndGlyphs" stroke="#008000" stroke-width="0.35">CV_</text>
<text x="1325.44" y="553.26" font-size="13.75" fill="#008000" font-family='"IPAGothic","Noto Sans CJK JP",monospace' textLength="13.75" lengthAdjust="spacingAndGlyphs" stroke="#008000" stroke-width="0.35">回</text>
<text x="1263.56" y="567.46" font-size="13.75" fill="#008000" font-family='"IPAGothic","Noto Sans CJK JP",monospace' textLength="68.75" lengthAdjust="spacingAndGlyphs" stroke="#008000" stroke-width="0.35">転絶対条件</text>
<line x1="461.04" y1="517.46" x2="461.04" y2="617.27" stroke="#333333" stroke-width="1.7" />
<line x1="461.04" y1="616.52" x2="501.14" y2="616.52" stroke="#1f741f" stroke-width="2" />
<line x1="522.54" y1="616.52" x2="560.08" y2="616.52" stroke="#1f741f" stroke-width="2" />
<line x1="501.14" y1="605.72" x2="501.14" y2="627.32" stroke="#1f741f" stroke-width="2" />
<line x1="522.54" y1="605.72" x2="522.54" y2="627.32" stroke="#1f741f" stroke-width="2" />
<text x="495.053" y="603.42" font-size="13.75" fill="#333" font-family='"Noto Sans Mono CJK JP","Liberation Mono",monospace' textLength="34.375" lengthAdjust="spacingAndGlyphs" >L1516</text>
<text x="471.24" y="652.32" font-size="13.75" fill="#008000" font-family='"IPAGothic","Noto Sans CJK JP",monospace' textLength="68.75" lengthAdjust="spacingAndGlyphs" stroke="#008000" stroke-width="0.35">【干渉外】</text>
<text x="539.99" y="652.32" font-size="13.75" fill="#008000" font-family='"Noto Sans Mono CJK JP","Liberation Mono",monospace' textLength="13.75" lengthAdjust="spacingAndGlyphs" stroke="#008000" stroke-width="0.35">CV</text>
<text x="471.24" y="666.52" font-size="13.75" fill="#008000" font-family='"IPAGothic","Noto Sans CJK JP",monospace' textLength="27.5" lengthAdjust="spacingAndGlyphs" stroke="#008000" stroke-width="0.35">移載</text>
<text x="498.74" y="666.52" font-size="13.75" fill="#008000" font-family='"Noto Sans Mono CJK JP","Liberation Mono",monospace' textLength="13.75" lengthAdjust="spacingAndGlyphs" stroke="#008000" stroke-width="0.35">PP</text>
<text x="512.49" y="666.52" font-size="13.75" fill="#008000" font-family='"IPAGothic","Noto Sans CJK JP",monospace' textLength="27.5" lengthAdjust="spacingAndGlyphs" stroke="#008000" stroke-width="0.35">ﾕﾆｯﾄ</text>
<line x1="560.08" y1="616.52" x2="600.18" y2="616.52" stroke="#1f741f" stroke-width="2" />
<line x1="621.58" y1="616.52" x2="659.12" y2="616.52" stroke="#1f741f" stroke-width="2" />
<line x1="600.18" y1="605.72" x2="600.18" y2="627.32" stroke="#1f741f" stroke-width="2" />
<line x1="621.58" y1="605.72" x2="621.58" y2="627.32" stroke="#1f741f" stroke-width="2" />
<text x="594.092" y="603.42" font-size="13.75" fill="#333" font-family='"Noto Sans Mono CJK JP","Liberation Mono",monospace' textLength="34.375" lengthAdjust="spacingAndGlyphs" >L2515</text>
<text x="570.28" y="652.32" font-size="13.75" fill="#008000" font-family='"IPAGothic","Noto Sans CJK JP",monospace' textLength="82.5" lengthAdjust="spacingAndGlyphs" stroke="#008000" stroke-width="0.35">【干渉外】良</text>
<text x="570.28" y="666.52" font-size="13.75" fill="#008000" font-family='"IPAGothic","Noto Sans CJK JP",monospace' textLength="82.5" lengthAdjust="spacingAndGlyphs" stroke="#008000" stroke-width="0.35">品移載部→下</text>
<line x1="659.12" y1="616.52" x2="1253.36" y2="616.52" stroke="#333333" stroke-width="1.6" />
<line x1="1253.36" y1="616.52" x2="1292.66" y2="616.52" stroke="#1f741f" stroke-width="2" />
<line x1="1313.06" y1="616.52" x2="1352.4" y2="616.52" stroke="#1f741f" stroke-width="2" />
<polygon points="1298.64,606.32 1307.08,606.32 1313.06,612.295 1313.06,620.745 1307.08,626.72 1298.64,626.72 1292.66,620.745 1292.66,612.295" fill="#fff" stroke="#1f741f" stroke-width="1.7"/>
<text x="1286.07" y="603.42" font-size="13.75" fill="#333" font-family='"Noto Sans Mono CJK JP","Liberation Mono",monospace' textLength="34.375" lengthAdjust="spacingAndGlyphs" >L2092</text>
<text x="1263.56" y="652.32" font-size="13.75" fill="#008000" font-family='"IPAGothic","Noto Sans CJK JP",monospace' textLength="41.25" lengthAdjust="spacingAndGlyphs" stroke="#008000" stroke-width="0.35">下流側</text>
<text x="1304.81" y="652.32" font-size="13.75" fill="#008000" font-family='"Noto Sans Mono CJK JP","Liberation Mono",monospace' textLength="20.625" lengthAdjust="spacingAndGlyphs" stroke="#008000" stroke-width="0.35">CV_</text>
<text x="1325.44" y="652.32" font-size="13.75" fill="#008000" font-family='"IPAGothic","Noto Sans CJK JP",monospace' textLength="13.75" lengthAdjust="spacingAndGlyphs" stroke="#008000" stroke-width="0.35">回</text>
<text x="1263.56" y="666.52" font-size="13.75" fill="#008000" font-family='"IPAGothic","Noto Sans CJK JP",monospace' textLength="68.75" lengthAdjust="spacingAndGlyphs" stroke="#008000" stroke-width="0.35">転絶対条件</text>
<text x="370" y="689.28" font-size="15.5" fill="#1a1a1a" font-family='"Noto Sans Mono CJK JP","Liberation Mono",monospace' textLength="23.25" lengthAdjust="spacingAndGlyphs" >U3_</text>
<text x="393.25" y="689.28" font-size="15.5" fill="#1a1a1a" font-family='"IPAGothic","Noto Sans CJK JP",monospace' textLength="15.5" lengthAdjust="spacingAndGlyphs" >上</text>
<text x="408.75" y="689.28" font-size="15.5" fill="#1a1a1a" font-family='"Noto Sans Mono CJK JP","Liberation Mono",monospace' textLength="7.75" lengthAdjust="spacingAndGlyphs" >/</text>
<text x="416.5" y="689.28" font-size="15.5" fill="#1a1a1a" font-family='"IPAGothic","Noto Sans CJK JP",monospace' textLength="31" lengthAdjust="spacingAndGlyphs" >下流</text>
<text x="447.5" y="689.28" font-size="15.5" fill="#1a1a1a" font-family='"Noto Sans Mono CJK JP","Liberation Mono",monospace' textLength="15.5" lengthAdjust="spacingAndGlyphs" >CV</text>
<text x="463" y="689.28" font-size="15.5" fill="#1a1a1a" font-family='"IPAGothic","Noto Sans CJK JP",monospace' textLength="139.5" lengthAdjust="spacingAndGlyphs" >部制御【原点条件】</text>
<line x1="363" y1="741.68" x2="402.1" y2="741.68" stroke="#1f741f" stroke-width="2" />
<line x1="423.5" y1="741.68" x2="461.04" y2="741.68" stroke="#1f741f" stroke-width="2" />
<line x1="402.1" y1="730.88" x2="402.1" y2="752.48" stroke="#1f741f" stroke-width="2" />
<line x1="423.5" y1="730.88" x2="423.5" y2="752.48" stroke="#1f741f" stroke-width="2" />
<text x="392.575" y="728.58" font-size="13.75" fill="#333" font-family='"Noto Sans Mono CJK JP","Liberation Mono",monospace' textLength="41.25" lengthAdjust="spacingAndGlyphs" >CR2002</text>
<text x="372.2" y="777.48" font-size="13.75" fill="#008000" font-family='"IPAGothic","Noto Sans CJK JP",monospace' textLength="27.5" lengthAdjust="spacingAndGlyphs" stroke="#008000" stroke-width="0.35">常時</text>
<text x="399.7" y="777.48" font-size="13.75" fill="#008000" font-family='"Noto Sans Mono CJK JP","Liberation Mono",monospace' textLength="13.75" lengthAdjust="spacingAndGlyphs" stroke="#008000" stroke-width="0.35">ON</text>
<line x1="461.04" y1="741.68" x2="501.14" y2="741.68" stroke="#1f741f" stroke-width="2" />
<line x1="522.54" y1="741.68" x2="560.08" y2="741.68" stroke="#1f741f" stroke-width="2" />
<line x1="501.14" y1="730.88" x2="501.14" y2="752.48" stroke="#1f741f" stroke-width="2" />
<line x1="522.54" y1="730.88" x2="522.54" y2="752.48" stroke="#1f741f" stroke-width="2" />
<text x="495.053" y="728.58" font-size="13.75" fill="#333" font-family='"Noto Sans Mono CJK JP","Liberation Mono",monospace' textLength="34.375" lengthAdjust="spacingAndGlyphs" >L2021</text>
<text x="471.24" y="777.48" font-size="13.75" fill="#008000" font-family='"IPAGothic","Noto Sans CJK JP",monospace' textLength="82.5" lengthAdjust="spacingAndGlyphs" stroke="#008000" stroke-width="0.35">【原点条件】</text>
<text x="471.24" y="791.68" font-size="13.75" fill="#008000" font-family='"IPAGothic","Noto Sans CJK JP",monospace' textLength="41.25" lengthAdjust="spacingAndGlyphs" stroke="#008000" stroke-width="0.35">上流側</text>
<text x="512.49" y="791.68" font-size="13.75" fill="#008000" font-family='"Noto Sans Mono CJK JP","Liberation Mono",monospace' textLength="13.75" lengthAdjust="spacingAndGlyphs" stroke="#008000" stroke-width="0.35">CV</text>
<text x="526.24" y="791.68" font-size="13.75" fill="#008000" font-family='"IPAGothic","Noto Sans CJK JP",monospace' textLength="13.75" lengthAdjust="spacingAndGlyphs" stroke="#008000" stroke-width="0.35">部</text>
<text x="539.99" y="791.68" font-size="13.75" fill="#008000" font-family='"Noto Sans Mono CJK JP","Liberation Mono",monospace' textLength="6.875" lengthAdjust="spacingAndGlyphs" stroke="#008000" stroke-width="0.35">_</text>
<line x1="560.08" y1="741.68" x2="600.18" y2="741.68" stroke="#1f741f" stroke-width="2" />
<line x1="621.58" y1="741.68" x2="659.12" y2="741.68" stroke="#1f741f" stroke-width="2" />
<line x1="600.18" y1="730.88" x2="600.18" y2="752.48" stroke="#1f741f" stroke-width="2" />
<line x1="621.58" y1="730.88" x2="621.58" y2="752.48" stroke="#1f741f" stroke-width="2" />
<text x="594.092" y="728.58" font-size="13.75" fill="#333" font-family='"Noto Sans Mono CJK JP","Liberation Mono",monospace' textLength="34.375" lengthAdjust="spacingAndGlyphs" >L2022</text>
<text x="570.28" y="777.48" font-size="13.75" fill="#008000" font-family='"IPAGothic","Noto Sans CJK JP",monospace' textLength="82.5" lengthAdjust="spacingAndGlyphs" stroke="#008000" stroke-width="0.35">【原点条件】</text>
<text x="570.28" y="791.68" font-size="13.75" fill="#008000" font-family='"IPAGothic","Noto Sans CJK JP",monospace' textLength="41.25" lengthAdjust="spacingAndGlyphs" stroke="#008000" stroke-width="0.35">下流側</text>
<text x="611.53" y="791.68" font-size="13.75" fill="#008000" font-family='"Noto Sans Mono CJK JP","Liberation Mono",monospace' textLength="13.75" lengthAdjust="spacingAndGlyphs" stroke="#008000" stroke-width="0.35">CV</text>
<text x="625.28" y="791.68" font-size="13.75" fill="#008000" font-family='"IPAGothic","Noto Sans CJK JP",monospace' textLength="13.75" lengthAdjust="spacingAndGlyphs" stroke="#008000" stroke-width="0.35">部</text>
<text x="639.03" y="791.68" font-size="13.75" fill="#008000" font-family='"Noto Sans Mono CJK JP","Liberation Mono",monospace' textLength="6.875" lengthAdjust="spacingAndGlyphs" stroke="#008000" stroke-width="0.35">_</text>
<line x1="659.12" y1="741.68" x2="699.22" y2="741.68" stroke="#1f741f" stroke-width="2" />
<line x1="720.62" y1="741.68" x2="758.16" y2="741.68" stroke="#1f741f" stroke-width="2" />
<line x1="699.22" y1="730.88" x2="699.22" y2="752.48" stroke="#1f741f" stroke-width="2" />
<line x1="720.62" y1="730.88" x2="720.62" y2="752.48" stroke="#1f741f" stroke-width="2" />
<text x="693.132" y="728.58" font-size="13.75" fill="#333" font-family='"Noto Sans Mono CJK JP","Liberation Mono",monospace' textLength="34.375" lengthAdjust="spacingAndGlyphs" >L2023</text>
<text x="669.32" y="777.48" font-size="13.75" fill="#008000" font-family='"IPAGothic","Noto Sans CJK JP",monospace' textLength="82.5" lengthAdjust="spacingAndGlyphs" stroke="#008000" stroke-width="0.35">【原点条件】</text>
<text x="669.32" y="791.68" font-size="13.75" fill="#008000" font-family='"Noto Sans Mono CJK JP","Liberation Mono",monospace' textLength="13.75" lengthAdjust="spacingAndGlyphs" stroke="#008000" stroke-width="0.35">NG</text>
<text x="683.07" y="791.68" font-size="13.75" fill="#008000" font-family='"IPAGothic","Noto Sans CJK JP",monospace' textLength="27.5" lengthAdjust="spacingAndGlyphs" stroke="#008000" stroke-width="0.35">排出</text>
<text x="710.57" y="791.68" font-size="13.75" fill="#008000" font-family='"Noto Sans Mono CJK JP","Liberation Mono",monospace' textLength="13.75" lengthAdjust="spacingAndGlyphs" stroke="#008000" stroke-width="0.35">PP</text>
<text x="724.32" y="791.68" font-size="13.75" fill="#008000" font-family='"IPAGothic","Noto Sans CJK JP",monospace' textLength="20.625" lengthAdjust="spacingAndGlyphs" stroke="#008000" stroke-width="0.35">ﾕﾆｯ</text>
<line x1="758.16" y1="741.68" x2="1253.36" y2="741.68" stroke="#333333" stroke-width="1.6" />
<line x1="1253.36" y1="741.68" x2="1292.66" y2="741.68" stroke="#1f741f" stroke-width="2" />
<line x1="1313.06" y1="741.68" x2="1352.4" y2="741.68" stroke="#1f741f" stroke-width="2" />
<polygon points="1298.64,731.48 1307.08,731.48 1313.06,737.455 1313.06,745.905 1307.08,751.88 1298.64,751.88 1292.66,745.905 1292.66,737.455" fill="#fff" stroke="#1f741f" stroke-width="1.7"/>
<text x="1286.07" y="728.58" font-size="13.75" fill="#333" font-family='"Noto Sans Mono CJK JP","Liberation Mono",monospace' textLength="34.375" lengthAdjust="spacingAndGlyphs" >L2020</text>
<text x="1263.56" y="777.48" font-size="13.75" fill="#008000" font-family='"IPAGothic","Noto Sans CJK JP",monospace' textLength="82.5" lengthAdjust="spacingAndGlyphs" stroke="#008000" stroke-width="0.35">【原点条件】</text>
<text x="1263.56" y="791.68" font-size="13.75" fill="#008000" font-family='"IPAGothic","Noto Sans CJK JP",monospace' textLength="13.75" lengthAdjust="spacingAndGlyphs" stroke="#008000" stroke-width="0.35">上</text>
<text x="1277.31" y="791.68" font-size="13.75" fill="#008000" font-family='"Noto Sans Mono CJK JP","Liberation Mono",monospace' textLength="6.875" lengthAdjust="spacingAndGlyphs" stroke="#008000" stroke-width="0.35">/</text>
<text x="1284.19" y="791.68" font-size="13.75" fill="#008000" font-family='"IPAGothic","Noto Sans CJK JP",monospace' textLength="27.5" lengthAdjust="spacingAndGlyphs" stroke="#008000" stroke-width="0.35">下流</text>
<text x="1311.69" y="791.68" font-size="13.75" fill="#008000" font-family='"Noto Sans Mono CJK JP","Liberation Mono",monospace' textLength="13.75" lengthAdjust="spacingAndGlyphs" stroke="#008000" stroke-width="0.35">CV</text>
<text x="1325.44" y="791.68" font-size="13.75" fill="#008000" font-family='"IPAGothic","Noto Sans CJK JP",monospace' textLength="13.75" lengthAdjust="spacingAndGlyphs" stroke="#008000" stroke-width="0.35">部</text>
<text x="1339.19" y="791.68" font-size="13.75" fill="#008000" font-family='"Noto Sans Mono CJK JP","Liberation Mono",monospace' textLength="6.875" lengthAdjust="spacingAndGlyphs" stroke="#008000" stroke-width="0.35">_</text>
<line x1="461.04" y1="741.68" x2="461.04" y2="841.49" stroke="#333333" stroke-width="1.7" />
<line x1="461.04" y1="840.74" x2="501.14" y2="840.74" stroke="#1f741f" stroke-width="2" />
<line x1="522.54" y1="840.74" x2="560.08" y2="840.74" stroke="#1f741f" stroke-width="2" />
<line x1="501.14" y1="829.94" x2="501.14" y2="851.54" stroke="#1f741f" stroke-width="2" />
<line x1="522.54" y1="829.94" x2="522.54" y2="851.54" stroke="#1f741f" stroke-width="2" />
<text x="491.615" y="827.64" font-size="13.75" fill="#333" font-family='"Noto Sans Mono CJK JP","Liberation Mono",monospace' textLength="41.25" lengthAdjust="spacingAndGlyphs" >CR2002</text>
<text x="471.24" y="876.54" font-size="13.75" fill="#008000" font-family='"IPAGothic","Noto Sans CJK JP",monospace' textLength="27.5" lengthAdjust="spacingAndGlyphs" stroke="#008000" stroke-width="0.35">常時</text>
<text x="498.74" y="876.54" font-size="13.75" fill="#008000" font-family='"Noto Sans Mono CJK JP","Liberation Mono",monospace' textLength="13.75" lengthAdjust="spacingAndGlyphs" stroke="#008000" stroke-width="0.35">ON</text>
<line x1="560.08" y1="840.74" x2="600.18" y2="840.74" stroke="#1f741f" stroke-width="2" />
<line x1="621.58" y1="840.74" x2="659.12" y2="840.74" stroke="#1f741f" stroke-width="2" />
<line x1="600.18" y1="829.94" x2="600.18" y2="851.54" stroke="#1f741f" stroke-width="2" />
<line x1="621.58" y1="829.94" x2="621.58" y2="851.54" stroke="#1f741f" stroke-width="2" />
<text x="597.53" y="827.64" font-size="13.75" fill="#333" font-family='"Noto Sans Mono CJK JP","Liberation Mono",monospace' textLength="27.5" lengthAdjust="spacingAndGlyphs" >T500</text>
<text x="570.28" y="876.54" font-size="13.75" fill="#008000" font-family='"IPAGothic","Noto Sans CJK JP",monospace' textLength="41.25" lengthAdjust="spacingAndGlyphs" stroke="#008000" stroke-width="0.35">上流側</text>
<text x="611.53" y="876.54" font-size="13.75" fill="#008000" font-family='"Noto Sans Mono CJK JP","Liberation Mono",monospace' textLength="20.625" lengthAdjust="spacingAndGlyphs" stroke="#008000" stroke-width="0.35">CV_</text>
<text x="632.155" y="876.54" font-size="13.75" fill="#008000" font-family='"IPAGothic","Noto Sans CJK JP",monospace' textLength="13.75" lengthAdjust="spacingAndGlyphs" stroke="#008000" stroke-width="0.35">ﾋﾟ</text>
<text x="570.28" y="890.74" font-size="13.75" fill="#008000" font-family='"IPAGothic","Noto Sans CJK JP",monospace' textLength="82.5" lengthAdjust="spacingAndGlyphs" stroke="#008000" stroke-width="0.35">ｯﾁ送り完了位</text>
<line x1="659.12" y1="840.74" x2="1253.36" y2="840.74" stroke="#333333" stroke-width="1.6" />
<line x1="1253.36" y1="840.74" x2="1292.66" y2="840.74" stroke="#1f741f" stroke-width="2" />
<line x1="1313.06" y1="840.74" x2="1352.4" y2="840.74" stroke="#1f741f" stroke-width="2" />
<polygon points="1298.64,830.54 1307.08,830.54 1313.06,836.515 1313.06,844.965 1307.08,850.94 1298.64,850.94 1292.66,844.965 1292.66,836.515" fill="#fff" stroke="#1f741f" stroke-width="1.7"/>
<text x="1286.07" y="827.64" font-size="13.75" fill="#333" font-family='"Noto Sans Mono CJK JP","Liberation Mono",monospace' textLength="34.375" lengthAdjust="spacingAndGlyphs" >L2021</text>
<text x="1263.56" y="876.54" font-size="13.75" fill="#008000" font-family='"IPAGothic","Noto Sans CJK JP",monospace' textLength="82.5" lengthAdjust="spacingAndGlyphs" stroke="#008000" stroke-width="0.35">【原点条件】</text>
<text x="1263.56" y="890.74" font-size="13.75" fill="#008000" font-family='"IPAGothic","Noto Sans CJK JP",monospace' textLength="41.25" lengthAdjust="spacingAndGlyphs" stroke="#008000" stroke-width="0.35">上流側</text>
<text x="1304.81" y="890.74" font-size="13.75" fill="#008000" font-family='"Noto Sans Mono CJK JP","Liberation Mono",monospace' textLength="13.75" lengthAdjust="spacingAndGlyphs" stroke="#008000" stroke-width="0.35">CV</text>
<text x="1318.56" y="890.74" font-size="13.75" fill="#008000" font-family='"IPAGothic","Noto Sans CJK JP",monospace' textLength="13.75" lengthAdjust="spacingAndGlyphs" stroke="#008000" stroke-width="0.35">部</text>
<text x="1332.31" y="890.74" font-size="13.75" fill="#008000" font-family='"Noto Sans Mono CJK JP","Liberation Mono",monospace' textLength="6.875" lengthAdjust="spacingAndGlyphs" stroke="#008000" stroke-width="0.35">_</text>
<line x1="560.08" y1="840.74" x2="560.08" y2="1039.61" stroke="#333333" stroke-width="1.7" />
<line x1="560.08" y1="939.8" x2="600.18" y2="939.8" stroke="#1f741f" stroke-width="2" />
<line x1="621.58" y1="939.8" x2="659.12" y2="939.8" stroke="#1f741f" stroke-width="2" />
<line x1="600.18" y1="929" x2="600.18" y2="950.6" stroke="#1f741f" stroke-width="2" />
<line x1="621.58" y1="929" x2="621.58" y2="950.6" stroke="#1f741f" stroke-width="2" />
<text x="597.53" y="926.7" font-size="13.75" fill="#333" font-family='"Noto Sans Mono CJK JP","Liberation Mono",monospace' textLength="27.5" lengthAdjust="spacingAndGlyphs" >T530</text>
<text x="570.28" y="975.6" font-size="13.75" fill="#008000" font-family='"IPAGothic","Noto Sans CJK JP",monospace' textLength="41.25" lengthAdjust="spacingAndGlyphs" stroke="#008000" stroke-width="0.35">下流側</text>
<text x="611.53" y="975.6" font-size="13.75" fill="#008000" font-family='"Noto Sans Mono CJK JP","Liberation Mono",monospace' textLength="20.625" lengthAdjust="spacingAndGlyphs" stroke="#008000" stroke-width="0.35">CV_</text>
<text x="632.155" y="975.6" font-size="13.75" fill="#008000" font-family='"IPAGothic","Noto Sans CJK JP",monospace' textLength="13.75" lengthAdjust="spacingAndGlyphs" stroke="#008000" stroke-width="0.35">ﾋﾟ</text>
<text x="570.28" y="989.8" font-size="13.75" fill="#008000" font-family='"IPAGothic","Noto Sans CJK JP",monospace' textLength="82.5" lengthAdjust="spacingAndGlyphs" stroke="#008000" stroke-width="0.35">ｯﾁ送り完了位</text>
<line x1="659.12" y1="939.8" x2="1253.36" y2="939.8" stroke="#333333" stroke-width="1.6" />
<line x1="1253.36" y1="939.8" x2="1292.66" y2="939.8" stroke="#1f741f" stroke-width="2" />
<line x1="1313.06" y1="939.8" x2="1352.4" y2="939.8" stroke="#1f741f" stroke-width="2" />
<polygon points="1298.64,929.6 1307.08,929.6 1313.06,935.575 1313.06,944.025 1307.08,950 1298.64,950 1292.66,944.025 1292.66,935.575" fill="#fff" stroke="#1f741f" stroke-width="1.7"/>
<text x="1286.07" y="926.7" font-size="13.75" fill="#333" font-family='"Noto Sans Mono CJK JP","Liberation Mono",monospace' textLength="34.375" lengthAdjust="spacingAndGlyphs" >L2022</text>
<text x="1263.56" y="975.6" font-size="13.75" fill="#008000" font-family='"IPAGothic","Noto Sans CJK JP",monospace' textLength="82.5" lengthAdjust="spacingAndGlyphs" stroke="#008000" stroke-width="0.35">【原点条件】</text>
<text x="1263.56" y="989.8" font-size="13.75" fill="#008000" font-family='"IPAGothic","Noto Sans CJK JP",monospace' textLength="41.25" lengthAdjust="spacingAndGlyphs" stroke="#008000" stroke-width="0.35">下流側</text>
<text x="1304.81" y="989.8" font-size="13.75" fill="#008000" font-family='"Noto Sans Mono CJK JP","Liberation Mono",monospace' textLength="13.75" lengthAdjust="spacingAndGlyphs" stroke="#008000" stroke-width="0.35">CV</text>
<text x="1318.56" y="989.8" font-size="13.75" fill="#008000" font-family='"IPAGothic","Noto Sans CJK JP",monospace' textLength="13.75" lengthAdjust="spacingAndGlyphs" stroke="#008000" stroke-width="0.35">部</text>
<text x="1332.31" y="989.8" font-size="13.75" fill="#008000" font-family='"Noto Sans Mono CJK JP","Liberation Mono",monospace' textLength="6.875" lengthAdjust="spacingAndGlyphs" stroke="#008000" stroke-width="0.35">_</text>
<line x1="560.08" y1="1038.86" x2="600.18" y2="1038.86" stroke="#1f741f" stroke-width="2" />
<line x1="621.58" y1="1038.86" x2="659.12" y2="1038.86" stroke="#1f741f" stroke-width="2" />
<line x1="600.18" y1="1028.06" x2="600.18" y2="1049.66" stroke="#1f741f" stroke-width="2" />
<line x1="621.58" y1="1028.06" x2="621.58" y2="1049.66" stroke="#1f741f" stroke-width="2" />
<text x="597.53" y="1025.76" font-size="13.75" fill="#333" font-family='"Noto Sans Mono CJK JP","Liberation Mono",monospace' textLength="27.5" lengthAdjust="spacingAndGlyphs" >T770</text>
<text x="570.28" y="1074.66" font-size="13.75" fill="#008000" font-family='"Noto Sans Mono CJK JP","Liberation Mono",monospace' textLength="13.75" lengthAdjust="spacingAndGlyphs" stroke="#008000" stroke-width="0.35">NG</text>
<text x="584.03" y="1074.66" font-size="13.75" fill="#008000" font-family='"IPAGothic","Noto Sans CJK JP",monospace' textLength="27.5" lengthAdjust="spacingAndGlyphs" stroke="#008000" stroke-width="0.35">排出</text>
<text x="611.53" y="1074.66" font-size="13.75" fill="#008000" font-family='"Noto Sans Mono CJK JP","Liberation Mono",monospace' textLength="20.625" lengthAdjust="spacingAndGlyphs" stroke="#008000" stroke-width="0.35">PP_</text>
<text x="632.155" y="1074.66" font-size="13.75" fill="#008000" font-family='"IPAGothic","Noto Sans CJK JP",monospace' textLength="13.75" lengthAdjust="spacingAndGlyphs" stroke="#008000" stroke-width="0.35">待</text>
<text x="570.28" y="1088.86" font-size="13.75" fill="#008000" font-family='"IPAGothic","Noto Sans CJK JP",monospace' textLength="41.25" lengthAdjust="spacingAndGlyphs" stroke="#008000" stroke-width="0.35">機位置</text>
<line x1="659.12" y1="1038.86" x2="699.22" y2="1038.86" stroke="#1f741f" stroke-width="2" />
<line x1="720.62" y1="1038.86" x2="758.16" y2="1038.86" stroke="#1f741f" stroke-width="2" />
<line x1="699.22" y1="1028.06" x2="699.22" y2="1049.66" stroke="#1f741f" stroke-width="2" />
<line x1="720.62" y1="1028.06" x2="720.62" y2="1049.66" stroke="#1f741f" stroke-width="2" />
<text x="682.82" y="1025.76" font-size="13.75" fill="#333" font-family='"Noto Sans Mono CJK JP","Liberation Mono",monospace' textLength="55" lengthAdjust="spacingAndGlyphs" >D20600.0</text>
<text x="669.32" y="1074.66" font-size="13.75" fill="#008000" font-family='"IPAGothic","Noto Sans CJK JP",monospace' textLength="82.5" lengthAdjust="spacingAndGlyphs" stroke="#008000" stroke-width="0.35">【製品情報】</text>
<text x="669.32" y="1088.86" font-size="13.75" fill="#008000" font-family='"Noto Sans Mono CJK JP","Liberation Mono",monospace' textLength="13.75" lengthAdjust="spacingAndGlyphs" stroke="#008000" stroke-width="0.35">NG</text>
<text x="683.07" y="1088.86" font-size="13.75" fill="#008000" font-family='"IPAGothic","Noto Sans CJK JP",monospace' textLength="27.5" lengthAdjust="spacingAndGlyphs" stroke="#008000" stroke-width="0.35">排出</text>
<text x="710.57" y="1088.86" font-size="13.75" fill="#008000" font-family='"Noto Sans Mono CJK JP","Liberation Mono",monospace' textLength="20.625" lengthAdjust="spacingAndGlyphs" stroke="#008000" stroke-width="0.35">PP_</text>
<text x="731.195" y="1088.86" font-size="13.75" fill="#008000" font-family='"IPAGothic","Noto Sans CJK JP",monospace' textLength="13.75" lengthAdjust="spacingAndGlyphs" stroke="#008000" stroke-width="0.35">製</text>
<line x1="758.16" y1="1038.86" x2="798.26" y2="1038.86" stroke="#1f741f" stroke-width="2" />
<line x1="819.66" y1="1038.86" x2="857.2" y2="1038.86" stroke="#1f741f" stroke-width="2" />
<line x1="798.26" y1="1028.06" x2="798.26" y2="1049.66" stroke="#1f741f" stroke-width="2" />
<line x1="819.66" y1="1028.06" x2="819.66" y2="1049.66" stroke="#1f741f" stroke-width="2" />
<text x="792.173" y="1025.76" font-size="13.75" fill="#333" font-family='"Noto Sans Mono CJK JP","Liberation Mono",monospace' textLength="34.375" lengthAdjust="spacingAndGlyphs" >T1740</text>
<text x="768.36" y="1074.66" font-size="13.75" fill="#008000" font-family='"IPAGothic","Noto Sans CJK JP",monospace' textLength="13.75" lengthAdjust="spacingAndGlyphs" stroke="#008000" stroke-width="0.35">【</text>
<text x="782.11" y="1074.66" font-size="13.75" fill="#008000" font-family='"Noto Sans Mono CJK JP","Liberation Mono",monospace' textLength="13.75" lengthAdjust="spacingAndGlyphs" stroke="#008000" stroke-width="0.35">TM</text>
<text x="795.86" y="1074.66" font-size="13.75" fill="#008000" font-family='"IPAGothic","Noto Sans CJK JP",monospace' textLength="13.75" lengthAdjust="spacingAndGlyphs" stroke="#008000" stroke-width="0.35">】</text>
<text x="809.61" y="1074.66" font-size="13.75" fill="#008000" font-family='"Noto Sans Mono CJK JP","Liberation Mono",monospace' textLength="13.75" lengthAdjust="spacingAndGlyphs" stroke="#008000" stroke-width="0.35">NG</text>
<text x="823.36" y="1074.66" font-size="13.75" fill="#008000" font-family='"IPAGothic","Noto Sans CJK JP",monospace' textLength="27.5" lengthAdjust="spacingAndGlyphs" stroke="#008000" stroke-width="0.35">排出</text>
<text x="768.36" y="1088.86" font-size="13.75" fill="#008000" font-family='"Noto Sans Mono CJK JP","Liberation Mono",monospace' textLength="13.75" lengthAdjust="spacingAndGlyphs" stroke="#008000" stroke-width="0.35">PP</text>
<text x="782.11" y="1088.86" font-size="13.75" fill="#008000" font-family='"IPAGothic","Noto Sans CJK JP",monospace' textLength="61.875" lengthAdjust="spacingAndGlyphs" stroke="#008000" stroke-width="0.35">ﾕﾆｯﾄ 吸着</text>
<line x1="857.2" y1="1038.86" x2="1253.36" y2="1038.86" stroke="#333333" stroke-width="1.6" />
<line x1="1253.36" y1="1038.86" x2="1292.66" y2="1038.86" stroke="#1f741f" stroke-width="2" />
<line x1="1313.06" y1="1038.86" x2="1352.4" y2="1038.86" stroke="#1f741f" stroke-width="2" />
<polygon points="1298.64,1028.66 1307.08,1028.66 1313.06,1034.64 1313.06,1043.08 1307.08,1049.06 1298.64,1049.06 1292.66,1043.08 1292.66,1034.64" fill="#fff" stroke="#1f741f" stroke-width="1.7"/>
<text x="1286.07" y="1025.76" font-size="13.75" fill="#333" font-family='"Noto Sans Mono CJK JP","Liberation Mono",monospace' textLength="34.375" lengthAdjust="spacingAndGlyphs" >L2023</text>
<text x="1263.56" y="1074.66" font-size="13.75" fill="#008000" font-family='"IPAGothic","Noto Sans CJK JP",monospace' textLength="82.5" lengthAdjust="spacingAndGlyphs" stroke="#008000" stroke-width="0.35">【原点条件】</text>
<text x="1263.56" y="1088.86" font-size="13.75" fill="#008000" font-family='"Noto Sans Mono CJK JP","Liberation Mono",monospace' textLength="13.75" lengthAdjust="spacingAndGlyphs" stroke="#008000" stroke-width="0.35">NG</text>
<text x="1277.31" y="1088.86" font-size="13.75" fill="#008000" font-family='"IPAGothic","Noto Sans CJK JP",monospace' textLength="27.5" lengthAdjust="spacingAndGlyphs" stroke="#008000" stroke-width="0.35">排出</text>
<text x="1304.81" y="1088.86" font-size="13.75" fill="#008000" font-family='"Noto Sans Mono CJK JP","Liberation Mono",monospace' textLength="13.75" lengthAdjust="spacingAndGlyphs" stroke="#008000" stroke-width="0.35">PP</text>
<text x="1318.56" y="1088.86" font-size="13.75" fill="#008000" font-family='"IPAGothic","Noto Sans CJK JP",monospace' textLength="20.625" lengthAdjust="spacingAndGlyphs" stroke="#008000" stroke-width="0.35">ﾕﾆｯ</text>
<line x1="659.12" y1="1038.86" x2="659.12" y2="1138.67" stroke="#333333" stroke-width="1.7" />
<line x1="857.2" y1="1038.86" x2="857.2" y2="1138.67" stroke="#333333" stroke-width="1.7" />
<line x1="659.12" y1="1137.92" x2="699.22" y2="1137.92" stroke="#1f741f" stroke-width="2" />
<line x1="720.62" y1="1137.92" x2="758.16" y2="1137.92" stroke="#1f741f" stroke-width="2" />
<line x1="699.22" y1="1127.12" x2="699.22" y2="1148.72" stroke="#1f741f" stroke-width="2" />
<line x1="720.62" y1="1127.12" x2="720.62" y2="1148.72" stroke="#1f741f" stroke-width="2" />
<line x1="688.42" y1="1148.62" x2="731.42" y2="1127.22" stroke="#1f741f" stroke-width="1.5" />
<text x="682.82" y="1124.82" font-size="13.75" fill="#333" font-family='"Noto Sans Mono CJK JP","Liberation Mono",monospace' textLength="55" lengthAdjust="spacingAndGlyphs" >D20600.0</text>
<text x="669.32" y="1173.72" font-size="13.75" fill="#008000" font-family='"IPAGothic","Noto Sans CJK JP",monospace' textLength="82.5" lengthAdjust="spacingAndGlyphs" stroke="#008000" stroke-width="0.35">【製品情報】</text>
<text x="669.32" y="1187.92" font-size="13.75" fill="#008000" font-family='"Noto Sans Mono CJK JP","Liberation Mono",monospace' textLength="13.75" lengthAdjust="spacingAndGlyphs" stroke="#008000" stroke-width="0.35">NG</text>
<text x="683.07" y="1187.92" font-size="13.75" fill="#008000" font-family='"IPAGothic","Noto Sans CJK JP",monospace' textLength="27.5" lengthAdjust="spacingAndGlyphs" stroke="#008000" stroke-width="0.35">排出</text>
<text x="710.57" y="1187.92" font-size="13.75" fill="#008000" font-family='"Noto Sans Mono CJK JP","Liberation Mono",monospace' textLength="20.625" lengthAdjust="spacingAndGlyphs" stroke="#008000" stroke-width="0.35">PP_</text>
<text x="731.195" y="1187.92" font-size="13.75" fill="#008000" font-family='"IPAGothic","Noto Sans CJK JP",monospace' textLength="13.75" lengthAdjust="spacingAndGlyphs" stroke="#008000" stroke-width="0.35">製</text>
<line x1="758.16" y1="1137.92" x2="798.26" y2="1137.92" stroke="#1f741f" stroke-width="2" />
<line x1="819.66" y1="1137.92" x2="857.2" y2="1137.92" stroke="#1f741f" stroke-width="2" />
<line x1="798.26" y1="1127.12" x2="798.26" y2="1148.72" stroke="#1f741f" stroke-width="2" />
<line x1="819.66" y1="1127.12" x2="819.66" y2="1148.72" stroke="#1f741f" stroke-width="2" />
<text x="792.173" y="1124.82" font-size="13.75" fill="#333" font-family='"Noto Sans Mono CJK JP","Liberation Mono",monospace' textLength="34.375" lengthAdjust="spacingAndGlyphs" >T1741</text>
<text x="768.36" y="1173.72" font-size="13.75" fill="#008000" font-family='"IPAGothic","Noto Sans CJK JP",monospace' textLength="13.75" lengthAdjust="spacingAndGlyphs" stroke="#008000" stroke-width="0.35">【</text>
<text x="782.11" y="1173.72" font-size="13.75" fill="#008000" font-family='"Noto Sans Mono CJK JP","Liberation Mono",monospace' textLength="13.75" lengthAdjust="spacingAndGlyphs" stroke="#008000" stroke-width="0.35">TM</text>
<text x="795.86" y="1173.72" font-size="13.75" fill="#008000" font-family='"IPAGothic","Noto Sans CJK JP",monospace' textLength="13.75" lengthAdjust="spacingAndGlyphs" stroke="#008000" stroke-width="0.35">】</text>
<text x="809.61" y="1173.72" font-size="13.75" fill="#008000" font-family='"Noto Sans Mono CJK JP","Liberation Mono",monospace' textLength="13.75" lengthAdjust="spacingAndGlyphs" stroke="#008000" stroke-width="0.35">NG</text>
<text x="823.36" y="1173.72" font-size="13.75" fill="#008000" font-family='"IPAGothic","Noto Sans CJK JP",monospace' textLength="27.5" lengthAdjust="spacingAndGlyphs" stroke="#008000" stroke-width="0.35">排出</text>
<text x="768.36" y="1187.92" font-size="13.75" fill="#008000" font-family='"Noto Sans Mono CJK JP","Liberation Mono",monospace' textLength="13.75" lengthAdjust="spacingAndGlyphs" stroke="#008000" stroke-width="0.35">PP</text>
<text x="782.11" y="1187.92" font-size="13.75" fill="#008000" font-family='"IPAGothic","Noto Sans CJK JP",monospace' textLength="61.875" lengthAdjust="spacingAndGlyphs" stroke="#008000" stroke-width="0.35">ﾕﾆｯﾄ 吸着</text>
<text x="370" y="1210.68" font-size="15.5" fill="#1a1a1a" font-family='"Noto Sans Mono CJK JP","Liberation Mono",monospace' textLength="23.25" lengthAdjust="spacingAndGlyphs" >U3_</text>
<text x="393.25" y="1210.68" font-size="15.5" fill="#1a1a1a" font-family='"IPAGothic","Noto Sans CJK JP",monospace' textLength="15.5" lengthAdjust="spacingAndGlyphs" >上</text>
<text x="408.75" y="1210.68" font-size="15.5" fill="#1a1a1a" font-family='"Noto Sans Mono CJK JP","Liberation Mono",monospace' textLength="7.75" lengthAdjust="spacingAndGlyphs" >/</text>
<text x="416.5" y="1210.68" font-size="15.5" fill="#1a1a1a" font-family='"IPAGothic","Noto Sans CJK JP",monospace' textLength="31" lengthAdjust="spacingAndGlyphs" >下流</text>
<text x="447.5" y="1210.68" font-size="15.5" fill="#1a1a1a" font-family='"Noto Sans Mono CJK JP","Liberation Mono",monospace' textLength="15.5" lengthAdjust="spacingAndGlyphs" >CV</text>
<text x="463" y="1210.68" font-size="15.5" fill="#1a1a1a" font-family='"IPAGothic","Noto Sans CJK JP",monospace' textLength="139.5" lengthAdjust="spacingAndGlyphs" >部制御【動作条件】</text>
<line x1="363" y1="1263.08" x2="402.1" y2="1263.08" stroke="#1f741f" stroke-width="2" />
<line x1="423.5" y1="1263.08" x2="461.04" y2="1263.08" stroke="#1f741f" stroke-width="2" />
<line x1="402.1" y1="1252.28" x2="402.1" y2="1273.88" stroke="#1f741f" stroke-width="2" />
<line x1="423.5" y1="1252.28" x2="423.5" y2="1273.88" stroke="#1f741f" stroke-width="2" />
<text x="399.45" y="1249.98" font-size="13.75" fill="#333" font-family='"Noto Sans Mono CJK JP","Liberation Mono",monospace' textLength="27.5" lengthAdjust="spacingAndGlyphs" >M210</text>
<text x="372.2" y="1298.88" font-size="13.75" fill="#008000" font-family='"IPAGothic","Noto Sans CJK JP",monospace' textLength="82.5" lengthAdjust="spacingAndGlyphs" stroke="#008000" stroke-width="0.35">自動運転ｻｲｸﾙ</text>
<text x="372.2" y="1313.08" font-size="13.75" fill="#008000" font-family='"Noto Sans Mono CJK JP","Liberation Mono",monospace' textLength="13.75" lengthAdjust="spacingAndGlyphs" stroke="#008000" stroke-width="0.35">ON</text>
<line x1="461.04" y1="1263.08" x2="501.14" y2="1263.08" stroke="#1f741f" stroke-width="2" />
<line x1="522.54" y1="1263.08" x2="560.08" y2="1263.08" stroke="#1f741f" stroke-width="2" />
<line x1="501.14" y1="1252.28" x2="501.14" y2="1273.88" stroke="#1f741f" stroke-width="2" />
<line x1="522.54" y1="1252.28" x2="522.54" y2="1273.88" stroke="#1f741f" stroke-width="2" />
<line x1="490.34" y1="1273.78" x2="533.34" y2="1252.38" stroke="#1f741f" stroke-width="1.5" />
<text x="498.49" y="1249.98" font-size="13.75" fill="#333" font-family='"Noto Sans Mono CJK JP","Liberation Mono",monospace' textLength="27.5" lengthAdjust="spacingAndGlyphs" >M240</text>
<text x="471.24" y="1298.88" font-size="13.75" fill="#008000" font-family='"IPAGothic","Noto Sans CJK JP",monospace' textLength="82.5" lengthAdjust="spacingAndGlyphs" stroke="#008000" stroke-width="0.35">自動運転停止</text>
<text x="471.24" y="1313.08" font-size="13.75" fill="#008000" font-family='"IPAGothic","Noto Sans CJK JP",monospace' textLength="27.5" lengthAdjust="spacingAndGlyphs" stroke="#008000" stroke-width="0.35">受付</text>
<line x1="560.08" y1="1263.08" x2="1253.36" y2="1263.08" stroke="#333333" stroke-width="1.6" />
<line x1="1253.36" y1="1263.08" x2="1292.66" y2="1263.08" stroke="#1f741f" stroke-width="2" />
<line x1="1313.06" y1="1263.08" x2="1352.4" y2="1263.08" stroke="#1f741f" stroke-width="2" />
<polygon points="1298.64,1252.88 1307.08,1252.88 1313.06,1258.86 1313.06,1267.3 1307.08,1273.28 1298.64,1273.28 1292.66,1267.3 1292.66,1258.86" fill="#fff" stroke="#1f741f" stroke-width="1.7"/>
<text x="1286.07" y="1249.98" font-size="13.75" fill="#333" font-family='"Noto Sans Mono CJK JP","Liberation Mono",monospace' textLength="34.375" lengthAdjust="spacingAndGlyphs" >L2030</text>
<text x="1263.56" y="1298.88" font-size="13.75" fill="#008000" font-family='"IPAGothic","Noto Sans CJK JP",monospace' textLength="27.5" lengthAdjust="spacingAndGlyphs" stroke="#008000" stroke-width="0.35">【上</text>
<text x="1291.06" y="1298.88" font-size="13.75" fill="#008000" font-family='"Noto Sans Mono CJK JP","Liberation Mono",monospace' textLength="6.875" lengthAdjust="spacingAndGlyphs" stroke="#008000" stroke-width="0.35">/</text>
<text x="1297.94" y="1298.88" font-size="13.75" fill="#008000" font-family='"IPAGothic","Noto Sans CJK JP",monospace' textLength="27.5" lengthAdjust="spacingAndGlyphs" stroke="#008000" stroke-width="0.35">下流</text>
<text x="1325.44" y="1298.88" font-size="13.75" fill="#008000" font-family='"Noto Sans Mono CJK JP","Liberation Mono",monospace' textLength="13.75" lengthAdjust="spacingAndGlyphs" stroke="#008000" stroke-width="0.35">CV</text>
<text x="1263.56" y="1313.08" font-size="13.75" fill="#008000" font-family='"IPAGothic","Noto Sans CJK JP",monospace' textLength="82.5" lengthAdjust="spacingAndGlyphs" stroke="#008000" stroke-width="0.35">部】自動運転</text>
</g>
</g>
</svg>
</body></html>
